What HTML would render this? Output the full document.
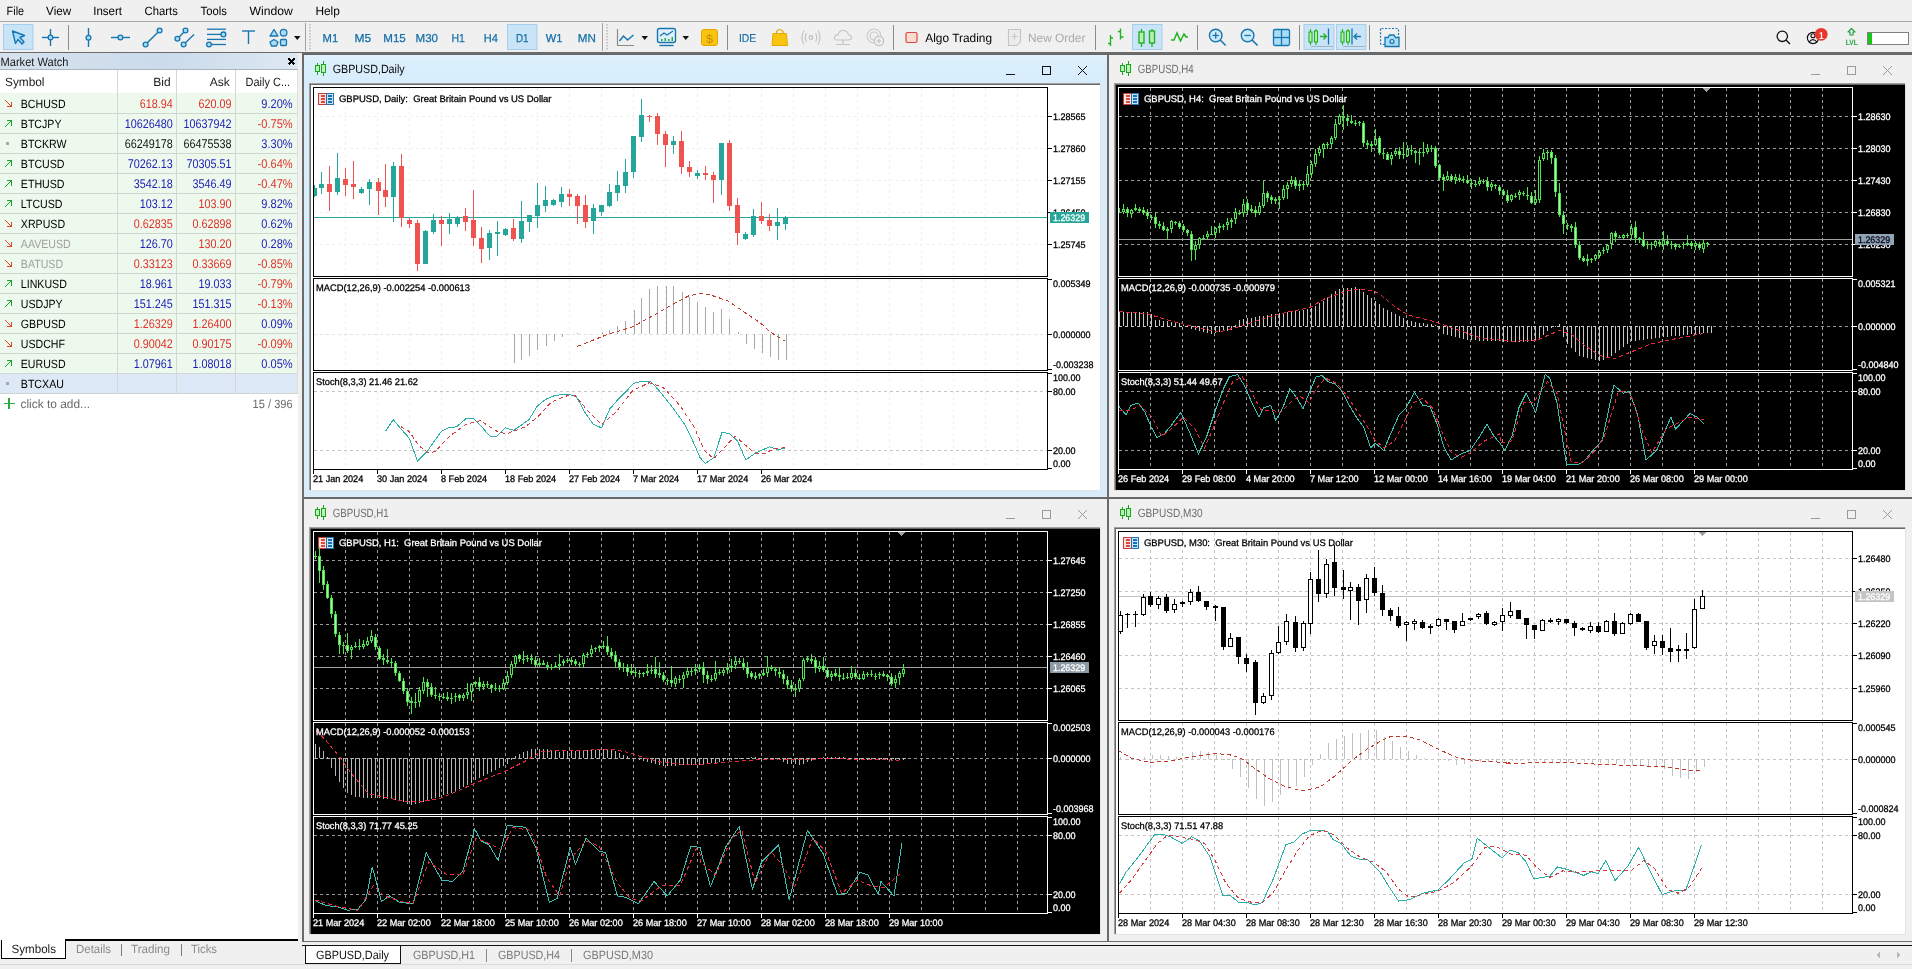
<!DOCTYPE html>
<html><head><meta charset="utf-8"><title>MetaTrader 5</title>
<style>html,body{margin:0;padding:0;background:#f0f0f0;overflow:hidden}svg{display:block;will-change:transform}text{font-family:"Liberation Sans",sans-serif}</style>
</head><body>
<svg width="1912" height="969" viewBox="0 0 1912 969" shape-rendering="crispEdges" text-rendering="geometricPrecision">
<defs><linearGradient id="acttitle" x1="0" x2="0" y1="0" y2="1"><stop offset="0" stop-color="#e4f3fd"/><stop offset="0.25" stop-color="#daeefc"/><stop offset="1" stop-color="#d8edfc"/></linearGradient></defs>
<rect x="0" y="0" width="1912" height="969" fill="#f0f0f0"/>
<rect x="0" y="0" width="1912" height="21" fill="#f0f0f0"/>
<rect x="0" y="21" width="1912" height="1" fill="#a8a8a8"/>
<text x="6.6" y="15.2" font-size="12" fill="#000" textLength="17.5" lengthAdjust="spacingAndGlyphs">File</text>
<text x="46.1" y="15.2" font-size="12" fill="#000" textLength="25.1" lengthAdjust="spacingAndGlyphs">View</text>
<text x="93.2" y="15.2" font-size="12" fill="#000" textLength="28.8" lengthAdjust="spacingAndGlyphs">Insert</text>
<text x="144.6" y="15.2" font-size="12" fill="#000" textLength="33.3" lengthAdjust="spacingAndGlyphs">Charts</text>
<text x="200.5" y="15.2" font-size="12" fill="#000" textLength="26.4" lengthAdjust="spacingAndGlyphs">Tools</text>
<text x="249.5" y="15.2" font-size="12" fill="#000" textLength="43.3" lengthAdjust="spacingAndGlyphs">Window</text>
<text x="315.4" y="15.2" font-size="12" fill="#000" textLength="24.5" lengthAdjust="spacingAndGlyphs">Help</text>
<g shape-rendering="geometricPrecision"><rect x="0" y="22" width="1912" height="30" fill="#f0f0f0"/>
<rect x="0" y="52" width="1912" height="2" fill="#6b6b6b"/>
<rect x="3.5" y="24.5" width="29.5" height="25" fill="#c9e3f7" stroke="#a4cdee" stroke-width="1"/>
<rect x="507.5" y="24.5" width="29.5" height="25" fill="#c9e3f7" stroke="#a4cdee" stroke-width="1"/>
<rect x="1132.5" y="24.5" width="29.5" height="25" fill="#c9e3f7" stroke="#a4cdee" stroke-width="1"/>
<rect x="1304" y="24.5" width="30" height="25" fill="#c9e3f7" stroke="#a4cdee" stroke-width="1"/>
<rect x="1336.5" y="24.5" width="29.5" height="25" fill="#c9e3f7" stroke="#a4cdee" stroke-width="1"/>
<line x1="68.5" y1="25" x2="68.5" y2="50" stroke="#8c8c8c" stroke-width="1"/>
<line x1="727.5" y1="25" x2="727.5" y2="50" stroke="#8c8c8c" stroke-width="1"/>
<line x1="893.5" y1="25" x2="893.5" y2="50" stroke="#8c8c8c" stroke-width="1"/>
<line x1="1095.5" y1="25" x2="1095.5" y2="50" stroke="#8c8c8c" stroke-width="1"/>
<line x1="1197.5" y1="25" x2="1197.5" y2="50" stroke="#8c8c8c" stroke-width="1"/>
<line x1="1299.5" y1="25" x2="1299.5" y2="50" stroke="#8c8c8c" stroke-width="1"/>
<line x1="1369.5" y1="25" x2="1369.5" y2="50" stroke="#8c8c8c" stroke-width="1"/>
<line x1="1405.5" y1="25" x2="1405.5" y2="50" stroke="#8c8c8c" stroke-width="1"/>
<line x1="305.5" y1="23" x2="305.5" y2="51" stroke="#a0a0a0" stroke-width="1"/>
<line x1="602.5" y1="23" x2="602.5" y2="51" stroke="#a0a0a0" stroke-width="1"/>
<line x1="310" y1="24" x2="310" y2="50" stroke="#b8b8b8" stroke-width="1.5" stroke-dasharray="1.5,1.5"/>
<line x1="607" y1="24" x2="607" y2="50" stroke="#b8b8b8" stroke-width="1.5" stroke-dasharray="1.5,1.5"/>
<path d="M12.5,31 L24.5,35.5 L20,37.5 L24,42 L22,44 L18,39.5 L15.5,43.5 Z" fill="#a9dcf6" stroke="#1776b0" stroke-width="1.4" stroke-linejoin="round"/>
<line x1="50.5" y1="29" x2="50.5" y2="46" stroke="#1776b0" stroke-width="1.4"/>
<line x1="42" y1="37.5" x2="59" y2="37.5" stroke="#1776b0" stroke-width="1.4"/>
<circle cx="50.5" cy="37.5" r="2.3" fill="#a9dcf6" stroke="#1776b0" stroke-width="1.3"/>
<line x1="88.5" y1="28" x2="88.5" y2="47" stroke="#1776b0" stroke-width="1.4"/>
<circle cx="88.5" cy="37.7" r="2.4" fill="#a9dcf6" stroke="#1776b0" stroke-width="1.3"/>
<line x1="111" y1="37.5" x2="130" y2="37.5" stroke="#1776b0" stroke-width="1.4"/>
<circle cx="120.4" cy="37.5" r="2.4" fill="#a9dcf6" stroke="#1776b0" stroke-width="1.3"/>
<line x1="145.6" y1="44.5" x2="159.6" y2="30.5" stroke="#1776b0" stroke-width="1.4"/>
<circle cx="145.6" cy="44.5" r="2.4" fill="#a9dcf6" stroke="#1776b0" stroke-width="1.3"/>
<circle cx="159.6" cy="30.5" r="2.4" fill="#a9dcf6" stroke="#1776b0" stroke-width="1.3"/>
<line x1="177.4" y1="38.7" x2="185.5" y2="30.5" stroke="#1776b0" stroke-width="1.4"/>
<line x1="183.6" y1="44.5" x2="194" y2="34.4" stroke="#1776b0" stroke-width="1.4"/>
<circle cx="185.5" cy="30.5" r="2.4" fill="#a9dcf6" stroke="#1776b0" stroke-width="1.3"/>
<circle cx="177.4" cy="38.7" r="2.4" fill="#a9dcf6" stroke="#1776b0" stroke-width="1.3"/>
<circle cx="183.6" cy="44.5" r="2.4" fill="#a9dcf6" stroke="#1776b0" stroke-width="1.3"/>
<line x1="207" y1="29.2" x2="226" y2="29.2" stroke="#1776b0" stroke-width="1.3"/>
<line x1="207" y1="34.4" x2="226" y2="34.4" stroke="#1776b0" stroke-width="1.3"/>
<line x1="207" y1="39.4" x2="226" y2="39.4" stroke="#1776b0" stroke-width="1.3"/>
<line x1="207" y1="44.5" x2="226" y2="44.5" stroke="#1776b0" stroke-width="1.3"/>
<circle cx="223.4" cy="34.4" r="2.4" fill="#a9dcf6" stroke="#1776b0" stroke-width="1.3"/>
<circle cx="209" cy="44.5" r="2.4" fill="#a9dcf6" stroke="#1776b0" stroke-width="1.3"/>
<line x1="242" y1="31" x2="255" y2="31" stroke="#1776b0" stroke-width="1.4"/>
<line x1="248.5" y1="31" x2="248.5" y2="44" stroke="#1776b0" stroke-width="1.4"/>
<path d="M274,29.5 L278,36 L270,36 Z" fill="#a9dcf6" stroke="#1776b0" stroke-width="1.3" stroke-linejoin="round"/>
<circle cx="283.6" cy="32.7" r="3.3" fill="#a9dcf6" stroke="#1776b0" stroke-width="1.3"/>
<path d="M274,39.5 L278,42 L276.5,46 L271.5,46 L270,42 Z" fill="#a9dcf6" stroke="#1776b0" stroke-width="1.3" stroke-linejoin="round"/>
<rect x="280.5" y="39.5" width="6" height="6" fill="#a9dcf6" stroke="#1776b0" stroke-width="1.3" rx="1"/>
<path d="M294,36 L300.5,36 L297.25,40 Z" fill="#111"/>
<text x="322.6" y="41.7" font-size="11.5" fill="#1670a8" textLength="15.6" lengthAdjust="spacingAndGlyphs" stroke="#1670a8" stroke-width="0.25">M1</text>
<text x="354.4" y="41.7" font-size="11.5" fill="#1670a8" textLength="16.7" lengthAdjust="spacingAndGlyphs" stroke="#1670a8" stroke-width="0.25">M5</text>
<text x="383.3" y="41.7" font-size="11.5" fill="#1670a8" textLength="22.5" lengthAdjust="spacingAndGlyphs" stroke="#1670a8" stroke-width="0.25">M15</text>
<text x="415.5" y="41.7" font-size="11.5" fill="#1670a8" textLength="22.5" lengthAdjust="spacingAndGlyphs" stroke="#1670a8" stroke-width="0.25">M30</text>
<text x="451.5" y="41.7" font-size="11.5" fill="#1670a8" textLength="13.4" lengthAdjust="spacingAndGlyphs" stroke="#1670a8" stroke-width="0.25">H1</text>
<text x="483.8" y="41.7" font-size="11.5" fill="#1670a8" textLength="14.2" lengthAdjust="spacingAndGlyphs" stroke="#1670a8" stroke-width="0.25">H4</text>
<text x="515.9" y="41.7" font-size="11.5" fill="#1670a8" textLength="12.6" lengthAdjust="spacingAndGlyphs" stroke="#1670a8" stroke-width="0.25">D1</text>
<text x="545.7" y="41.7" font-size="11.5" fill="#1670a8" textLength="16.7" lengthAdjust="spacingAndGlyphs" stroke="#1670a8" stroke-width="0.25">W1</text>
<text x="577.8" y="41.7" font-size="11.5" fill="#1670a8" textLength="18.1" lengthAdjust="spacingAndGlyphs" stroke="#1670a8" stroke-width="0.25">MN</text>
<path d="M617.5,29 L617.5,45.5 L634,45.5" fill="none" stroke="#8a8a8a" stroke-width="1.2"/>
<path d="M619.5,41 L623.5,36 L627.5,40 L633.5,35" fill="none" stroke="#1776b0" stroke-width="1.5"/>
<path d="M641.5,36 L648,36 L644.75,40 Z" fill="#111"/>
<rect x="657.5" y="28.5" width="18" height="14" rx="2" fill="#dff1fb" stroke="#1776b0" stroke-width="1.4"/>
<path d="M659.5,45.5 L673.5,45.5" stroke="#1776b0" stroke-width="1.4"/>
<path d="M660,36 L664,33 L667,35 L673,31" fill="none" stroke="#1776b0" stroke-width="1.2"/>
<rect x="661.0" y="39" width="1.5" height="2" fill="#27a844"/>
<rect x="664.5" y="38" width="1.5" height="3" fill="#27a844"/>
<rect x="668.0" y="39" width="1.5" height="2" fill="#27a844"/>
<rect x="671.5" y="37" width="1.5" height="4" fill="#27a844"/>
<path d="M682.5,36 L689,36 L685.75,40 Z" fill="#111"/>
<rect x="701.5" y="29.5" width="16" height="16" rx="2.5" fill="#f8c410" stroke="#e9a300" stroke-width="1"/>
<text x="706" y="42.5" font-size="12" fill="#c78a00" textLength="7" lengthAdjust="spacingAndGlyphs">$</text>
<text x="738.9" y="41.6" font-size="11.5" fill="#1670a8" textLength="17.2" lengthAdjust="spacingAndGlyphs" stroke="#1670a8" stroke-width="0.2">IDE</text>
<path d="M773,33.5 L786.5,33.5 L787.5,45.5 L772,45.5 Z" fill="#f8c410" stroke="#e5a800" stroke-width="1"/>
<path d="M776.5,34 L776.5,31.5 Q779.75,27.5 783,31.5 L783,34" fill="none" stroke="#e5a800" stroke-width="1.2"/>
<circle cx="811" cy="37.5" r="1.8" fill="none" stroke="#bdbdbd" stroke-width="1.2"/>
<path d="M806.5,33 Q804,37.5 806.5,42 M815.5,33 Q818,37.5 815.5,42 M804,30.5 Q800,37.5 804,44.5 M818,30.5 Q822,37.5 818,44.5" fill="none" stroke="#c4c4c4" stroke-width="1.1"/>
<path d="M837,40 Q834,40 834.5,37 Q835,34.5 838,35 Q839,30 843.5,30.5 Q848,31 848.5,35 Q852,35 851.5,38 Q851,40 848.5,40 Z" fill="none" stroke="#c4c4c4" stroke-width="1.1"/>
<path d="M843,40 L843,44 M836,44.5 L850,44.5" stroke="#c4c4c4" stroke-width="1.1"/>
<circle cx="874" cy="36" r="7" fill="none" stroke="#c8c8c8" stroke-width="1.1"/>
<circle cx="874" cy="36" r="4" fill="none" stroke="#c8c8c8" stroke-width="1.1"/>
<circle cx="879" cy="41" r="4.8" fill="#f0f0f0" stroke="#bdbdbd" stroke-width="1.1"/>
<path d="M879,38.5 L879,43.5 M876.5,41 L881.5,41" stroke="#bdbdbd" stroke-width="1.1"/>
<rect x="906" y="32.5" width="11" height="10" rx="1.5" fill="#fbdcd0" stroke="#e04545" stroke-width="1.2"/>
<text x="925.3" y="41.6" font-size="12" fill="#000" textLength="66.7" lengthAdjust="spacingAndGlyphs">Algo Trading</text>
<path d="M1008.5,29.5 L1020.5,29.5 L1020.5,41.5 L1017,45.5 L1008.5,45.5 Z" fill="#ececec" stroke="#c4c4c4" stroke-width="1.1"/>
<path d="M1014.5,33.5 L1014.5,39.5 M1011.5,36.5 L1017.5,36.5" stroke="#c4c4c4" stroke-width="1.1"/>
<text x="1028" y="41.6" font-size="12" fill="#a8a8a8" textLength="57.4" lengthAdjust="spacingAndGlyphs">New Order</text>
<path d="M1110.5,35 L1110.5,46 M1108,43.5 L1110.5,43.5 M1110.5,38 L1113,38 M1120.5,28.5 L1120.5,39.5 M1118,31.5 L1120.5,31.5 M1120.5,37 L1123.5,37" stroke="#22b322" stroke-width="1.4" fill="none"/>
<path d="M1141.5,29 L1141.5,47 M1152,29 L1152,47" stroke="#22b322" stroke-width="1.3"/>
<rect x="1139" y="32" width="5" height="11" fill="#b8f0b8" stroke="#22b322" stroke-width="1.4"/>
<rect x="1149.5" y="31" width="5" height="12" fill="#b8f0b8" stroke="#22b322" stroke-width="1.4"/>
<path d="M1171,40 L1174,40 L1177,33 L1180.5,41 L1184,34 L1186,37 L1188,37" fill="none" stroke="#22b322" stroke-width="1.5"/>
<circle cx="1215.7" cy="35.5" r="6.3" fill="#cde9f7" stroke="#1776b0" stroke-width="1.4"/>
<line x1="1220.2" y1="40" x2="1225.7" y2="45.5" stroke="#1776b0" stroke-width="1.6"/>
<line x1="1212.5" y1="35.5" x2="1218.9" y2="35.5" stroke="#1776b0" stroke-width="1.3"/>
<line x1="1215.7" y1="32.3" x2="1215.7" y2="38.7" stroke="#1776b0" stroke-width="1.3"/>
<circle cx="1247.6" cy="35.5" r="6.3" fill="#cde9f7" stroke="#1776b0" stroke-width="1.4"/>
<line x1="1252.1" y1="40" x2="1257.6" y2="45.5" stroke="#1776b0" stroke-width="1.6"/>
<line x1="1244.3999999999999" y1="35.5" x2="1250.8" y2="35.5" stroke="#1776b0" stroke-width="1.3"/>
<rect x="1273.5" y="29.5" width="16" height="16" rx="1.5" fill="#a9dcf6" stroke="#1776b0" stroke-width="1.3"/>
<line x1="1281.5" y1="29.5" x2="1281.5" y2="45.5" stroke="#1776b0" stroke-width="1.3"/>
<line x1="1273.5" y1="37.5" x2="1289.5" y2="37.5" stroke="#1776b0" stroke-width="1.3"/>
<path d="M1310.5,29 L1310.5,45 M1316,29 L1316,45" stroke="#22b322" stroke-width="1.1"/>
<rect x="1309" y="32" width="3" height="10" fill="#b8f0b8" stroke="#22b322" stroke-width="1.1"/>
<rect x="1314.5" y="31" width="3" height="11" fill="#b8f0b8" stroke="#22b322" stroke-width="1.1"/>
<line x1="1311" y1="46.5" x2="1333" y2="46.5" stroke="#9bb3c6" stroke-width="1"/>
<path d="M1342.5,29 L1342.5,45 M1348,29 L1348,45" stroke="#22b322" stroke-width="1.1"/>
<rect x="1341" y="32" width="3" height="10" fill="#b8f0b8" stroke="#22b322" stroke-width="1.1"/>
<rect x="1346.5" y="31" width="3" height="11" fill="#b8f0b8" stroke="#22b322" stroke-width="1.1"/>
<line x1="1343" y1="46.5" x2="1365" y2="46.5" stroke="#9bb3c6" stroke-width="1"/>
<path d="M1320,36.5 L1326.5,36.5 M1323.5,33.5 L1326.5,36.5 L1323.5,39.5" fill="none" stroke="#22b322" stroke-width="1.3"/>
<line x1="1328.5" y1="28.5" x2="1328.5" y2="44.5" stroke="#1776b0" stroke-width="1.3"/>
<line x1="1352" y1="28.5" x2="1352" y2="44.5" stroke="#1776b0" stroke-width="1.3"/>
<path d="M1354,36.5 L1361,36.5 M1357,33.5 L1354,36.5 L1357,39.5" fill="none" stroke="#1776b0" stroke-width="1.3"/>
<rect x="1380.5" y="28.5" width="18" height="16" rx="1" fill="none" stroke="#1776b0" stroke-width="1.2" stroke-dasharray="2,1.5"/>
<path d="M1385,37.5 L1388,37.5 L1389.5,35 L1394,35 L1395.5,37.5 L1399,37.5 L1399,46.5 L1385,46.5 Z" fill="#a9dcf6" stroke="#1776b0" stroke-width="1.3"/>
<circle cx="1392" cy="41.5" r="2" fill="none" stroke="#1776b0" stroke-width="1.2"/>
<circle cx="1782.3" cy="36.3" r="5.2" fill="none" stroke="#111" stroke-width="1.3"/>
<line x1="1786" y1="40" x2="1790" y2="44" stroke="#111" stroke-width="1.5"/>
<circle cx="1813" cy="38" r="5.6" fill="none" stroke="#111" stroke-width="1.2"/>
<circle cx="1813" cy="35.8" r="2" fill="none" stroke="#111" stroke-width="1.1"/>
<path d="M1809,42 Q1813,37.2 1817,42" fill="none" stroke="#111" stroke-width="1.1"/>
<circle cx="1821.2" cy="34.3" r="6.4" fill="#e8362a"/>
<text x="1819" y="38.6" font-size="10" fill="#fff" textLength="4.6" lengthAdjust="spacingAndGlyphs" font-weight="bold">1</text>
<path d="M1851.5,28.5 L1855,32 L1853,32 L1853,35 L1850,35 L1850,32 L1848,32 Z" fill="none" stroke="#22a040" stroke-width="1.2" stroke-linejoin="round"/>
<text x="1845.8" y="45" font-size="7.5" fill="#22a040" textLength="12" lengthAdjust="spacingAndGlyphs" font-weight="bold">LVL</text>
<rect x="1867.5" y="32.5" width="41" height="12" fill="#fff" stroke="#808080" stroke-width="1"/>
<rect x="1868" y="33" width="4" height="11" fill="#18c818"/></g>
<rect x="302" y="54" width="1610" height="888" fill="#6b6b6b"/>
<rect x="0" y="54" width="302" height="886" fill="#ffffff"/>
<defs><linearGradient id="mwh" x1="0" x2="1" y1="0" y2="0"><stop offset="0" stop-color="#d7e2ee"/><stop offset="0.55" stop-color="#cbdbeb"/><stop offset="1" stop-color="#dde8f2"/></linearGradient></defs>
<rect x="0" y="53" width="298" height="16" fill="url(#mwh)"/>
<rect x="298" y="53" width="4" height="887" fill="#f0f0f0"/>
<rect x="0" y="69" width="298" height="1" fill="#a9b4bf"/>
<text x="0.5" y="66" font-size="12" fill="#1a1a1a" textLength="68" lengthAdjust="spacingAndGlyphs">Market Watch</text>
<path d="M288.5,58.5 L294.5,64.5 M294.5,58.5 L288.5,64.5" stroke="#000" stroke-width="1.8"/>
<rect x="0" y="70" width="298" height="23" fill="#ffffff"/>
<text x="5" y="85.6" font-size="12" fill="#1a1a1a" textLength="39.5" lengthAdjust="spacingAndGlyphs">Symbol</text>
<text x="170.7" y="85.6" font-size="12" fill="#1a1a1a" text-anchor="end">Bid</text>
<text x="229.8" y="85.6" font-size="12" fill="#1a1a1a" text-anchor="end">Ask</text>
<text x="245.6" y="85.6" font-size="12" fill="#1a1a1a" textLength="44.5" lengthAdjust="spacingAndGlyphs">Daily C...</text>
<rect x="0" y="373" width="298" height="20" fill="#dde9f6"/>
<rect x="0" y="353" width="298" height="20" fill="#ecf9ec"/>
<rect x="0" y="333" width="298" height="20" fill="#ecf9ec"/>
<rect x="0" y="313" width="298" height="20" fill="#ecf9ec"/>
<rect x="0" y="293" width="298" height="20" fill="#ecf9ec"/>
<rect x="0" y="273" width="298" height="20" fill="#ecf9ec"/>
<rect x="0" y="253" width="298" height="20" fill="#ecf9ec"/>
<rect x="0" y="233" width="298" height="20" fill="#ecf9ec"/>
<rect x="0" y="213" width="298" height="20" fill="#ecf9ec"/>
<rect x="0" y="193" width="298" height="20" fill="#ecf9ec"/>
<rect x="0" y="173" width="298" height="20" fill="#ecf9ec"/>
<rect x="0" y="153" width="298" height="20" fill="#ecf9ec"/>
<rect x="0" y="133" width="298" height="20" fill="#ecf9ec"/>
<rect x="0" y="113" width="298" height="20" fill="#ecf9ec"/>
<rect x="0" y="93" width="298" height="20" fill="#ecf9ec"/>
<rect x="0" y="113" width="298" height="1" fill="#cfd6cf"/>
<path d="M5,100 L11.5,106.5 M11.5,101.5 L11.5,106.5 L6.5,106.5" fill="none" stroke="#e5452f" stroke-width="1.25"/>
<text x="20.8" y="107.6" font-size="12" fill="#000" textLength="44.8" lengthAdjust="spacingAndGlyphs">BCHUSD</text>
<text x="172.7" y="107.6" font-size="12.6" fill="#e2302a" textLength="33.0" lengthAdjust="spacingAndGlyphs" text-anchor="end">618.94</text>
<text x="231.6" y="107.6" font-size="12.6" fill="#e2302a" textLength="33.0" lengthAdjust="spacingAndGlyphs" text-anchor="end">620.09</text>
<text x="292.6" y="107.6" font-size="12.6" fill="#2222b8" textLength="31.3" lengthAdjust="spacingAndGlyphs" text-anchor="end">9.20%</text>
<rect x="0" y="133" width="298" height="1" fill="#cfd6cf"/>
<path d="M5,127 L11.5,120.5 M6.5,120.5 L11.5,120.5 L11.5,125.5" fill="none" stroke="#1fa12f" stroke-width="1.25"/>
<text x="20.8" y="127.6" font-size="12" fill="#000" textLength="40.7" lengthAdjust="spacingAndGlyphs">BTCJPY</text>
<text x="172.7" y="127.6" font-size="12.6" fill="#2222b8" textLength="48.0" lengthAdjust="spacingAndGlyphs" text-anchor="end">10626480</text>
<text x="231.6" y="127.6" font-size="12.6" fill="#2222b8" textLength="48.0" lengthAdjust="spacingAndGlyphs" text-anchor="end">10637942</text>
<text x="292.6" y="127.6" font-size="12.6" fill="#e2302a" textLength="35.0" lengthAdjust="spacingAndGlyphs" text-anchor="end">-0.75%</text>
<rect x="0" y="153" width="298" height="1" fill="#cfd6cf"/>
<circle cx="7.5" cy="143.5" r="1.6" fill="#a8a8a8"/>
<text x="20.8" y="147.6" font-size="12" fill="#000" textLength="45.8" lengthAdjust="spacingAndGlyphs">BTCKRW</text>
<text x="172.7" y="147.6" font-size="12.6" fill="#141414" textLength="48.0" lengthAdjust="spacingAndGlyphs" text-anchor="end">66249178</text>
<text x="231.6" y="147.6" font-size="12.6" fill="#141414" textLength="48.0" lengthAdjust="spacingAndGlyphs" text-anchor="end">66475538</text>
<text x="292.6" y="147.6" font-size="12.6" fill="#2222b8" textLength="31.3" lengthAdjust="spacingAndGlyphs" text-anchor="end">3.30%</text>
<rect x="0" y="173" width="298" height="1" fill="#cfd6cf"/>
<path d="M5,167 L11.5,160.5 M6.5,160.5 L11.5,160.5 L11.5,165.5" fill="none" stroke="#1fa12f" stroke-width="1.25"/>
<text x="20.8" y="167.6" font-size="12" fill="#000" textLength="43.7" lengthAdjust="spacingAndGlyphs">BTCUSD</text>
<text x="172.7" y="167.6" font-size="12.6" fill="#2222b8" textLength="45.0" lengthAdjust="spacingAndGlyphs" text-anchor="end">70262.13</text>
<text x="231.6" y="167.6" font-size="12.6" fill="#2222b8" textLength="45.0" lengthAdjust="spacingAndGlyphs" text-anchor="end">70305.51</text>
<text x="292.6" y="167.6" font-size="12.6" fill="#e2302a" textLength="35.0" lengthAdjust="spacingAndGlyphs" text-anchor="end">-0.64%</text>
<rect x="0" y="193" width="298" height="1" fill="#cfd6cf"/>
<path d="M5,187 L11.5,180.5 M6.5,180.5 L11.5,180.5 L11.5,185.5" fill="none" stroke="#1fa12f" stroke-width="1.25"/>
<text x="20.8" y="187.6" font-size="12" fill="#000" textLength="43.7" lengthAdjust="spacingAndGlyphs">ETHUSD</text>
<text x="172.7" y="187.6" font-size="12.6" fill="#2222b8" textLength="39.0" lengthAdjust="spacingAndGlyphs" text-anchor="end">3542.18</text>
<text x="231.6" y="187.6" font-size="12.6" fill="#2222b8" textLength="39.0" lengthAdjust="spacingAndGlyphs" text-anchor="end">3546.49</text>
<text x="292.6" y="187.6" font-size="12.6" fill="#e2302a" textLength="35.0" lengthAdjust="spacingAndGlyphs" text-anchor="end">-0.47%</text>
<rect x="0" y="213" width="298" height="1" fill="#cfd6cf"/>
<path d="M5,207 L11.5,200.5 M6.5,200.5 L11.5,200.5 L11.5,205.5" fill="none" stroke="#1fa12f" stroke-width="1.25"/>
<text x="20.8" y="207.6" font-size="12" fill="#000" textLength="41.7" lengthAdjust="spacingAndGlyphs">LTCUSD</text>
<text x="172.7" y="207.6" font-size="12.6" fill="#2222b8" textLength="33.0" lengthAdjust="spacingAndGlyphs" text-anchor="end">103.12</text>
<text x="231.6" y="207.6" font-size="12.6" fill="#e2302a" textLength="33.0" lengthAdjust="spacingAndGlyphs" text-anchor="end">103.90</text>
<text x="292.6" y="207.6" font-size="12.6" fill="#2222b8" textLength="31.3" lengthAdjust="spacingAndGlyphs" text-anchor="end">9.82%</text>
<rect x="0" y="233" width="298" height="1" fill="#cfd6cf"/>
<path d="M5,220 L11.5,226.5 M11.5,221.5 L11.5,226.5 L6.5,226.5" fill="none" stroke="#e5452f" stroke-width="1.25"/>
<text x="20.8" y="227.6" font-size="12" fill="#000" textLength="44.3" lengthAdjust="spacingAndGlyphs">XRPUSD</text>
<text x="172.7" y="227.6" font-size="12.6" fill="#e2302a" textLength="39.0" lengthAdjust="spacingAndGlyphs" text-anchor="end">0.62835</text>
<text x="231.6" y="227.6" font-size="12.6" fill="#e2302a" textLength="39.0" lengthAdjust="spacingAndGlyphs" text-anchor="end">0.62898</text>
<text x="292.6" y="227.6" font-size="12.6" fill="#2222b8" textLength="31.3" lengthAdjust="spacingAndGlyphs" text-anchor="end">0.62%</text>
<rect x="0" y="253" width="298" height="1" fill="#cfd6cf"/>
<path d="M5,240 L11.5,246.5 M11.5,241.5 L11.5,246.5 L6.5,246.5" fill="none" stroke="#e5452f" stroke-width="1.25"/>
<text x="20.8" y="247.6" font-size="12" fill="#a0a0a0" textLength="50.0" lengthAdjust="spacingAndGlyphs">AAVEUSD</text>
<text x="172.7" y="247.6" font-size="12.6" fill="#2222b8" textLength="33.0" lengthAdjust="spacingAndGlyphs" text-anchor="end">126.70</text>
<text x="231.6" y="247.6" font-size="12.6" fill="#e2302a" textLength="33.0" lengthAdjust="spacingAndGlyphs" text-anchor="end">130.20</text>
<text x="292.6" y="247.6" font-size="12.6" fill="#2222b8" textLength="31.3" lengthAdjust="spacingAndGlyphs" text-anchor="end">0.28%</text>
<rect x="0" y="273" width="298" height="1" fill="#cfd6cf"/>
<path d="M5,260 L11.5,266.5 M11.5,261.5 L11.5,266.5 L6.5,266.5" fill="none" stroke="#e5452f" stroke-width="1.25"/>
<text x="20.8" y="267.6" font-size="12" fill="#a0a0a0" textLength="42.3" lengthAdjust="spacingAndGlyphs">BATUSD</text>
<text x="172.7" y="267.6" font-size="12.6" fill="#e2302a" textLength="39.0" lengthAdjust="spacingAndGlyphs" text-anchor="end">0.33123</text>
<text x="231.6" y="267.6" font-size="12.6" fill="#e2302a" textLength="39.0" lengthAdjust="spacingAndGlyphs" text-anchor="end">0.33669</text>
<text x="292.6" y="267.6" font-size="12.6" fill="#e2302a" textLength="35.0" lengthAdjust="spacingAndGlyphs" text-anchor="end">-0.85%</text>
<rect x="0" y="293" width="298" height="1" fill="#cfd6cf"/>
<path d="M5,287 L11.5,280.5 M6.5,280.5 L11.5,280.5 L11.5,285.5" fill="none" stroke="#1fa12f" stroke-width="1.25"/>
<text x="20.8" y="287.6" font-size="12" fill="#000" textLength="46.0" lengthAdjust="spacingAndGlyphs">LINKUSD</text>
<text x="172.7" y="287.6" font-size="12.6" fill="#2222b8" textLength="33.0" lengthAdjust="spacingAndGlyphs" text-anchor="end">18.961</text>
<text x="231.6" y="287.6" font-size="12.6" fill="#2222b8" textLength="33.0" lengthAdjust="spacingAndGlyphs" text-anchor="end">19.033</text>
<text x="292.6" y="287.6" font-size="12.6" fill="#e2302a" textLength="35.0" lengthAdjust="spacingAndGlyphs" text-anchor="end">-0.79%</text>
<rect x="0" y="313" width="298" height="1" fill="#cfd6cf"/>
<path d="M5,307 L11.5,300.5 M6.5,300.5 L11.5,300.5 L11.5,305.5" fill="none" stroke="#1fa12f" stroke-width="1.25"/>
<text x="20.8" y="307.6" font-size="12" fill="#000" textLength="41.9" lengthAdjust="spacingAndGlyphs">USDJPY</text>
<text x="172.7" y="307.6" font-size="12.6" fill="#2222b8" textLength="39.0" lengthAdjust="spacingAndGlyphs" text-anchor="end">151.245</text>
<text x="231.6" y="307.6" font-size="12.6" fill="#2222b8" textLength="39.0" lengthAdjust="spacingAndGlyphs" text-anchor="end">151.315</text>
<text x="292.6" y="307.6" font-size="12.6" fill="#e2302a" textLength="35.0" lengthAdjust="spacingAndGlyphs" text-anchor="end">-0.13%</text>
<rect x="0" y="333" width="298" height="1" fill="#cfd6cf"/>
<path d="M5,320 L11.5,326.5 M11.5,321.5 L11.5,326.5 L6.5,326.5" fill="none" stroke="#e5452f" stroke-width="1.25"/>
<text x="20.8" y="327.6" font-size="12" fill="#000" textLength="44.9" lengthAdjust="spacingAndGlyphs">GBPUSD</text>
<text x="172.7" y="327.6" font-size="12.6" fill="#e2302a" textLength="39.0" lengthAdjust="spacingAndGlyphs" text-anchor="end">1.26329</text>
<text x="231.6" y="327.6" font-size="12.6" fill="#e2302a" textLength="39.0" lengthAdjust="spacingAndGlyphs" text-anchor="end">1.26400</text>
<text x="292.6" y="327.6" font-size="12.6" fill="#2222b8" textLength="31.3" lengthAdjust="spacingAndGlyphs" text-anchor="end">0.09%</text>
<rect x="0" y="353" width="298" height="1" fill="#cfd6cf"/>
<path d="M5,340 L11.5,346.5 M11.5,341.5 L11.5,346.5 L6.5,346.5" fill="none" stroke="#e5452f" stroke-width="1.25"/>
<text x="20.8" y="347.6" font-size="12" fill="#000" textLength="44.2" lengthAdjust="spacingAndGlyphs">USDCHF</text>
<text x="172.7" y="347.6" font-size="12.6" fill="#e2302a" textLength="39.0" lengthAdjust="spacingAndGlyphs" text-anchor="end">0.90042</text>
<text x="231.6" y="347.6" font-size="12.6" fill="#e2302a" textLength="39.0" lengthAdjust="spacingAndGlyphs" text-anchor="end">0.90175</text>
<text x="292.6" y="347.6" font-size="12.6" fill="#e2302a" textLength="35.0" lengthAdjust="spacingAndGlyphs" text-anchor="end">-0.09%</text>
<rect x="0" y="373" width="298" height="1" fill="#cfd6cf"/>
<path d="M5,367 L11.5,360.5 M6.5,360.5 L11.5,360.5 L11.5,365.5" fill="none" stroke="#1fa12f" stroke-width="1.25"/>
<text x="20.8" y="367.6" font-size="12" fill="#000" textLength="44.8" lengthAdjust="spacingAndGlyphs">EURUSD</text>
<text x="172.7" y="367.6" font-size="12.6" fill="#2222b8" textLength="39.0" lengthAdjust="spacingAndGlyphs" text-anchor="end">1.07961</text>
<text x="231.6" y="367.6" font-size="12.6" fill="#2222b8" textLength="39.0" lengthAdjust="spacingAndGlyphs" text-anchor="end">1.08018</text>
<text x="292.6" y="367.6" font-size="12.6" fill="#2222b8" textLength="31.3" lengthAdjust="spacingAndGlyphs" text-anchor="end">0.05%</text>
<rect x="0" y="393" width="298" height="1" fill="#cfd6cf"/>
<circle cx="7.5" cy="383.5" r="1.6" fill="#a8a8a8"/>
<text x="20.8" y="387.6" font-size="12" fill="#000" textLength="43.1" lengthAdjust="spacingAndGlyphs">BTCXAU</text>
<line x1="117.5" y1="70" x2="117.5" y2="393" stroke="#d4d8d4" stroke-width="1"/>
<line x1="176.5" y1="70" x2="176.5" y2="393" stroke="#d4d8d4" stroke-width="1"/>
<line x1="235.5" y1="70" x2="235.5" y2="393" stroke="#d4d8d4" stroke-width="1"/>
<line x1="297.5" y1="70" x2="297.5" y2="393" stroke="#e0e0e0" stroke-width="1"/>
<path d="M9,398 L9,409 M3.5,403.5 L14.5,403.5" stroke="#28a745" stroke-width="1.2"/>
<text x="20.5" y="407.6" font-size="12" fill="#6a6a6a" textLength="69.5" lengthAdjust="spacingAndGlyphs">click to add...</text>
<text x="292.6" y="407.6" font-size="12" fill="#6a6a6a" textLength="40" lengthAdjust="spacingAndGlyphs" text-anchor="end">15 / 396</text>
<rect x="0" y="939.5" width="302" height="24" fill="#f0f0f0"/>
<line x1="65" y1="940" x2="298" y2="940" stroke="#000" stroke-width="1.2"/>
<path d="M1.5,940 L1.5,958.5 L65.5,958.5 L65.5,940" fill="#ffffff" stroke="#000" stroke-width="1.2"/>
<rect x="2" y="940" width="63" height="18" fill="#fff"/>
<text x="11.5" y="952.6" font-size="12" fill="#1a1a1a" textLength="44.5" lengthAdjust="spacingAndGlyphs">Symbols</text>
<text x="76" y="952.6" font-size="12" fill="#8a8a8a" textLength="35" lengthAdjust="spacingAndGlyphs">Details</text>
<line x1="121.5" y1="944" x2="121.5" y2="956" stroke="#7a7a7a" stroke-width="1"/>
<text x="131" y="952.6" font-size="12" fill="#8a8a8a" textLength="39" lengthAdjust="spacingAndGlyphs">Trading</text>
<line x1="181.5" y1="944" x2="181.5" y2="956" stroke="#7a7a7a" stroke-width="1"/>
<text x="191" y="952.6" font-size="12" fill="#8a8a8a" textLength="26" lengthAdjust="spacingAndGlyphs">Ticks</text>
<rect x="0" y="963.5" width="302" height="1" fill="#d8d8d8"/>
<rect x="304" y="54" width="803" height="443" fill="#d9ecfa"/>
<rect x="304" y="54" width="803" height="29" fill="url(#acttitle)"/>
<path d="M317.5,63 L317.5,74.5 M323.5,61 L323.5,75.5" stroke="#1ca31c" stroke-width="1.3"/>
<rect x="315.7" y="65.5" width="3.6" height="6" fill="#b5f5b5" stroke="#1ca31c" stroke-width="1.4"/>
<rect x="321.7" y="64.5" width="3.6" height="8" fill="#b5f5b5" stroke="#1ca31c" stroke-width="1.4"/>
<text x="332.7" y="72.7" font-size="12" fill="#0a0a0a" textLength="72" lengthAdjust="spacingAndGlyphs">GBPUSD,Daily</text>
<line x1="1006" y1="74.5" x2="1015" y2="74.5" stroke="#111" stroke-width="1.3"/>
<rect x="1042.5" y="66.5" width="8" height="8" fill="none" stroke="#111" stroke-width="1.2"/>
<path d="M1078,66 L1087,75 M1087,66 L1078,75" stroke="#111" stroke-width="1.1"/>
<rect x="309" y="83" width="791" height="1" fill="#a0a0a0"/>
<rect x="309" y="83" width="1" height="407" fill="#a0a0a0"/>
<rect x="310" y="84" width="790" height="1" fill="#696969"/>
<rect x="310" y="84" width="1" height="406" fill="#696969"/>
<rect x="309" y="490" width="792" height="1" fill="#e3e3e3"/>
<rect x="1100" y="83" width="1" height="408" fill="#e3e3e3"/>
<rect x="311" y="85" width="789" height="405" fill="#ffffff"/>
<defs><clipPath id="cmd"><rect x="313.5" y="87.5" width="733" height="188"/></clipPath><clipPath id="cad"><rect x="313.5" y="278.5" width="733" height="91"/></clipPath><clipPath id="csd"><rect x="313.5" y="372.5" width="733" height="96"/></clipPath></defs>
<line x1="345.5" y1="88" x2="345.5" y2="276" stroke="#f0f0f0" stroke-width="1" stroke-dasharray="3,3"/>
<line x1="377.5" y1="88" x2="377.5" y2="276" stroke="#f0f0f0" stroke-width="1" stroke-dasharray="3,3"/>
<line x1="409.5" y1="88" x2="409.5" y2="276" stroke="#f0f0f0" stroke-width="1" stroke-dasharray="3,3"/>
<line x1="441.5" y1="88" x2="441.5" y2="276" stroke="#f0f0f0" stroke-width="1" stroke-dasharray="3,3"/>
<line x1="473.5" y1="88" x2="473.5" y2="276" stroke="#f0f0f0" stroke-width="1" stroke-dasharray="3,3"/>
<line x1="505.5" y1="88" x2="505.5" y2="276" stroke="#f0f0f0" stroke-width="1" stroke-dasharray="3,3"/>
<line x1="537.5" y1="88" x2="537.5" y2="276" stroke="#f0f0f0" stroke-width="1" stroke-dasharray="3,3"/>
<line x1="569.5" y1="88" x2="569.5" y2="276" stroke="#f0f0f0" stroke-width="1" stroke-dasharray="3,3"/>
<line x1="601.5" y1="88" x2="601.5" y2="276" stroke="#f0f0f0" stroke-width="1" stroke-dasharray="3,3"/>
<line x1="633.5" y1="88" x2="633.5" y2="276" stroke="#f0f0f0" stroke-width="1" stroke-dasharray="3,3"/>
<line x1="665.5" y1="88" x2="665.5" y2="276" stroke="#f0f0f0" stroke-width="1" stroke-dasharray="3,3"/>
<line x1="697.5" y1="88" x2="697.5" y2="276" stroke="#f0f0f0" stroke-width="1" stroke-dasharray="3,3"/>
<line x1="729.5" y1="88" x2="729.5" y2="276" stroke="#f0f0f0" stroke-width="1" stroke-dasharray="3,3"/>
<line x1="761.5" y1="88" x2="761.5" y2="276" stroke="#f0f0f0" stroke-width="1" stroke-dasharray="3,3"/>
<line x1="793.5" y1="88" x2="793.5" y2="276" stroke="#f0f0f0" stroke-width="1" stroke-dasharray="3,3"/>
<line x1="825.5" y1="88" x2="825.5" y2="276" stroke="#f0f0f0" stroke-width="1" stroke-dasharray="3,3"/>
<line x1="857.5" y1="88" x2="857.5" y2="276" stroke="#f0f0f0" stroke-width="1" stroke-dasharray="3,3"/>
<line x1="889.5" y1="88" x2="889.5" y2="276" stroke="#f0f0f0" stroke-width="1" stroke-dasharray="3,3"/>
<line x1="921.5" y1="88" x2="921.5" y2="276" stroke="#f0f0f0" stroke-width="1" stroke-dasharray="3,3"/>
<line x1="953.5" y1="88" x2="953.5" y2="276" stroke="#f0f0f0" stroke-width="1" stroke-dasharray="3,3"/>
<line x1="985.5" y1="88" x2="985.5" y2="276" stroke="#f0f0f0" stroke-width="1" stroke-dasharray="3,3"/>
<line x1="1017.5" y1="88" x2="1017.5" y2="276" stroke="#f0f0f0" stroke-width="1" stroke-dasharray="3,3"/>
<line x1="345.5" y1="279" x2="345.5" y2="370" stroke="#f0f0f0" stroke-width="1" stroke-dasharray="3,3"/>
<line x1="377.5" y1="279" x2="377.5" y2="370" stroke="#f0f0f0" stroke-width="1" stroke-dasharray="3,3"/>
<line x1="409.5" y1="279" x2="409.5" y2="370" stroke="#f0f0f0" stroke-width="1" stroke-dasharray="3,3"/>
<line x1="441.5" y1="279" x2="441.5" y2="370" stroke="#f0f0f0" stroke-width="1" stroke-dasharray="3,3"/>
<line x1="473.5" y1="279" x2="473.5" y2="370" stroke="#f0f0f0" stroke-width="1" stroke-dasharray="3,3"/>
<line x1="505.5" y1="279" x2="505.5" y2="370" stroke="#f0f0f0" stroke-width="1" stroke-dasharray="3,3"/>
<line x1="537.5" y1="279" x2="537.5" y2="370" stroke="#f0f0f0" stroke-width="1" stroke-dasharray="3,3"/>
<line x1="569.5" y1="279" x2="569.5" y2="370" stroke="#f0f0f0" stroke-width="1" stroke-dasharray="3,3"/>
<line x1="601.5" y1="279" x2="601.5" y2="370" stroke="#f0f0f0" stroke-width="1" stroke-dasharray="3,3"/>
<line x1="633.5" y1="279" x2="633.5" y2="370" stroke="#f0f0f0" stroke-width="1" stroke-dasharray="3,3"/>
<line x1="665.5" y1="279" x2="665.5" y2="370" stroke="#f0f0f0" stroke-width="1" stroke-dasharray="3,3"/>
<line x1="697.5" y1="279" x2="697.5" y2="370" stroke="#f0f0f0" stroke-width="1" stroke-dasharray="3,3"/>
<line x1="729.5" y1="279" x2="729.5" y2="370" stroke="#f0f0f0" stroke-width="1" stroke-dasharray="3,3"/>
<line x1="761.5" y1="279" x2="761.5" y2="370" stroke="#f0f0f0" stroke-width="1" stroke-dasharray="3,3"/>
<line x1="793.5" y1="279" x2="793.5" y2="370" stroke="#f0f0f0" stroke-width="1" stroke-dasharray="3,3"/>
<line x1="825.5" y1="279" x2="825.5" y2="370" stroke="#f0f0f0" stroke-width="1" stroke-dasharray="3,3"/>
<line x1="857.5" y1="279" x2="857.5" y2="370" stroke="#f0f0f0" stroke-width="1" stroke-dasharray="3,3"/>
<line x1="889.5" y1="279" x2="889.5" y2="370" stroke="#f0f0f0" stroke-width="1" stroke-dasharray="3,3"/>
<line x1="921.5" y1="279" x2="921.5" y2="370" stroke="#f0f0f0" stroke-width="1" stroke-dasharray="3,3"/>
<line x1="953.5" y1="279" x2="953.5" y2="370" stroke="#f0f0f0" stroke-width="1" stroke-dasharray="3,3"/>
<line x1="985.5" y1="279" x2="985.5" y2="370" stroke="#f0f0f0" stroke-width="1" stroke-dasharray="3,3"/>
<line x1="1017.5" y1="279" x2="1017.5" y2="370" stroke="#f0f0f0" stroke-width="1" stroke-dasharray="3,3"/>
<line x1="345.5" y1="373" x2="345.5" y2="469" stroke="#f0f0f0" stroke-width="1" stroke-dasharray="3,3"/>
<line x1="377.5" y1="373" x2="377.5" y2="469" stroke="#f0f0f0" stroke-width="1" stroke-dasharray="3,3"/>
<line x1="409.5" y1="373" x2="409.5" y2="469" stroke="#f0f0f0" stroke-width="1" stroke-dasharray="3,3"/>
<line x1="441.5" y1="373" x2="441.5" y2="469" stroke="#f0f0f0" stroke-width="1" stroke-dasharray="3,3"/>
<line x1="473.5" y1="373" x2="473.5" y2="469" stroke="#f0f0f0" stroke-width="1" stroke-dasharray="3,3"/>
<line x1="505.5" y1="373" x2="505.5" y2="469" stroke="#f0f0f0" stroke-width="1" stroke-dasharray="3,3"/>
<line x1="537.5" y1="373" x2="537.5" y2="469" stroke="#f0f0f0" stroke-width="1" stroke-dasharray="3,3"/>
<line x1="569.5" y1="373" x2="569.5" y2="469" stroke="#f0f0f0" stroke-width="1" stroke-dasharray="3,3"/>
<line x1="601.5" y1="373" x2="601.5" y2="469" stroke="#f0f0f0" stroke-width="1" stroke-dasharray="3,3"/>
<line x1="633.5" y1="373" x2="633.5" y2="469" stroke="#f0f0f0" stroke-width="1" stroke-dasharray="3,3"/>
<line x1="665.5" y1="373" x2="665.5" y2="469" stroke="#f0f0f0" stroke-width="1" stroke-dasharray="3,3"/>
<line x1="697.5" y1="373" x2="697.5" y2="469" stroke="#f0f0f0" stroke-width="1" stroke-dasharray="3,3"/>
<line x1="729.5" y1="373" x2="729.5" y2="469" stroke="#f0f0f0" stroke-width="1" stroke-dasharray="3,3"/>
<line x1="761.5" y1="373" x2="761.5" y2="469" stroke="#f0f0f0" stroke-width="1" stroke-dasharray="3,3"/>
<line x1="793.5" y1="373" x2="793.5" y2="469" stroke="#f0f0f0" stroke-width="1" stroke-dasharray="3,3"/>
<line x1="825.5" y1="373" x2="825.5" y2="469" stroke="#f0f0f0" stroke-width="1" stroke-dasharray="3,3"/>
<line x1="857.5" y1="373" x2="857.5" y2="469" stroke="#f0f0f0" stroke-width="1" stroke-dasharray="3,3"/>
<line x1="889.5" y1="373" x2="889.5" y2="469" stroke="#f0f0f0" stroke-width="1" stroke-dasharray="3,3"/>
<line x1="921.5" y1="373" x2="921.5" y2="469" stroke="#f0f0f0" stroke-width="1" stroke-dasharray="3,3"/>
<line x1="953.5" y1="373" x2="953.5" y2="469" stroke="#f0f0f0" stroke-width="1" stroke-dasharray="3,3"/>
<line x1="985.5" y1="373" x2="985.5" y2="469" stroke="#f0f0f0" stroke-width="1" stroke-dasharray="3,3"/>
<line x1="1017.5" y1="373" x2="1017.5" y2="469" stroke="#f0f0f0" stroke-width="1" stroke-dasharray="3,3"/>
<line x1="314" y1="116.5" x2="1047" y2="116.5" stroke="#f0f0f0" stroke-width="1" stroke-dasharray="3,3"/>
<line x1="314" y1="148.5" x2="1047" y2="148.5" stroke="#f0f0f0" stroke-width="1" stroke-dasharray="3,3"/>
<line x1="314" y1="180.5" x2="1047" y2="180.5" stroke="#f0f0f0" stroke-width="1" stroke-dasharray="3,3"/>
<line x1="314" y1="212.5" x2="1047" y2="212.5" stroke="#f0f0f0" stroke-width="1" stroke-dasharray="3,3"/>
<line x1="314" y1="244.5" x2="1047" y2="244.5" stroke="#f0f0f0" stroke-width="1" stroke-dasharray="3,3"/>
<line x1="314" y1="334.5" x2="1047" y2="334.5" stroke="#e0e0e0" stroke-width="1" stroke-dasharray="3,3"/>
<line x1="314" y1="391.5" x2="1047" y2="391.5" stroke="#c4c4c4" stroke-width="1" stroke-dasharray="3,3"/>
<line x1="314" y1="450.5" x2="1047" y2="450.5" stroke="#c4c4c4" stroke-width="1" stroke-dasharray="3,3"/>
<rect x="318.5" y="93.5" width="15" height="11" fill="#fde2dc" stroke="#c83c3c" stroke-width="1"/>
<rect x="326" y="93.5" width="7.5" height="11" fill="#bfe6fb" stroke="#2c6fa6" stroke-width="1"/>
<line x1="320.5" y1="96" x2="325" y2="96" stroke="#d84a3a" stroke-width="1.2"/>
<line x1="327.5" y1="96" x2="332" y2="96" stroke="#1f6fb0" stroke-width="1.2"/>
<line x1="320.5" y1="99" x2="325" y2="99" stroke="#d84a3a" stroke-width="1.2"/>
<line x1="327.5" y1="99" x2="332" y2="99" stroke="#1f6fb0" stroke-width="1.2"/>
<line x1="320.5" y1="102" x2="325" y2="102" stroke="#d84a3a" stroke-width="1.2"/>
<line x1="327.5" y1="102" x2="332" y2="102" stroke="#1f6fb0" stroke-width="1.2"/>
<text x="339" y="101.6" font-size="9.5" fill="#000000" textLength="212.5" lengthAdjust="spacingAndGlyphs" stroke="#000000" stroke-width="0.28">GBPUSD, Daily:  Great Britain Pound vs US Dollar</text>
<line x1="314" y1="217.5" x2="1047" y2="217.5" stroke="#26a69a" stroke-width="1"/>
<g clip-path="url(#cmd)"><rect x="314" y="185.0" width="1" height="12.0" fill="#26a69a"/><rect x="312" y="188.0" width="5" height="7.6" fill="#26a69a"/><rect x="321" y="172.0" width="1" height="21.7" fill="#26a69a"/><rect x="319" y="184.0" width="5" height="4.0" fill="#26a69a"/><rect x="329" y="166.0" width="1" height="45.0" fill="#ef5350"/><rect x="327" y="184.0" width="5" height="7.8" fill="#ef5350"/><rect x="337" y="153.4" width="1" height="41.2" fill="#26a69a"/><rect x="335" y="178.3" width="5" height="13.5" fill="#26a69a"/><rect x="345" y="167.8" width="1" height="27.8" fill="#ef5350"/><rect x="343" y="178.9" width="5" height="5.8" fill="#ef5350"/><rect x="353" y="161.0" width="1" height="37.5" fill="#ef5350"/><rect x="351" y="184.0" width="5" height="2.6" fill="#ef5350"/><rect x="361" y="187.0" width="1" height="6.7" fill="#26a69a"/><rect x="359" y="188.9" width="5" height="3.8" fill="#26a69a"/><rect x="369" y="179.3" width="1" height="25.5" fill="#26a69a"/><rect x="367" y="182.2" width="5" height="6.3" fill="#26a69a"/><rect x="378" y="178.3" width="1" height="36.5" fill="#ef5350"/><rect x="376" y="182.2" width="5" height="8.6" fill="#ef5350"/><rect x="385" y="163.9" width="1" height="42.8" fill="#ef5350"/><rect x="383" y="189.8" width="5" height="6.8" fill="#ef5350"/><rect x="393" y="162.0" width="1" height="59.5" fill="#26a69a"/><rect x="391" y="166.2" width="5" height="30.4" fill="#26a69a"/><rect x="401" y="154.3" width="1" height="72.4" fill="#ef5350"/><rect x="399" y="166.2" width="5" height="51.5" fill="#ef5350"/><rect x="409" y="217.7" width="1" height="10.2" fill="#ef5350"/><rect x="407" y="220.2" width="5" height="3.6" fill="#ef5350"/><rect x="417" y="219.6" width="1" height="50.9" fill="#ef5350"/><rect x="415" y="223.0" width="5" height="40.8" fill="#ef5350"/><rect x="425" y="230.0" width="1" height="33.8" fill="#26a69a"/><rect x="423" y="231.1" width="5" height="32.7" fill="#26a69a"/><rect x="433" y="214.4" width="1" height="20.0" fill="#26a69a"/><rect x="431" y="220.2" width="5" height="11.8" fill="#26a69a"/><rect x="441" y="215.8" width="1" height="29.7" fill="#ef5350"/><rect x="439" y="220.2" width="5" height="4.2" fill="#ef5350"/><rect x="449" y="212.9" width="1" height="20.7" fill="#26a69a"/><rect x="447" y="219.0" width="5" height="4.8" fill="#26a69a"/><rect x="457" y="216.3" width="1" height="10.4" fill="#26a69a"/><rect x="455" y="217.1" width="5" height="6.7" fill="#26a69a"/><rect x="465" y="208.0" width="1" height="22.7" fill="#ef5350"/><rect x="463" y="216.3" width="5" height="5.6" fill="#ef5350"/><rect x="473" y="189.8" width="1" height="55.7" fill="#ef5350"/><rect x="471" y="220.2" width="5" height="17.3" fill="#ef5350"/><rect x="481" y="227.3" width="1" height="35.5" fill="#ef5350"/><rect x="479" y="237.5" width="5" height="11.3" fill="#ef5350"/><rect x="489" y="230.2" width="1" height="29.8" fill="#26a69a"/><rect x="487" y="233.0" width="5" height="14.8" fill="#26a69a"/><rect x="497" y="221.1" width="1" height="34.4" fill="#26a69a"/><rect x="495" y="232.0" width="5" height="1.6" fill="#26a69a"/><rect x="505" y="227.9" width="1" height="8.4" fill="#26a69a"/><rect x="503" y="228.6" width="5" height="6.4" fill="#26a69a"/><rect x="513" y="219.2" width="1" height="21.5" fill="#ef5350"/><rect x="511" y="227.9" width="5" height="10.9" fill="#ef5350"/><rect x="521" y="201.0" width="1" height="42.0" fill="#26a69a"/><rect x="519" y="221.1" width="5" height="17.7" fill="#26a69a"/><rect x="529" y="214.8" width="1" height="16.9" fill="#26a69a"/><rect x="527" y="214.8" width="5" height="7.1" fill="#26a69a"/><rect x="537" y="183.1" width="1" height="44.8" fill="#26a69a"/><rect x="535" y="204.8" width="5" height="11.3" fill="#26a69a"/><rect x="545" y="186.0" width="1" height="25.8" fill="#26a69a"/><rect x="543" y="200.3" width="5" height="5.7" fill="#26a69a"/><rect x="553" y="199.0" width="1" height="7.0" fill="#26a69a"/><rect x="551" y="200.0" width="5" height="5.0" fill="#26a69a"/><rect x="561" y="186.9" width="1" height="20.5" fill="#26a69a"/><rect x="559" y="193.6" width="5" height="8.3" fill="#26a69a"/><rect x="569" y="188.8" width="1" height="17.3" fill="#ef5350"/><rect x="567" y="193.6" width="5" height="2.9" fill="#ef5350"/><rect x="577" y="194.2" width="1" height="29.7" fill="#ef5350"/><rect x="575" y="195.5" width="5" height="10.2" fill="#ef5350"/><rect x="585" y="194.6" width="1" height="33.2" fill="#ef5350"/><rect x="583" y="204.7" width="5" height="17.3" fill="#ef5350"/><rect x="593" y="204.2" width="1" height="29.3" fill="#26a69a"/><rect x="591" y="208.0" width="5" height="13.0" fill="#26a69a"/><rect x="601" y="204.7" width="1" height="11.3" fill="#26a69a"/><rect x="599" y="205.1" width="5" height="6.7" fill="#26a69a"/><rect x="609" y="184.0" width="1" height="23.4" fill="#26a69a"/><rect x="607" y="191.7" width="5" height="14.4" fill="#26a69a"/><rect x="617" y="171.0" width="1" height="29.9" fill="#26a69a"/><rect x="615" y="184.6" width="5" height="8.4" fill="#26a69a"/><rect x="625" y="158.7" width="1" height="33.9" fill="#26a69a"/><rect x="623" y="171.9" width="5" height="14.0" fill="#26a69a"/><rect x="633" y="136.0" width="1" height="41.9" fill="#26a69a"/><rect x="631" y="136.0" width="5" height="35.5" fill="#26a69a"/><rect x="641" y="99.0" width="1" height="42.8" fill="#26a69a"/><rect x="639" y="115.0" width="5" height="21.6" fill="#26a69a"/><rect x="649" y="115.0" width="1" height="6.7" fill="#ef5350"/><rect x="647" y="115.9" width="5" height="1.3" fill="#ef5350"/><rect x="657" y="113.0" width="1" height="31.7" fill="#ef5350"/><rect x="655" y="115.9" width="5" height="17.8" fill="#ef5350"/><rect x="665" y="130.9" width="1" height="35.8" fill="#ef5350"/><rect x="663" y="133.7" width="5" height="11.0" fill="#ef5350"/><rect x="673" y="136.0" width="1" height="17.7" fill="#26a69a"/><rect x="671" y="140.8" width="5" height="3.9" fill="#26a69a"/><rect x="681" y="130.9" width="1" height="42.6" fill="#ef5350"/><rect x="679" y="140.8" width="5" height="25.9" fill="#ef5350"/><rect x="689" y="161.0" width="1" height="15.7" fill="#ef5350"/><rect x="687" y="166.7" width="5" height="4.8" fill="#ef5350"/><rect x="697" y="170.2" width="1" height="8.6" fill="#26a69a"/><rect x="695" y="172.9" width="5" height="3.4" fill="#26a69a"/><rect x="705" y="165.8" width="1" height="14.0" fill="#ef5350"/><rect x="703" y="172.9" width="5" height="2.5" fill="#ef5350"/><rect x="713" y="172.1" width="1" height="30.7" fill="#ef5350"/><rect x="711" y="174.8" width="5" height="5.0" fill="#ef5350"/><rect x="721" y="142.8" width="1" height="51.8" fill="#26a69a"/><rect x="719" y="142.8" width="5" height="37.0" fill="#26a69a"/><rect x="729" y="139.9" width="1" height="71.0" fill="#ef5350"/><rect x="727" y="142.8" width="5" height="62.9" fill="#ef5350"/><rect x="737" y="198.0" width="1" height="46.5" fill="#ef5350"/><rect x="735" y="204.7" width="5" height="28.3" fill="#ef5350"/><rect x="745" y="232.0" width="1" height="7.7" fill="#26a69a"/><rect x="743" y="233.5" width="5" height="5.2" fill="#26a69a"/><rect x="753" y="208.6" width="1" height="28.2" fill="#26a69a"/><rect x="751" y="215.7" width="5" height="19.2" fill="#26a69a"/><rect x="761" y="201.9" width="1" height="22.0" fill="#ef5350"/><rect x="759" y="215.7" width="5" height="5.3" fill="#ef5350"/><rect x="769" y="213.8" width="1" height="17.2" fill="#ef5350"/><rect x="767" y="220.0" width="5" height="5.7" fill="#ef5350"/><rect x="777" y="208.0" width="1" height="31.7" fill="#26a69a"/><rect x="775" y="222.0" width="5" height="3.7" fill="#26a69a"/><rect x="785" y="215.7" width="1" height="14.0" fill="#26a69a"/><rect x="783" y="216.6" width="5" height="7.1" fill="#26a69a"/></g>
<g clip-path="url(#cad)"><rect x="514" y="334.0" width="1" height="28.6" fill="#a8a8a8"/><rect x="521" y="334.0" width="1" height="26.0" fill="#a8a8a8"/><rect x="529" y="334.0" width="1" height="22.0" fill="#a8a8a8"/><rect x="537" y="334.0" width="1" height="16.0" fill="#a8a8a8"/><rect x="546" y="334.0" width="1" height="11.5" fill="#a8a8a8"/><rect x="554" y="334.0" width="1" height="7.0" fill="#a8a8a8"/><rect x="562" y="334.0" width="1" height="3.0" fill="#a8a8a8"/><rect x="569" y="333.5" width="1" height="0.5" fill="#a8a8a8"/><rect x="577" y="333.0" width="1" height="1.0" fill="#a8a8a8"/><rect x="585" y="333.5" width="1" height="0.5" fill="#a8a8a8"/><rect x="594" y="333.5" width="1" height="0.5" fill="#a8a8a8"/><rect x="602" y="331.7" width="1" height="2.3" fill="#a8a8a8"/><rect x="609" y="329.8" width="1" height="4.2" fill="#a8a8a8"/><rect x="617" y="325.8" width="1" height="8.2" fill="#a8a8a8"/><rect x="625" y="321.0" width="1" height="13.0" fill="#a8a8a8"/><rect x="634" y="309.9" width="1" height="24.1" fill="#a8a8a8"/><rect x="641" y="298.0" width="1" height="36.0" fill="#a8a8a8"/><rect x="649" y="289.0" width="1" height="45.0" fill="#a8a8a8"/><rect x="657" y="286.0" width="1" height="48.0" fill="#a8a8a8"/><rect x="666" y="286.0" width="1" height="48.0" fill="#a8a8a8"/><rect x="673" y="286.0" width="1" height="48.0" fill="#a8a8a8"/><rect x="682" y="291.8" width="1" height="42.2" fill="#a8a8a8"/><rect x="689" y="297.3" width="1" height="36.7" fill="#a8a8a8"/><rect x="697" y="302.0" width="1" height="32.0" fill="#a8a8a8"/><rect x="705" y="306.8" width="1" height="27.2" fill="#a8a8a8"/><rect x="713" y="312.3" width="1" height="21.7" fill="#a8a8a8"/><rect x="721" y="309.2" width="1" height="24.8" fill="#a8a8a8"/><rect x="729" y="318.7" width="1" height="15.3" fill="#a8a8a8"/><rect x="738" y="332.2" width="1" height="1.8" fill="#a8a8a8"/><rect x="746" y="334.0" width="1" height="10.0" fill="#a8a8a8"/><rect x="754" y="334.0" width="1" height="14.8" fill="#a8a8a8"/><rect x="762" y="334.0" width="1" height="19.1" fill="#a8a8a8"/><rect x="770" y="334.0" width="1" height="22.7" fill="#a8a8a8"/><rect x="778" y="334.0" width="1" height="25.7" fill="#a8a8a8"/><rect x="786" y="334.0" width="1" height="25.7" fill="#a8a8a8"/><polyline points="577.3,346.4 608.6,334.0 632.3,327.0 656.0,314.0 672.7,304.4 689.3,295.6 700.0,293.7 709.0,294.5 728.0,300.9 747.0,314.0 761.0,323.4 770.7,332.2 785.0,341.2" fill="none" stroke="#c0392b" stroke-width="1" stroke-dasharray="4,3" stroke-linejoin="round"/></g>
<g clip-path="url(#csd)"><polyline points="385.5,431.4 393.3,419.6 400.9,429.0 409.2,438.0 417.5,461.1 427.0,451.6 441.2,431.4 448.4,427.9 456.7,426.7 466.2,418.4 473.3,418.4 481.6,426.7 489.9,436.2 497.0,436.2 505.3,427.9 513.6,430.2 520.8,425.5 529.0,419.6 537.4,405.8 545.7,399.4 554.0,395.8 561.1,394.6 569.4,394.6 576.6,397.0 584.9,412.4 593.2,424.3 601.5,427.9 609.8,408.9 618.1,399.4 625.2,392.3 633.5,383.5 641.8,381.1 650.2,381.1 658.5,389.9 672.7,407.7 684.6,424.3 691.7,438.5 700.0,457.5 705.4,463.5 713.7,457.6 722.0,432.6 729.2,433.3 737.5,441.0 745.8,460.0 754.1,454.0 761.2,450.4 769.5,446.9 777.8,449.7 785.0,448.0" fill="none" stroke="#2bb0a8" stroke-width="1" stroke-linejoin="round"/><polyline points="400.9,426.7 409.2,431.4 418.7,445.7 428.2,452.8 435.3,451.6 449.6,436.2 466.2,424.3 480.4,420.7 497.0,431.4 506.5,433.8 525.5,426.7 537.4,417.2 551.6,401.8 568.3,395.3 575.4,395.8 587.2,410.0 601.5,424.3 615.7,412.4 632.3,391.0 649.0,382.8 663.2,387.5 679.8,405.3 694.0,426.7 704.2,450.4 713.7,458.7 735.1,436.2 754.1,452.8 763.6,454.0 773.0,449.2 785.0,447.6" fill="none" stroke="#d63a3a" stroke-width="1" stroke-dasharray="4,3" stroke-linejoin="round"/></g>
<text x="316" y="290.5" font-size="9.5" fill="#000000" textLength="154" lengthAdjust="spacingAndGlyphs" stroke="#000000" stroke-width="0.28">MACD(12,26,9) -0.002254 -0.000613</text>
<text x="316" y="384.5" font-size="9.5" fill="#000000" textLength="102" lengthAdjust="spacingAndGlyphs" stroke="#000000" stroke-width="0.28">Stoch(8,3,3) 21.46 21.62</text>
<rect x="313.5" y="87.5" width="734" height="189" fill="none" stroke="#000000" stroke-width="1"/>
<rect x="313.5" y="278.5" width="734" height="92" fill="none" stroke="#000000" stroke-width="1"/>
<rect x="313.5" y="372.5" width="734" height="97" fill="none" stroke="#000000" stroke-width="1"/>
<line x1="1048" y1="116.5" x2="1052" y2="116.5" stroke="#000000" stroke-width="1"/>
<text x="1053" y="120" font-size="9.5" fill="#000000" textLength="32.6" lengthAdjust="spacingAndGlyphs" stroke="#000000" stroke-width="0.28">1.28565</text>
<line x1="1048" y1="148.5" x2="1052" y2="148.5" stroke="#000000" stroke-width="1"/>
<text x="1053" y="152" font-size="9.5" fill="#000000" textLength="32.6" lengthAdjust="spacingAndGlyphs" stroke="#000000" stroke-width="0.28">1.27860</text>
<line x1="1048" y1="180.5" x2="1052" y2="180.5" stroke="#000000" stroke-width="1"/>
<text x="1053" y="184" font-size="9.5" fill="#000000" textLength="32.6" lengthAdjust="spacingAndGlyphs" stroke="#000000" stroke-width="0.28">1.27155</text>
<line x1="1048" y1="212.5" x2="1052" y2="212.5" stroke="#000000" stroke-width="1"/>
<text x="1053" y="216" font-size="9.5" fill="#000000" textLength="32.6" lengthAdjust="spacingAndGlyphs" stroke="#000000" stroke-width="0.28">1.26450</text>
<line x1="1048" y1="244.5" x2="1052" y2="244.5" stroke="#000000" stroke-width="1"/>
<text x="1053" y="248" font-size="9.5" fill="#000000" textLength="32.6" lengthAdjust="spacingAndGlyphs" stroke="#000000" stroke-width="0.28">1.25745</text>
<rect x="1050" y="211.5" width="39" height="11" fill="#26a69a"/>
<text x="1053" y="221" font-size="9.5" fill="#ffffff" textLength="32.1" lengthAdjust="spacingAndGlyphs" stroke="#ffffff" stroke-width="0.28">1.26329</text>
<line x1="1048" y1="279.5" x2="1052" y2="279.5" stroke="#000000" stroke-width="1"/>
<text x="1053" y="287" font-size="9.5" fill="#000000" textLength="37.6" lengthAdjust="spacingAndGlyphs" stroke="#000000" stroke-width="0.28">0.005349</text>
<line x1="1048" y1="334.5" x2="1052" y2="334.5" stroke="#000000" stroke-width="1"/>
<text x="1053" y="338" font-size="9.5" fill="#000000" textLength="37.6" lengthAdjust="spacingAndGlyphs" stroke="#000000" stroke-width="0.28">0.000000</text>
<line x1="1048" y1="369.5" x2="1052" y2="369.5" stroke="#000000" stroke-width="1"/>
<text x="1053" y="368" font-size="9.5" fill="#000000" textLength="40.6" lengthAdjust="spacingAndGlyphs" stroke="#000000" stroke-width="0.28">-0.003238</text>
<line x1="1048" y1="373.5" x2="1052" y2="373.5" stroke="#000000" stroke-width="1"/>
<text x="1053" y="381" font-size="9.5" fill="#000000" textLength="27.6" lengthAdjust="spacingAndGlyphs" stroke="#000000" stroke-width="0.28">100.00</text>
<line x1="1048" y1="391.5" x2="1052" y2="391.5" stroke="#000000" stroke-width="1"/>
<text x="1053" y="395" font-size="9.5" fill="#000000" textLength="22.6" lengthAdjust="spacingAndGlyphs" stroke="#000000" stroke-width="0.28">80.00</text>
<line x1="1048" y1="450.5" x2="1052" y2="450.5" stroke="#000000" stroke-width="1"/>
<text x="1053" y="454" font-size="9.5" fill="#000000" textLength="22.6" lengthAdjust="spacingAndGlyphs" stroke="#000000" stroke-width="0.28">20.00</text>
<line x1="1048" y1="468.5" x2="1052" y2="468.5" stroke="#000000" stroke-width="1"/>
<text x="1053" y="467" font-size="9.5" fill="#000000" textLength="17.6" lengthAdjust="spacingAndGlyphs" stroke="#000000" stroke-width="0.28">0.00</text>
<line x1="313.5" y1="469" x2="313.5" y2="474" stroke="#000000" stroke-width="1"/>
<text x="313" y="482" font-size="9.5" fill="#000000" textLength="50.2" lengthAdjust="spacingAndGlyphs" stroke="#000000" stroke-width="0.28">21 Jan 2024</text>
<line x1="377.5" y1="469" x2="377.5" y2="474" stroke="#000000" stroke-width="1"/>
<text x="377" y="482" font-size="9.5" fill="#000000" textLength="50.2" lengthAdjust="spacingAndGlyphs" stroke="#000000" stroke-width="0.28">30 Jan 2024</text>
<line x1="441.5" y1="469" x2="441.5" y2="474" stroke="#000000" stroke-width="1"/>
<text x="441" y="482" font-size="9.5" fill="#000000" textLength="46.1" lengthAdjust="spacingAndGlyphs" stroke="#000000" stroke-width="0.28">8 Feb 2024</text>
<line x1="505.5" y1="469" x2="505.5" y2="474" stroke="#000000" stroke-width="1"/>
<text x="505" y="482" font-size="9.5" fill="#000000" textLength="51.2" lengthAdjust="spacingAndGlyphs" stroke="#000000" stroke-width="0.28">18 Feb 2024</text>
<line x1="569.5" y1="469" x2="569.5" y2="474" stroke="#000000" stroke-width="1"/>
<text x="569" y="482" font-size="9.5" fill="#000000" textLength="51.2" lengthAdjust="spacingAndGlyphs" stroke="#000000" stroke-width="0.28">27 Feb 2024</text>
<line x1="633.5" y1="469" x2="633.5" y2="474" stroke="#000000" stroke-width="1"/>
<text x="633" y="482" font-size="9.5" fill="#000000" textLength="46.1" lengthAdjust="spacingAndGlyphs" stroke="#000000" stroke-width="0.28">7 Mar 2024</text>
<line x1="697.5" y1="469" x2="697.5" y2="474" stroke="#000000" stroke-width="1"/>
<text x="697" y="482" font-size="9.5" fill="#000000" textLength="51.2" lengthAdjust="spacingAndGlyphs" stroke="#000000" stroke-width="0.28">17 Mar 2024</text>
<line x1="761.5" y1="469" x2="761.5" y2="474" stroke="#000000" stroke-width="1"/>
<text x="761" y="482" font-size="9.5" fill="#000000" textLength="51.2" lengthAdjust="spacingAndGlyphs" stroke="#000000" stroke-width="0.28">26 Mar 2024</text>
<rect x="1109" y="54" width="803" height="443" fill="#f0f0f0"/>
<path d="M1122.5,63 L1122.5,74.5 M1128.5,61 L1128.5,75.5" stroke="#1ca31c" stroke-width="1.3"/>
<rect x="1120.7" y="65.5" width="3.6" height="6" fill="#b5f5b5" stroke="#1ca31c" stroke-width="1.4"/>
<rect x="1126.7" y="64.5" width="3.6" height="8" fill="#b5f5b5" stroke="#1ca31c" stroke-width="1.4"/>
<text x="1137.7" y="72.7" font-size="12" fill="#6e6e6e" textLength="56" lengthAdjust="spacingAndGlyphs">GBPUSD,H4</text>
<line x1="1811" y1="74.5" x2="1820" y2="74.5" stroke="#9a9a9a" stroke-width="1.3"/>
<rect x="1847.5" y="66.5" width="8" height="8" fill="none" stroke="#9a9a9a" stroke-width="1.2"/>
<path d="M1883,66 L1892,75 M1892,66 L1883,75" stroke="#9a9a9a" stroke-width="1.1"/>
<rect x="1114" y="83" width="791" height="1" fill="#a0a0a0"/>
<rect x="1114" y="83" width="1" height="407" fill="#a0a0a0"/>
<rect x="1115" y="84" width="790" height="1" fill="#696969"/>
<rect x="1115" y="84" width="1" height="406" fill="#696969"/>
<rect x="1114" y="490" width="792" height="1" fill="#e3e3e3"/>
<rect x="1905" y="83" width="1" height="408" fill="#e3e3e3"/>
<rect x="1116" y="85" width="789" height="405" fill="#000000"/>
<defs><clipPath id="cmh4"><rect x="1118.5" y="87.5" width="733" height="188"/></clipPath><clipPath id="cah4"><rect x="1118.5" y="278.5" width="733" height="91"/></clipPath><clipPath id="csh4"><rect x="1118.5" y="372.5" width="733" height="96"/></clipPath></defs>
<line x1="1150.5" y1="88" x2="1150.5" y2="276" stroke="#9a9a9a" stroke-width="1" stroke-dasharray="3,3"/>
<line x1="1182.5" y1="88" x2="1182.5" y2="276" stroke="#9a9a9a" stroke-width="1" stroke-dasharray="3,3"/>
<line x1="1214.5" y1="88" x2="1214.5" y2="276" stroke="#9a9a9a" stroke-width="1" stroke-dasharray="3,3"/>
<line x1="1246.5" y1="88" x2="1246.5" y2="276" stroke="#9a9a9a" stroke-width="1" stroke-dasharray="3,3"/>
<line x1="1278.5" y1="88" x2="1278.5" y2="276" stroke="#9a9a9a" stroke-width="1" stroke-dasharray="3,3"/>
<line x1="1310.5" y1="88" x2="1310.5" y2="276" stroke="#9a9a9a" stroke-width="1" stroke-dasharray="3,3"/>
<line x1="1342.5" y1="88" x2="1342.5" y2="276" stroke="#9a9a9a" stroke-width="1" stroke-dasharray="3,3"/>
<line x1="1374.5" y1="88" x2="1374.5" y2="276" stroke="#9a9a9a" stroke-width="1" stroke-dasharray="3,3"/>
<line x1="1406.5" y1="88" x2="1406.5" y2="276" stroke="#9a9a9a" stroke-width="1" stroke-dasharray="3,3"/>
<line x1="1438.5" y1="88" x2="1438.5" y2="276" stroke="#9a9a9a" stroke-width="1" stroke-dasharray="3,3"/>
<line x1="1470.5" y1="88" x2="1470.5" y2="276" stroke="#9a9a9a" stroke-width="1" stroke-dasharray="3,3"/>
<line x1="1502.5" y1="88" x2="1502.5" y2="276" stroke="#9a9a9a" stroke-width="1" stroke-dasharray="3,3"/>
<line x1="1534.5" y1="88" x2="1534.5" y2="276" stroke="#9a9a9a" stroke-width="1" stroke-dasharray="3,3"/>
<line x1="1566.5" y1="88" x2="1566.5" y2="276" stroke="#9a9a9a" stroke-width="1" stroke-dasharray="3,3"/>
<line x1="1598.5" y1="88" x2="1598.5" y2="276" stroke="#9a9a9a" stroke-width="1" stroke-dasharray="3,3"/>
<line x1="1630.5" y1="88" x2="1630.5" y2="276" stroke="#9a9a9a" stroke-width="1" stroke-dasharray="3,3"/>
<line x1="1662.5" y1="88" x2="1662.5" y2="276" stroke="#9a9a9a" stroke-width="1" stroke-dasharray="3,3"/>
<line x1="1694.5" y1="88" x2="1694.5" y2="276" stroke="#9a9a9a" stroke-width="1" stroke-dasharray="3,3"/>
<line x1="1726.5" y1="88" x2="1726.5" y2="276" stroke="#9a9a9a" stroke-width="1" stroke-dasharray="3,3"/>
<line x1="1758.5" y1="88" x2="1758.5" y2="276" stroke="#9a9a9a" stroke-width="1" stroke-dasharray="3,3"/>
<line x1="1790.5" y1="88" x2="1790.5" y2="276" stroke="#9a9a9a" stroke-width="1" stroke-dasharray="3,3"/>
<line x1="1822.5" y1="88" x2="1822.5" y2="276" stroke="#9a9a9a" stroke-width="1" stroke-dasharray="3,3"/>
<line x1="1150.5" y1="279" x2="1150.5" y2="370" stroke="#9a9a9a" stroke-width="1" stroke-dasharray="3,3"/>
<line x1="1182.5" y1="279" x2="1182.5" y2="370" stroke="#9a9a9a" stroke-width="1" stroke-dasharray="3,3"/>
<line x1="1214.5" y1="279" x2="1214.5" y2="370" stroke="#9a9a9a" stroke-width="1" stroke-dasharray="3,3"/>
<line x1="1246.5" y1="279" x2="1246.5" y2="370" stroke="#9a9a9a" stroke-width="1" stroke-dasharray="3,3"/>
<line x1="1278.5" y1="279" x2="1278.5" y2="370" stroke="#9a9a9a" stroke-width="1" stroke-dasharray="3,3"/>
<line x1="1310.5" y1="279" x2="1310.5" y2="370" stroke="#9a9a9a" stroke-width="1" stroke-dasharray="3,3"/>
<line x1="1342.5" y1="279" x2="1342.5" y2="370" stroke="#9a9a9a" stroke-width="1" stroke-dasharray="3,3"/>
<line x1="1374.5" y1="279" x2="1374.5" y2="370" stroke="#9a9a9a" stroke-width="1" stroke-dasharray="3,3"/>
<line x1="1406.5" y1="279" x2="1406.5" y2="370" stroke="#9a9a9a" stroke-width="1" stroke-dasharray="3,3"/>
<line x1="1438.5" y1="279" x2="1438.5" y2="370" stroke="#9a9a9a" stroke-width="1" stroke-dasharray="3,3"/>
<line x1="1470.5" y1="279" x2="1470.5" y2="370" stroke="#9a9a9a" stroke-width="1" stroke-dasharray="3,3"/>
<line x1="1502.5" y1="279" x2="1502.5" y2="370" stroke="#9a9a9a" stroke-width="1" stroke-dasharray="3,3"/>
<line x1="1534.5" y1="279" x2="1534.5" y2="370" stroke="#9a9a9a" stroke-width="1" stroke-dasharray="3,3"/>
<line x1="1566.5" y1="279" x2="1566.5" y2="370" stroke="#9a9a9a" stroke-width="1" stroke-dasharray="3,3"/>
<line x1="1598.5" y1="279" x2="1598.5" y2="370" stroke="#9a9a9a" stroke-width="1" stroke-dasharray="3,3"/>
<line x1="1630.5" y1="279" x2="1630.5" y2="370" stroke="#9a9a9a" stroke-width="1" stroke-dasharray="3,3"/>
<line x1="1662.5" y1="279" x2="1662.5" y2="370" stroke="#9a9a9a" stroke-width="1" stroke-dasharray="3,3"/>
<line x1="1694.5" y1="279" x2="1694.5" y2="370" stroke="#9a9a9a" stroke-width="1" stroke-dasharray="3,3"/>
<line x1="1726.5" y1="279" x2="1726.5" y2="370" stroke="#9a9a9a" stroke-width="1" stroke-dasharray="3,3"/>
<line x1="1758.5" y1="279" x2="1758.5" y2="370" stroke="#9a9a9a" stroke-width="1" stroke-dasharray="3,3"/>
<line x1="1790.5" y1="279" x2="1790.5" y2="370" stroke="#9a9a9a" stroke-width="1" stroke-dasharray="3,3"/>
<line x1="1822.5" y1="279" x2="1822.5" y2="370" stroke="#9a9a9a" stroke-width="1" stroke-dasharray="3,3"/>
<line x1="1150.5" y1="373" x2="1150.5" y2="469" stroke="#9a9a9a" stroke-width="1" stroke-dasharray="3,3"/>
<line x1="1182.5" y1="373" x2="1182.5" y2="469" stroke="#9a9a9a" stroke-width="1" stroke-dasharray="3,3"/>
<line x1="1214.5" y1="373" x2="1214.5" y2="469" stroke="#9a9a9a" stroke-width="1" stroke-dasharray="3,3"/>
<line x1="1246.5" y1="373" x2="1246.5" y2="469" stroke="#9a9a9a" stroke-width="1" stroke-dasharray="3,3"/>
<line x1="1278.5" y1="373" x2="1278.5" y2="469" stroke="#9a9a9a" stroke-width="1" stroke-dasharray="3,3"/>
<line x1="1310.5" y1="373" x2="1310.5" y2="469" stroke="#9a9a9a" stroke-width="1" stroke-dasharray="3,3"/>
<line x1="1342.5" y1="373" x2="1342.5" y2="469" stroke="#9a9a9a" stroke-width="1" stroke-dasharray="3,3"/>
<line x1="1374.5" y1="373" x2="1374.5" y2="469" stroke="#9a9a9a" stroke-width="1" stroke-dasharray="3,3"/>
<line x1="1406.5" y1="373" x2="1406.5" y2="469" stroke="#9a9a9a" stroke-width="1" stroke-dasharray="3,3"/>
<line x1="1438.5" y1="373" x2="1438.5" y2="469" stroke="#9a9a9a" stroke-width="1" stroke-dasharray="3,3"/>
<line x1="1470.5" y1="373" x2="1470.5" y2="469" stroke="#9a9a9a" stroke-width="1" stroke-dasharray="3,3"/>
<line x1="1502.5" y1="373" x2="1502.5" y2="469" stroke="#9a9a9a" stroke-width="1" stroke-dasharray="3,3"/>
<line x1="1534.5" y1="373" x2="1534.5" y2="469" stroke="#9a9a9a" stroke-width="1" stroke-dasharray="3,3"/>
<line x1="1566.5" y1="373" x2="1566.5" y2="469" stroke="#9a9a9a" stroke-width="1" stroke-dasharray="3,3"/>
<line x1="1598.5" y1="373" x2="1598.5" y2="469" stroke="#9a9a9a" stroke-width="1" stroke-dasharray="3,3"/>
<line x1="1630.5" y1="373" x2="1630.5" y2="469" stroke="#9a9a9a" stroke-width="1" stroke-dasharray="3,3"/>
<line x1="1662.5" y1="373" x2="1662.5" y2="469" stroke="#9a9a9a" stroke-width="1" stroke-dasharray="3,3"/>
<line x1="1694.5" y1="373" x2="1694.5" y2="469" stroke="#9a9a9a" stroke-width="1" stroke-dasharray="3,3"/>
<line x1="1726.5" y1="373" x2="1726.5" y2="469" stroke="#9a9a9a" stroke-width="1" stroke-dasharray="3,3"/>
<line x1="1758.5" y1="373" x2="1758.5" y2="469" stroke="#9a9a9a" stroke-width="1" stroke-dasharray="3,3"/>
<line x1="1790.5" y1="373" x2="1790.5" y2="469" stroke="#9a9a9a" stroke-width="1" stroke-dasharray="3,3"/>
<line x1="1822.5" y1="373" x2="1822.5" y2="469" stroke="#9a9a9a" stroke-width="1" stroke-dasharray="3,3"/>
<line x1="1119" y1="116.5" x2="1852" y2="116.5" stroke="#9a9a9a" stroke-width="1" stroke-dasharray="3,3"/>
<line x1="1119" y1="148.5" x2="1852" y2="148.5" stroke="#9a9a9a" stroke-width="1" stroke-dasharray="3,3"/>
<line x1="1119" y1="180.5" x2="1852" y2="180.5" stroke="#9a9a9a" stroke-width="1" stroke-dasharray="3,3"/>
<line x1="1119" y1="212.5" x2="1852" y2="212.5" stroke="#9a9a9a" stroke-width="1" stroke-dasharray="3,3"/>
<line x1="1119" y1="244.5" x2="1852" y2="244.5" stroke="#9a9a9a" stroke-width="1" stroke-dasharray="3,3"/>
<line x1="1119" y1="326.5" x2="1852" y2="326.5" stroke="#9a9a9a" stroke-width="1" stroke-dasharray="3,3"/>
<line x1="1119" y1="391.5" x2="1852" y2="391.5" stroke="#9a9a9a" stroke-width="1" stroke-dasharray="3,3"/>
<line x1="1119" y1="450.5" x2="1852" y2="450.5" stroke="#9a9a9a" stroke-width="1" stroke-dasharray="3,3"/>
<rect x="1123.5" y="93.5" width="15" height="11" fill="#fde2dc" stroke="#c83c3c" stroke-width="1"/>
<rect x="1131" y="93.5" width="7.5" height="11" fill="#bfe6fb" stroke="#2c6fa6" stroke-width="1"/>
<line x1="1125.5" y1="96" x2="1130" y2="96" stroke="#d84a3a" stroke-width="1.2"/>
<line x1="1132.5" y1="96" x2="1137" y2="96" stroke="#1f6fb0" stroke-width="1.2"/>
<line x1="1125.5" y1="99" x2="1130" y2="99" stroke="#d84a3a" stroke-width="1.2"/>
<line x1="1132.5" y1="99" x2="1137" y2="99" stroke="#1f6fb0" stroke-width="1.2"/>
<line x1="1125.5" y1="102" x2="1130" y2="102" stroke="#d84a3a" stroke-width="1.2"/>
<line x1="1132.5" y1="102" x2="1137" y2="102" stroke="#1f6fb0" stroke-width="1.2"/>
<text x="1144" y="101.6" font-size="9.5" fill="#ffffff" textLength="203" lengthAdjust="spacingAndGlyphs" stroke="#ffffff" stroke-width="0.28">GBPUSD, H4:  Great Britain Pound vs US Dollar</text>
<line x1="1119" y1="239.5" x2="1852" y2="239.5" stroke="#a0a0a0" stroke-width="1"/>
<g clip-path="url(#cmh4)"><rect x="1119" y="207.9" width="1" height="5.5" fill="#4ee44e"/><rect x="1118" y="211.5" width="3" height="1.2" fill="#4ee44e"/><rect x="1123" y="204.4" width="1" height="9.9" fill="#4ee44e"/><rect x="1122.5" y="209.6" width="2" height="1.4" fill="#000" stroke="#4ee44e" stroke-width="1"/><rect x="1127" y="206.6" width="1" height="10.1" fill="#4ee44e"/><rect x="1126.5" y="209.0" width="2" height="3.7" fill="#a8f5a8" stroke="#4ee44e" stroke-width="1"/><rect x="1131" y="208.5" width="1" height="9.9" fill="#4ee44e"/><rect x="1130.5" y="210.2" width="2" height="3.3" fill="#000" stroke="#4ee44e" stroke-width="1"/><rect x="1135" y="204.1" width="1" height="7.0" fill="#4ee44e"/><rect x="1134" y="208.4" width="3" height="1.2" fill="#4ee44e"/><rect x="1139" y="207.2" width="1" height="4.7" fill="#4ee44e"/><rect x="1138.5" y="209.0" width="2" height="1.3" fill="#a8f5a8" stroke="#4ee44e" stroke-width="1"/><rect x="1143" y="207.1" width="1" height="8.3" fill="#4ee44e"/><rect x="1142.5" y="210.9" width="2" height="1.2" fill="#a8f5a8" stroke="#4ee44e" stroke-width="1"/><rect x="1147" y="208.9" width="1" height="10.0" fill="#4ee44e"/><rect x="1146.5" y="212.7" width="2" height="2.6" fill="#a8f5a8" stroke="#4ee44e" stroke-width="1"/><rect x="1151" y="215.1" width="1" height="5.0" fill="#4ee44e"/><rect x="1150" y="216.6" width="3" height="1.2" fill="#4ee44e"/><rect x="1155" y="213.1" width="1" height="14.9" fill="#4ee44e"/><rect x="1154.5" y="217.2" width="2" height="6.2" fill="#a8f5a8" stroke="#4ee44e" stroke-width="1"/><rect x="1159" y="220.9" width="1" height="8.5" fill="#4ee44e"/><rect x="1158.5" y="224.8" width="2" height="0.8" fill="#a8f5a8" stroke="#4ee44e" stroke-width="1"/><rect x="1163" y="222.3" width="1" height="9.0" fill="#4ee44e"/><rect x="1162.5" y="226.5" width="2" height="3.1" fill="#a8f5a8" stroke="#4ee44e" stroke-width="1"/><rect x="1167" y="227.2" width="1" height="11.7" fill="#4ee44e"/><rect x="1166" y="229.4" width="3" height="1.2" fill="#4ee44e"/><rect x="1171" y="220.2" width="1" height="12.6" fill="#4ee44e"/><rect x="1170.5" y="221.9" width="2" height="6.3" fill="#000" stroke="#4ee44e" stroke-width="1"/><rect x="1175" y="220.7" width="1" height="4.5" fill="#4ee44e"/><rect x="1174" y="222.0" width="3" height="1.2" fill="#4ee44e"/><rect x="1179" y="220.9" width="1" height="8.3" fill="#4ee44e"/><rect x="1178.5" y="223.5" width="2" height="2.5" fill="#a8f5a8" stroke="#4ee44e" stroke-width="1"/><rect x="1183" y="224.2" width="1" height="7.8" fill="#4ee44e"/><rect x="1182.5" y="226.4" width="2" height="3.2" fill="#a8f5a8" stroke="#4ee44e" stroke-width="1"/><rect x="1187" y="228.7" width="1" height="7.3" fill="#4ee44e"/><rect x="1186.5" y="230.2" width="2" height="2.6" fill="#a8f5a8" stroke="#4ee44e" stroke-width="1"/><rect x="1191" y="230.6" width="1" height="30.8" fill="#4ee44e"/><rect x="1190.5" y="234.1" width="2" height="14.9" fill="#a8f5a8" stroke="#4ee44e" stroke-width="1"/><rect x="1195" y="241.0" width="1" height="18.5" fill="#4ee44e"/><rect x="1194.5" y="245.7" width="2" height="3.9" fill="#000" stroke="#4ee44e" stroke-width="1"/><rect x="1199" y="236.5" width="1" height="12.7" fill="#4ee44e"/><rect x="1198.5" y="238.8" width="2" height="5.2" fill="#000" stroke="#4ee44e" stroke-width="1"/><rect x="1203" y="235.1" width="1" height="3.7" fill="#4ee44e"/><rect x="1202" y="237.6" width="3" height="1.2" fill="#4ee44e"/><rect x="1207" y="231.1" width="1" height="8.5" fill="#4ee44e"/><rect x="1206.5" y="234.0" width="2" height="2.6" fill="#000" stroke="#4ee44e" stroke-width="1"/><rect x="1211" y="225.5" width="1" height="9.5" fill="#4ee44e"/><rect x="1210" y="233.5" width="3" height="1.2" fill="#4ee44e"/><rect x="1215" y="227.2" width="1" height="10.6" fill="#4ee44e"/><rect x="1214.5" y="228.8" width="2" height="3.7" fill="#000" stroke="#4ee44e" stroke-width="1"/><rect x="1219" y="222.8" width="1" height="9.7" fill="#4ee44e"/><rect x="1218.5" y="226.4" width="2" height="0.7" fill="#000" stroke="#4ee44e" stroke-width="1"/><rect x="1223" y="223.8" width="1" height="6.0" fill="#4ee44e"/><rect x="1222" y="225.5" width="3" height="1.2" fill="#4ee44e"/><rect x="1227" y="217.5" width="1" height="12.5" fill="#4ee44e"/><rect x="1226.5" y="222.3" width="2" height="2.3" fill="#000" stroke="#4ee44e" stroke-width="1"/><rect x="1231" y="217.6" width="1" height="10.7" fill="#4ee44e"/><rect x="1230.5" y="220.0" width="2" height="1.6" fill="#000" stroke="#4ee44e" stroke-width="1"/><rect x="1235" y="208.3" width="1" height="15.7" fill="#4ee44e"/><rect x="1234.5" y="212.6" width="2" height="6.1" fill="#000" stroke="#4ee44e" stroke-width="1"/><rect x="1239" y="210.2" width="1" height="4.5" fill="#4ee44e"/><rect x="1238" y="212.6" width="3" height="1.2" fill="#4ee44e"/><rect x="1243" y="199.0" width="1" height="18.2" fill="#4ee44e"/><rect x="1242.5" y="204.1" width="2" height="8.2" fill="#000" stroke="#4ee44e" stroke-width="1"/><rect x="1247" y="199.3" width="1" height="15.2" fill="#4ee44e"/><rect x="1246.5" y="203.5" width="2" height="5.9" fill="#a8f5a8" stroke="#4ee44e" stroke-width="1"/><rect x="1251" y="205.2" width="1" height="7.6" fill="#4ee44e"/><rect x="1250" y="209.4" width="3" height="1.2" fill="#4ee44e"/><rect x="1255" y="205.6" width="1" height="11.0" fill="#4ee44e"/><rect x="1254.5" y="210.9" width="2" height="1.3" fill="#a8f5a8" stroke="#4ee44e" stroke-width="1"/><rect x="1259" y="202.0" width="1" height="12.9" fill="#4ee44e"/><rect x="1258.5" y="206.7" width="2" height="6.1" fill="#000" stroke="#4ee44e" stroke-width="1"/><rect x="1263" y="180.5" width="1" height="27.0" fill="#4ee44e"/><rect x="1262.5" y="193.1" width="2" height="12.4" fill="#000" stroke="#4ee44e" stroke-width="1"/><rect x="1267" y="190.5" width="1" height="11.7" fill="#4ee44e"/><rect x="1266.5" y="193.8" width="2" height="3.5" fill="#a8f5a8" stroke="#4ee44e" stroke-width="1"/><rect x="1271" y="195.4" width="1" height="8.1" fill="#4ee44e"/><rect x="1270.5" y="197.9" width="2" height="1.8" fill="#a8f5a8" stroke="#4ee44e" stroke-width="1"/><rect x="1275" y="196.8" width="1" height="6.8" fill="#4ee44e"/><rect x="1274.5" y="199.7" width="2" height="0.6" fill="#000" stroke="#4ee44e" stroke-width="1"/><rect x="1279" y="196.1" width="1" height="12.6" fill="#4ee44e"/><rect x="1278" y="199.1" width="3" height="1.2" fill="#4ee44e"/><rect x="1283" y="185.2" width="1" height="14.7" fill="#4ee44e"/><rect x="1282.5" y="189.9" width="2" height="7.8" fill="#000" stroke="#4ee44e" stroke-width="1"/><rect x="1287" y="181.7" width="1" height="17.0" fill="#4ee44e"/><rect x="1286.5" y="185.3" width="2" height="3.3" fill="#000" stroke="#4ee44e" stroke-width="1"/><rect x="1291" y="176.3" width="1" height="11.1" fill="#4ee44e"/><rect x="1290.5" y="180.9" width="2" height="3.0" fill="#000" stroke="#4ee44e" stroke-width="1"/><rect x="1295" y="176.9" width="1" height="12.5" fill="#4ee44e"/><rect x="1294.5" y="180.8" width="2" height="5.0" fill="#a8f5a8" stroke="#4ee44e" stroke-width="1"/><rect x="1299" y="181.2" width="1" height="10.0" fill="#4ee44e"/><rect x="1298.5" y="184.6" width="2" height="1.3" fill="#000" stroke="#4ee44e" stroke-width="1"/><rect x="1303" y="180.5" width="1" height="9.6" fill="#4ee44e"/><rect x="1302.5" y="184.2" width="2" height="0.6" fill="#a8f5a8" stroke="#4ee44e" stroke-width="1"/><rect x="1307" y="166.1" width="1" height="21.0" fill="#4ee44e"/><rect x="1306.5" y="174.9" width="2" height="9.8" fill="#000" stroke="#4ee44e" stroke-width="1"/><rect x="1311" y="160.6" width="1" height="17.0" fill="#4ee44e"/><rect x="1310.5" y="164.9" width="2" height="8.4" fill="#000" stroke="#4ee44e" stroke-width="1"/><rect x="1315" y="149.0" width="1" height="17.5" fill="#4ee44e"/><rect x="1314.5" y="154.3" width="2" height="9.1" fill="#000" stroke="#4ee44e" stroke-width="1"/><rect x="1319" y="146.2" width="1" height="10.1" fill="#4ee44e"/><rect x="1318.5" y="149.5" width="2" height="3.3" fill="#000" stroke="#4ee44e" stroke-width="1"/><rect x="1323" y="142.6" width="1" height="14.9" fill="#4ee44e"/><rect x="1322.5" y="144.2" width="2" height="4.6" fill="#000" stroke="#4ee44e" stroke-width="1"/><rect x="1327" y="142.4" width="1" height="6.8" fill="#4ee44e"/><rect x="1326" y="143.7" width="3" height="1.2" fill="#4ee44e"/><rect x="1331" y="136.4" width="1" height="11.6" fill="#4ee44e"/><rect x="1330.5" y="138.1" width="2" height="5.3" fill="#000" stroke="#4ee44e" stroke-width="1"/><rect x="1335" y="119.3" width="1" height="20.9" fill="#4ee44e"/><rect x="1334.5" y="124.1" width="2" height="13.6" fill="#000" stroke="#4ee44e" stroke-width="1"/><rect x="1339" y="114.2" width="1" height="10.9" fill="#4ee44e"/><rect x="1338.5" y="116.1" width="2" height="7.3" fill="#000" stroke="#4ee44e" stroke-width="1"/><rect x="1343" y="104.6" width="1" height="25.6" fill="#4ee44e"/><rect x="1342.5" y="116.8" width="2" height="0.6" fill="#a8f5a8" stroke="#4ee44e" stroke-width="1"/><rect x="1347" y="114.4" width="1" height="11.6" fill="#4ee44e"/><rect x="1346.5" y="118.1" width="2" height="2.7" fill="#a8f5a8" stroke="#4ee44e" stroke-width="1"/><rect x="1351" y="115.2" width="1" height="9.2" fill="#4ee44e"/><rect x="1350.5" y="121.4" width="2" height="0.9" fill="#a8f5a8" stroke="#4ee44e" stroke-width="1"/><rect x="1355" y="120.3" width="1" height="5.9" fill="#4ee44e"/><rect x="1354" y="122.5" width="3" height="1.2" fill="#4ee44e"/><rect x="1359" y="120.7" width="1" height="5.3" fill="#4ee44e"/><rect x="1358" y="121.8" width="3" height="1.2" fill="#4ee44e"/><rect x="1363" y="121.0" width="1" height="26.3" fill="#4ee44e"/><rect x="1362.5" y="123.0" width="2" height="19.6" fill="#a8f5a8" stroke="#4ee44e" stroke-width="1"/><rect x="1367" y="139.9" width="1" height="9.2" fill="#4ee44e"/><rect x="1366.5" y="143.4" width="2" height="1.5" fill="#a8f5a8" stroke="#4ee44e" stroke-width="1"/><rect x="1371" y="140.6" width="1" height="11.5" fill="#4ee44e"/><rect x="1370.5" y="144.7" width="2" height="0.5" fill="#000" stroke="#4ee44e" stroke-width="1"/><rect x="1375" y="128.6" width="1" height="17.6" fill="#4ee44e"/><rect x="1374.5" y="139.1" width="2" height="4.9" fill="#000" stroke="#4ee44e" stroke-width="1"/><rect x="1379" y="136.3" width="1" height="19.0" fill="#4ee44e"/><rect x="1378.5" y="138.8" width="2" height="13.9" fill="#a8f5a8" stroke="#4ee44e" stroke-width="1"/><rect x="1383" y="147.9" width="1" height="11.3" fill="#4ee44e"/><rect x="1382.5" y="153.3" width="2" height="0.6" fill="#a8f5a8" stroke="#4ee44e" stroke-width="1"/><rect x="1387" y="151.6" width="1" height="8.8" fill="#4ee44e"/><rect x="1386.5" y="154.6" width="2" height="4.4" fill="#a8f5a8" stroke="#4ee44e" stroke-width="1"/><rect x="1391" y="151.5" width="1" height="13.9" fill="#4ee44e"/><rect x="1390.5" y="155.0" width="2" height="3.5" fill="#000" stroke="#4ee44e" stroke-width="1"/><rect x="1395" y="148.5" width="1" height="7.2" fill="#4ee44e"/><rect x="1394.5" y="151.2" width="2" height="2.0" fill="#000" stroke="#4ee44e" stroke-width="1"/><rect x="1399" y="147.1" width="1" height="11.9" fill="#4ee44e"/><rect x="1398.5" y="151.5" width="2" height="2.5" fill="#a8f5a8" stroke="#4ee44e" stroke-width="1"/><rect x="1403" y="142.0" width="1" height="16.7" fill="#4ee44e"/><rect x="1402" y="153.9" width="3" height="1.2" fill="#4ee44e"/><rect x="1407" y="144.8" width="1" height="12.3" fill="#4ee44e"/><rect x="1406.5" y="149.6" width="2" height="5.5" fill="#000" stroke="#4ee44e" stroke-width="1"/><rect x="1411" y="145.2" width="1" height="9.4" fill="#4ee44e"/><rect x="1410.5" y="150.0" width="2" height="0.7" fill="#a8f5a8" stroke="#4ee44e" stroke-width="1"/><rect x="1415" y="149.7" width="1" height="12.9" fill="#4ee44e"/><rect x="1414.5" y="151.3" width="2" height="1.2" fill="#a8f5a8" stroke="#4ee44e" stroke-width="1"/><rect x="1419" y="148.5" width="1" height="16.2" fill="#4ee44e"/><rect x="1418" y="152.0" width="3" height="1.2" fill="#4ee44e"/><rect x="1423" y="141.5" width="1" height="15.0" fill="#4ee44e"/><rect x="1422" y="152.0" width="3" height="1.2" fill="#4ee44e"/><rect x="1427" y="144.2" width="1" height="10.1" fill="#4ee44e"/><rect x="1426.5" y="148.6" width="2" height="3.3" fill="#000" stroke="#4ee44e" stroke-width="1"/><rect x="1431" y="145.0" width="1" height="7.4" fill="#4ee44e"/><rect x="1430" y="148.0" width="3" height="1.2" fill="#4ee44e"/><rect x="1435" y="146.4" width="1" height="21.3" fill="#4ee44e"/><rect x="1434.5" y="148.5" width="2" height="16.7" fill="#a8f5a8" stroke="#4ee44e" stroke-width="1"/><rect x="1439" y="163.6" width="1" height="16.0" fill="#4ee44e"/><rect x="1438.5" y="165.4" width="2" height="11.7" fill="#a8f5a8" stroke="#4ee44e" stroke-width="1"/><rect x="1443" y="174.2" width="1" height="16.5" fill="#4ee44e"/><rect x="1442.5" y="177.8" width="2" height="1.2" fill="#a8f5a8" stroke="#4ee44e" stroke-width="1"/><rect x="1447" y="171.4" width="1" height="9.9" fill="#4ee44e"/><rect x="1446.5" y="176.6" width="2" height="3.0" fill="#000" stroke="#4ee44e" stroke-width="1"/><rect x="1451" y="174.0" width="1" height="7.9" fill="#4ee44e"/><rect x="1450.5" y="176.6" width="2" height="3.0" fill="#a8f5a8" stroke="#4ee44e" stroke-width="1"/><rect x="1455" y="174.3" width="1" height="10.0" fill="#4ee44e"/><rect x="1454.5" y="177.9" width="2" height="1.1" fill="#000" stroke="#4ee44e" stroke-width="1"/><rect x="1459" y="174.2" width="1" height="7.7" fill="#4ee44e"/><rect x="1458.5" y="178.6" width="2" height="0.9" fill="#a8f5a8" stroke="#4ee44e" stroke-width="1"/><rect x="1463" y="176.2" width="1" height="6.5" fill="#4ee44e"/><rect x="1462" y="179.2" width="3" height="1.2" fill="#4ee44e"/><rect x="1467" y="175.2" width="1" height="9.1" fill="#4ee44e"/><rect x="1466.5" y="180.1" width="2" height="2.8" fill="#a8f5a8" stroke="#4ee44e" stroke-width="1"/><rect x="1471" y="179.1" width="1" height="9.6" fill="#4ee44e"/><rect x="1470" y="182.9" width="3" height="1.2" fill="#4ee44e"/><rect x="1475" y="180.4" width="1" height="6.8" fill="#4ee44e"/><rect x="1474" y="183.7" width="3" height="1.2" fill="#4ee44e"/><rect x="1479" y="176.7" width="1" height="9.5" fill="#4ee44e"/><rect x="1478.5" y="181.6" width="2" height="2.1" fill="#000" stroke="#4ee44e" stroke-width="1"/><rect x="1483" y="179.2" width="1" height="4.4" fill="#4ee44e"/><rect x="1482" y="180.9" width="3" height="1.2" fill="#4ee44e"/><rect x="1487" y="176.5" width="1" height="14.9" fill="#4ee44e"/><rect x="1486.5" y="181.7" width="2" height="4.5" fill="#a8f5a8" stroke="#4ee44e" stroke-width="1"/><rect x="1491" y="181.5" width="1" height="9.6" fill="#4ee44e"/><rect x="1490.5" y="184.8" width="2" height="1.8" fill="#000" stroke="#4ee44e" stroke-width="1"/><rect x="1495" y="183.5" width="1" height="5.3" fill="#4ee44e"/><rect x="1494" y="185.0" width="3" height="1.2" fill="#4ee44e"/><rect x="1499" y="184.6" width="1" height="10.0" fill="#4ee44e"/><rect x="1498.5" y="187.1" width="2" height="3.3" fill="#a8f5a8" stroke="#4ee44e" stroke-width="1"/><rect x="1503" y="188.8" width="1" height="7.5" fill="#4ee44e"/><rect x="1502.5" y="191.0" width="2" height="3.0" fill="#a8f5a8" stroke="#4ee44e" stroke-width="1"/><rect x="1507" y="190.1" width="1" height="13.3" fill="#4ee44e"/><rect x="1506.5" y="195.6" width="2" height="4.5" fill="#a8f5a8" stroke="#4ee44e" stroke-width="1"/><rect x="1511" y="194.0" width="1" height="8.4" fill="#4ee44e"/><rect x="1510.5" y="195.8" width="2" height="4.0" fill="#000" stroke="#4ee44e" stroke-width="1"/><rect x="1515" y="193.0" width="1" height="5.3" fill="#4ee44e"/><rect x="1514" y="195.7" width="3" height="1.2" fill="#4ee44e"/><rect x="1519" y="190.1" width="1" height="9.8" fill="#4ee44e"/><rect x="1518.5" y="192.7" width="2" height="1.8" fill="#000" stroke="#4ee44e" stroke-width="1"/><rect x="1523" y="190.9" width="1" height="5.2" fill="#4ee44e"/><rect x="1522" y="192.8" width="3" height="1.2" fill="#4ee44e"/><rect x="1527" y="187.2" width="1" height="12.9" fill="#4ee44e"/><rect x="1526" y="194.8" width="3" height="1.2" fill="#4ee44e"/><rect x="1531" y="192.2" width="1" height="11.3" fill="#4ee44e"/><rect x="1530.5" y="196.1" width="2" height="5.9" fill="#a8f5a8" stroke="#4ee44e" stroke-width="1"/><rect x="1535" y="190.3" width="1" height="14.8" fill="#4ee44e"/><rect x="1534.5" y="199.6" width="2" height="3.0" fill="#000" stroke="#4ee44e" stroke-width="1"/><rect x="1539" y="156.2" width="1" height="47.2" fill="#4ee44e"/><rect x="1538.5" y="160.6" width="2" height="38.7" fill="#000" stroke="#4ee44e" stroke-width="1"/><rect x="1543" y="149.2" width="1" height="12.2" fill="#4ee44e"/><rect x="1542.5" y="153.8" width="2" height="5.1" fill="#000" stroke="#4ee44e" stroke-width="1"/><rect x="1547" y="150.1" width="1" height="9.6" fill="#4ee44e"/><rect x="1546" y="152.1" width="3" height="1.2" fill="#4ee44e"/><rect x="1551" y="149.7" width="1" height="14.6" fill="#4ee44e"/><rect x="1550.5" y="152.7" width="2" height="4.3" fill="#a8f5a8" stroke="#4ee44e" stroke-width="1"/><rect x="1555" y="154.7" width="1" height="41.8" fill="#4ee44e"/><rect x="1554.5" y="158.8" width="2" height="32.7" fill="#a8f5a8" stroke="#4ee44e" stroke-width="1"/><rect x="1559" y="182.9" width="1" height="34.2" fill="#4ee44e"/><rect x="1558.5" y="193.2" width="2" height="21.2" fill="#a8f5a8" stroke="#4ee44e" stroke-width="1"/><rect x="1563" y="210.8" width="1" height="23.3" fill="#4ee44e"/><rect x="1562.5" y="215.0" width="2" height="8.9" fill="#a8f5a8" stroke="#4ee44e" stroke-width="1"/><rect x="1567" y="222.9" width="1" height="6.9" fill="#4ee44e"/><rect x="1566" y="224.7" width="3" height="1.2" fill="#4ee44e"/><rect x="1571" y="224.1" width="1" height="7.7" fill="#4ee44e"/><rect x="1570" y="226.4" width="3" height="1.2" fill="#4ee44e"/><rect x="1575" y="222.4" width="1" height="25.7" fill="#4ee44e"/><rect x="1574.5" y="227.7" width="2" height="16.9" fill="#a8f5a8" stroke="#4ee44e" stroke-width="1"/><rect x="1579" y="240.6" width="1" height="19.1" fill="#4ee44e"/><rect x="1578.5" y="245.9" width="2" height="11.7" fill="#a8f5a8" stroke="#4ee44e" stroke-width="1"/><rect x="1583" y="256.3" width="1" height="5.4" fill="#4ee44e"/><rect x="1582.5" y="258.0" width="2" height="2.0" fill="#a8f5a8" stroke="#4ee44e" stroke-width="1"/><rect x="1587" y="253.8" width="1" height="11.8" fill="#4ee44e"/><rect x="1586.5" y="259.3" width="2" height="1.1" fill="#000" stroke="#4ee44e" stroke-width="1"/><rect x="1591" y="257.9" width="1" height="4.9" fill="#4ee44e"/><rect x="1590" y="259.1" width="3" height="1.2" fill="#4ee44e"/><rect x="1595" y="254.2" width="1" height="6.5" fill="#4ee44e"/><rect x="1594.5" y="255.7" width="2" height="2.3" fill="#000" stroke="#4ee44e" stroke-width="1"/><rect x="1599" y="250.0" width="1" height="8.3" fill="#4ee44e"/><rect x="1598.5" y="252.4" width="2" height="3.1" fill="#000" stroke="#4ee44e" stroke-width="1"/><rect x="1603" y="246.9" width="1" height="6.7" fill="#4ee44e"/><rect x="1602" y="249.8" width="3" height="1.2" fill="#4ee44e"/><rect x="1607" y="243.8" width="1" height="9.3" fill="#4ee44e"/><rect x="1606.5" y="245.4" width="2" height="4.5" fill="#000" stroke="#4ee44e" stroke-width="1"/><rect x="1611" y="231.6" width="1" height="17.3" fill="#4ee44e"/><rect x="1610.5" y="233.4" width="2" height="10.3" fill="#000" stroke="#4ee44e" stroke-width="1"/><rect x="1615" y="230.5" width="1" height="11.7" fill="#4ee44e"/><rect x="1614.5" y="233.1" width="2" height="3.8" fill="#a8f5a8" stroke="#4ee44e" stroke-width="1"/><rect x="1619" y="234.7" width="1" height="3.5" fill="#4ee44e"/><rect x="1618" y="236.8" width="3" height="1.2" fill="#4ee44e"/><rect x="1623" y="234.3" width="1" height="5.1" fill="#4ee44e"/><rect x="1622.5" y="235.9" width="2" height="1.1" fill="#000" stroke="#4ee44e" stroke-width="1"/><rect x="1627" y="233.0" width="1" height="5.0" fill="#4ee44e"/><rect x="1626" y="235.0" width="3" height="1.2" fill="#4ee44e"/><rect x="1631" y="223.8" width="1" height="16.0" fill="#4ee44e"/><rect x="1630.5" y="228.2" width="2" height="6.7" fill="#000" stroke="#4ee44e" stroke-width="1"/><rect x="1635" y="220.8" width="1" height="21.7" fill="#4ee44e"/><rect x="1634.5" y="227.9" width="2" height="10.0" fill="#a8f5a8" stroke="#4ee44e" stroke-width="1"/><rect x="1639" y="236.5" width="1" height="6.3" fill="#4ee44e"/><rect x="1638.5" y="238.2" width="2" height="1.0" fill="#a8f5a8" stroke="#4ee44e" stroke-width="1"/><rect x="1643" y="232.4" width="1" height="14.5" fill="#4ee44e"/><rect x="1642.5" y="240.9" width="2" height="4.1" fill="#a8f5a8" stroke="#4ee44e" stroke-width="1"/><rect x="1647" y="240.8" width="1" height="7.7" fill="#4ee44e"/><rect x="1646.5" y="244.0" width="2" height="0.6" fill="#000" stroke="#4ee44e" stroke-width="1"/><rect x="1651" y="242.3" width="1" height="7.3" fill="#4ee44e"/><rect x="1650" y="243.8" width="3" height="1.2" fill="#4ee44e"/><rect x="1655" y="239.6" width="1" height="8.0" fill="#4ee44e"/><rect x="1654.5" y="241.9" width="2" height="3.2" fill="#000" stroke="#4ee44e" stroke-width="1"/><rect x="1659" y="239.3" width="1" height="7.5" fill="#4ee44e"/><rect x="1658.5" y="242.1" width="2" height="1.6" fill="#a8f5a8" stroke="#4ee44e" stroke-width="1"/><rect x="1663" y="230.5" width="1" height="19.1" fill="#4ee44e"/><rect x="1662.5" y="240.5" width="2" height="3.7" fill="#000" stroke="#4ee44e" stroke-width="1"/><rect x="1667" y="235.4" width="1" height="10.7" fill="#4ee44e"/><rect x="1666.5" y="241.2" width="2" height="2.2" fill="#a8f5a8" stroke="#4ee44e" stroke-width="1"/><rect x="1671" y="241.2" width="1" height="7.8" fill="#4ee44e"/><rect x="1670" y="243.7" width="3" height="1.2" fill="#4ee44e"/><rect x="1675" y="243.0" width="1" height="6.9" fill="#4ee44e"/><rect x="1674.5" y="244.9" width="2" height="1.1" fill="#a8f5a8" stroke="#4ee44e" stroke-width="1"/><rect x="1679" y="243.7" width="1" height="4.3" fill="#4ee44e"/><rect x="1678" y="245.6" width="3" height="1.2" fill="#4ee44e"/><rect x="1683" y="241.8" width="1" height="6.7" fill="#4ee44e"/><rect x="1682" y="244.1" width="3" height="1.2" fill="#4ee44e"/><rect x="1687" y="234.8" width="1" height="11.0" fill="#4ee44e"/><rect x="1686" y="243.4" width="3" height="1.2" fill="#4ee44e"/><rect x="1691" y="241.1" width="1" height="8.2" fill="#4ee44e"/><rect x="1690.5" y="243.3" width="2" height="1.8" fill="#a8f5a8" stroke="#4ee44e" stroke-width="1"/><rect x="1695" y="241.0" width="1" height="8.6" fill="#4ee44e"/><rect x="1694.5" y="243.7" width="2" height="2.1" fill="#000" stroke="#4ee44e" stroke-width="1"/><rect x="1699" y="241.5" width="1" height="8.2" fill="#4ee44e"/><rect x="1698.5" y="244.5" width="2" height="2.9" fill="#a8f5a8" stroke="#4ee44e" stroke-width="1"/><rect x="1703" y="240.4" width="1" height="12.5" fill="#4ee44e"/><rect x="1702.5" y="243.6" width="2" height="4.5" fill="#000" stroke="#4ee44e" stroke-width="1"/><rect x="1707" y="241.5" width="1" height="5.6" fill="#4ee44e"/><rect x="1706" y="242.5" width="3" height="1.2" fill="#4ee44e"/></g>
<g clip-path="url(#cah4)"><rect x="1119" y="312.3" width="1" height="13.7" fill="#c8c8c8"/><rect x="1119" y="325.5" width="3" height="1" fill="#c8c8c8"/><rect x="1123" y="312.3" width="1" height="13.7" fill="#c8c8c8"/><rect x="1127" y="312.3" width="1" height="13.7" fill="#c8c8c8"/><rect x="1125" y="325.5" width="3" height="1" fill="#c8c8c8"/><rect x="1131" y="312.3" width="1" height="13.7" fill="#c8c8c8"/><rect x="1131" y="325.5" width="3" height="1" fill="#c8c8c8"/><rect x="1135" y="312.3" width="1" height="13.7" fill="#c8c8c8"/><rect x="1139" y="312.3" width="1" height="13.7" fill="#c8c8c8"/><rect x="1137" y="325.5" width="3" height="1" fill="#c8c8c8"/><rect x="1143" y="312.3" width="1" height="13.7" fill="#c8c8c8"/><rect x="1143" y="325.5" width="3" height="1" fill="#c8c8c8"/><rect x="1147" y="312.3" width="1" height="13.7" fill="#c8c8c8"/><rect x="1151" y="314.1" width="1" height="11.9" fill="#c8c8c8"/><rect x="1149" y="325.5" width="3" height="1" fill="#c8c8c8"/><rect x="1155" y="319.9" width="1" height="6.1" fill="#c8c8c8"/><rect x="1155" y="325.5" width="3" height="1" fill="#c8c8c8"/><rect x="1159" y="320.4" width="1" height="5.6" fill="#c8c8c8"/><rect x="1163" y="320.9" width="1" height="5.1" fill="#c8c8c8"/><rect x="1161" y="325.5" width="3" height="1" fill="#c8c8c8"/><rect x="1167" y="321.3" width="1" height="4.7" fill="#c8c8c8"/><rect x="1167" y="325.5" width="3" height="1" fill="#c8c8c8"/><rect x="1171" y="321.8" width="1" height="4.2" fill="#c8c8c8"/><rect x="1175" y="322.3" width="1" height="3.7" fill="#c8c8c8"/><rect x="1173" y="325.5" width="3" height="1" fill="#c8c8c8"/><rect x="1179" y="323.0" width="1" height="3.0" fill="#c8c8c8"/><rect x="1179" y="325.5" width="3" height="1" fill="#c8c8c8"/><rect x="1183" y="325.1" width="1" height="0.9" fill="#c8c8c8"/><rect x="1187" y="326.0" width="1" height="1.2" fill="#c8c8c8"/><rect x="1185" y="325.5" width="3" height="1" fill="#c8c8c8"/><rect x="1191" y="326.0" width="1" height="3.0" fill="#c8c8c8"/><rect x="1191" y="325.5" width="3" height="1" fill="#c8c8c8"/><rect x="1195" y="326.0" width="1" height="3.9" fill="#c8c8c8"/><rect x="1199" y="326.0" width="1" height="4.8" fill="#c8c8c8"/><rect x="1197" y="325.5" width="3" height="1" fill="#c8c8c8"/><rect x="1203" y="326.0" width="1" height="5.7" fill="#c8c8c8"/><rect x="1203" y="325.5" width="3" height="1" fill="#c8c8c8"/><rect x="1207" y="326.0" width="1" height="6.6" fill="#c8c8c8"/><rect x="1211" y="326.0" width="1" height="7.5" fill="#c8c8c8"/><rect x="1209" y="325.5" width="3" height="1" fill="#c8c8c8"/><rect x="1215" y="326.0" width="1" height="6.9" fill="#c8c8c8"/><rect x="1215" y="325.5" width="3" height="1" fill="#c8c8c8"/><rect x="1219" y="326.0" width="1" height="6.1" fill="#c8c8c8"/><rect x="1223" y="326.0" width="1" height="5.3" fill="#c8c8c8"/><rect x="1221" y="325.5" width="3" height="1" fill="#c8c8c8"/><rect x="1227" y="326.0" width="1" height="4.5" fill="#c8c8c8"/><rect x="1227" y="325.5" width="3" height="1" fill="#c8c8c8"/><rect x="1231" y="326.0" width="1" height="3.7" fill="#c8c8c8"/><rect x="1235" y="325.2" width="1" height="0.8" fill="#c8c8c8"/><rect x="1233" y="325.5" width="3" height="1" fill="#c8c8c8"/><rect x="1239" y="319.6" width="1" height="6.4" fill="#c8c8c8"/><rect x="1239" y="325.5" width="3" height="1" fill="#c8c8c8"/><rect x="1243" y="319.0" width="1" height="7.0" fill="#c8c8c8"/><rect x="1247" y="318.3" width="1" height="7.7" fill="#c8c8c8"/><rect x="1245" y="325.5" width="3" height="1" fill="#c8c8c8"/><rect x="1251" y="317.6" width="1" height="8.4" fill="#c8c8c8"/><rect x="1251" y="325.5" width="3" height="1" fill="#c8c8c8"/><rect x="1255" y="317.0" width="1" height="9.0" fill="#c8c8c8"/><rect x="1259" y="316.3" width="1" height="9.7" fill="#c8c8c8"/><rect x="1257" y="325.5" width="3" height="1" fill="#c8c8c8"/><rect x="1263" y="315.6" width="1" height="10.4" fill="#c8c8c8"/><rect x="1263" y="325.5" width="3" height="1" fill="#c8c8c8"/><rect x="1267" y="315.0" width="1" height="11.0" fill="#c8c8c8"/><rect x="1271" y="314.4" width="1" height="11.6" fill="#c8c8c8"/><rect x="1269" y="325.5" width="3" height="1" fill="#c8c8c8"/><rect x="1275" y="313.9" width="1" height="12.1" fill="#c8c8c8"/><rect x="1275" y="325.5" width="3" height="1" fill="#c8c8c8"/><rect x="1279" y="313.3" width="1" height="12.7" fill="#c8c8c8"/><rect x="1283" y="312.8" width="1" height="13.2" fill="#c8c8c8"/><rect x="1281" y="325.5" width="3" height="1" fill="#c8c8c8"/><rect x="1287" y="312.2" width="1" height="13.8" fill="#c8c8c8"/><rect x="1287" y="325.5" width="3" height="1" fill="#c8c8c8"/><rect x="1291" y="311.7" width="1" height="14.3" fill="#c8c8c8"/><rect x="1295" y="311.1" width="1" height="14.9" fill="#c8c8c8"/><rect x="1293" y="325.5" width="3" height="1" fill="#c8c8c8"/><rect x="1299" y="310.5" width="1" height="15.5" fill="#c8c8c8"/><rect x="1299" y="325.5" width="3" height="1" fill="#c8c8c8"/><rect x="1303" y="310.0" width="1" height="16.0" fill="#c8c8c8"/><rect x="1307" y="309.4" width="1" height="16.6" fill="#c8c8c8"/><rect x="1305" y="325.5" width="3" height="1" fill="#c8c8c8"/><rect x="1311" y="307.9" width="1" height="18.1" fill="#c8c8c8"/><rect x="1311" y="325.5" width="3" height="1" fill="#c8c8c8"/><rect x="1315" y="305.6" width="1" height="20.4" fill="#c8c8c8"/><rect x="1319" y="303.3" width="1" height="22.7" fill="#c8c8c8"/><rect x="1317" y="325.5" width="3" height="1" fill="#c8c8c8"/><rect x="1323" y="300.9" width="1" height="25.1" fill="#c8c8c8"/><rect x="1323" y="325.5" width="3" height="1" fill="#c8c8c8"/><rect x="1327" y="297.6" width="1" height="28.4" fill="#c8c8c8"/><rect x="1331" y="294.3" width="1" height="31.7" fill="#c8c8c8"/><rect x="1329" y="325.5" width="3" height="1" fill="#c8c8c8"/><rect x="1335" y="291.0" width="1" height="35.0" fill="#c8c8c8"/><rect x="1335" y="325.5" width="3" height="1" fill="#c8c8c8"/><rect x="1339" y="288.8" width="1" height="37.2" fill="#c8c8c8"/><rect x="1343" y="288.4" width="1" height="37.6" fill="#c8c8c8"/><rect x="1341" y="325.5" width="3" height="1" fill="#c8c8c8"/><rect x="1347" y="288.0" width="1" height="38.0" fill="#c8c8c8"/><rect x="1347" y="325.5" width="3" height="1" fill="#c8c8c8"/><rect x="1351" y="287.6" width="1" height="38.4" fill="#c8c8c8"/><rect x="1355" y="287.2" width="1" height="38.8" fill="#c8c8c8"/><rect x="1353" y="325.5" width="3" height="1" fill="#c8c8c8"/><rect x="1359" y="288.9" width="1" height="37.1" fill="#c8c8c8"/><rect x="1359" y="325.5" width="3" height="1" fill="#c8c8c8"/><rect x="1363" y="291.7" width="1" height="34.3" fill="#c8c8c8"/><rect x="1367" y="294.7" width="1" height="31.3" fill="#c8c8c8"/><rect x="1365" y="325.5" width="3" height="1" fill="#c8c8c8"/><rect x="1371" y="297.9" width="1" height="28.1" fill="#c8c8c8"/><rect x="1371" y="325.5" width="3" height="1" fill="#c8c8c8"/><rect x="1375" y="301.2" width="1" height="24.8" fill="#c8c8c8"/><rect x="1379" y="304.4" width="1" height="21.6" fill="#c8c8c8"/><rect x="1377" y="325.5" width="3" height="1" fill="#c8c8c8"/><rect x="1383" y="307.7" width="1" height="18.3" fill="#c8c8c8"/><rect x="1383" y="325.5" width="3" height="1" fill="#c8c8c8"/><rect x="1387" y="310.2" width="1" height="15.8" fill="#c8c8c8"/><rect x="1391" y="312.2" width="1" height="13.8" fill="#c8c8c8"/><rect x="1389" y="325.5" width="3" height="1" fill="#c8c8c8"/><rect x="1395" y="314.2" width="1" height="11.8" fill="#c8c8c8"/><rect x="1395" y="325.5" width="3" height="1" fill="#c8c8c8"/><rect x="1399" y="316.2" width="1" height="9.8" fill="#c8c8c8"/><rect x="1403" y="318.2" width="1" height="7.8" fill="#c8c8c8"/><rect x="1401" y="325.5" width="3" height="1" fill="#c8c8c8"/><rect x="1407" y="320.2" width="1" height="5.8" fill="#c8c8c8"/><rect x="1407" y="325.5" width="3" height="1" fill="#c8c8c8"/><rect x="1411" y="321.4" width="1" height="4.6" fill="#c8c8c8"/><rect x="1415" y="321.9" width="1" height="4.1" fill="#c8c8c8"/><rect x="1413" y="325.5" width="3" height="1" fill="#c8c8c8"/><rect x="1419" y="322.5" width="1" height="3.5" fill="#c8c8c8"/><rect x="1419" y="325.5" width="3" height="1" fill="#c8c8c8"/><rect x="1423" y="323.1" width="1" height="2.9" fill="#c8c8c8"/><rect x="1427" y="323.6" width="1" height="2.4" fill="#c8c8c8"/><rect x="1425" y="325.5" width="3" height="1" fill="#c8c8c8"/><rect x="1431" y="324.2" width="1" height="1.8" fill="#c8c8c8"/><rect x="1431" y="325.5" width="3" height="1" fill="#c8c8c8"/><rect x="1435" y="324.8" width="1" height="1.2" fill="#c8c8c8"/><rect x="1439" y="326.0" width="1" height="2.7" fill="#c8c8c8"/><rect x="1437" y="325.5" width="3" height="1" fill="#c8c8c8"/><rect x="1443" y="326.0" width="1" height="8.4" fill="#c8c8c8"/><rect x="1443" y="325.5" width="3" height="1" fill="#c8c8c8"/><rect x="1447" y="326.0" width="1" height="9.4" fill="#c8c8c8"/><rect x="1451" y="326.0" width="1" height="10.4" fill="#c8c8c8"/><rect x="1449" y="325.5" width="3" height="1" fill="#c8c8c8"/><rect x="1455" y="326.0" width="1" height="11.4" fill="#c8c8c8"/><rect x="1455" y="325.5" width="3" height="1" fill="#c8c8c8"/><rect x="1459" y="326.0" width="1" height="12.4" fill="#c8c8c8"/><rect x="1463" y="326.0" width="1" height="13.4" fill="#c8c8c8"/><rect x="1461" y="325.5" width="3" height="1" fill="#c8c8c8"/><rect x="1467" y="326.0" width="1" height="14.1" fill="#c8c8c8"/><rect x="1467" y="325.5" width="3" height="1" fill="#c8c8c8"/><rect x="1471" y="326.0" width="1" height="14.2" fill="#c8c8c8"/><rect x="1475" y="326.0" width="1" height="14.4" fill="#c8c8c8"/><rect x="1473" y="325.5" width="3" height="1" fill="#c8c8c8"/><rect x="1479" y="326.0" width="1" height="14.5" fill="#c8c8c8"/><rect x="1479" y="325.5" width="3" height="1" fill="#c8c8c8"/><rect x="1483" y="326.0" width="1" height="14.6" fill="#c8c8c8"/><rect x="1487" y="326.0" width="1" height="14.8" fill="#c8c8c8"/><rect x="1485" y="325.5" width="3" height="1" fill="#c8c8c8"/><rect x="1491" y="326.0" width="1" height="14.9" fill="#c8c8c8"/><rect x="1491" y="325.5" width="3" height="1" fill="#c8c8c8"/><rect x="1495" y="326.0" width="1" height="15.0" fill="#c8c8c8"/><rect x="1499" y="326.0" width="1" height="15.2" fill="#c8c8c8"/><rect x="1497" y="325.5" width="3" height="1" fill="#c8c8c8"/><rect x="1503" y="326.0" width="1" height="15.6" fill="#c8c8c8"/><rect x="1503" y="325.5" width="3" height="1" fill="#c8c8c8"/><rect x="1507" y="326.0" width="1" height="16.1" fill="#c8c8c8"/><rect x="1511" y="326.0" width="1" height="16.3" fill="#c8c8c8"/><rect x="1509" y="325.5" width="3" height="1" fill="#c8c8c8"/><rect x="1515" y="326.0" width="1" height="16.1" fill="#c8c8c8"/><rect x="1515" y="325.5" width="3" height="1" fill="#c8c8c8"/><rect x="1519" y="326.0" width="1" height="16.0" fill="#c8c8c8"/><rect x="1523" y="326.0" width="1" height="15.8" fill="#c8c8c8"/><rect x="1521" y="325.5" width="3" height="1" fill="#c8c8c8"/><rect x="1527" y="326.0" width="1" height="15.6" fill="#c8c8c8"/><rect x="1527" y="325.5" width="3" height="1" fill="#c8c8c8"/><rect x="1531" y="326.0" width="1" height="15.4" fill="#c8c8c8"/><rect x="1535" y="326.0" width="1" height="15.2" fill="#c8c8c8"/><rect x="1533" y="325.5" width="3" height="1" fill="#c8c8c8"/><rect x="1539" y="326.0" width="1" height="12.1" fill="#c8c8c8"/><rect x="1539" y="325.5" width="3" height="1" fill="#c8c8c8"/><rect x="1543" y="326.0" width="1" height="8.5" fill="#c8c8c8"/><rect x="1547" y="326.0" width="1" height="4.9" fill="#c8c8c8"/><rect x="1545" y="325.5" width="3" height="1" fill="#c8c8c8"/><rect x="1551" y="326.0" width="1" height="2.4" fill="#c8c8c8"/><rect x="1551" y="325.5" width="3" height="1" fill="#c8c8c8"/><rect x="1555" y="326.0" width="1" height="0.5" fill="#c8c8c8"/><rect x="1559" y="323.6" width="1" height="2.4" fill="#c8c8c8"/><rect x="1557" y="325.5" width="3" height="1" fill="#c8c8c8"/><rect x="1563" y="326.0" width="1" height="11.2" fill="#c8c8c8"/><rect x="1563" y="325.5" width="3" height="1" fill="#c8c8c8"/><rect x="1567" y="326.0" width="1" height="18.1" fill="#c8c8c8"/><rect x="1571" y="326.0" width="1" height="22.1" fill="#c8c8c8"/><rect x="1569" y="325.5" width="3" height="1" fill="#c8c8c8"/><rect x="1575" y="326.0" width="1" height="26.1" fill="#c8c8c8"/><rect x="1575" y="325.5" width="3" height="1" fill="#c8c8c8"/><rect x="1579" y="326.0" width="1" height="29.6" fill="#c8c8c8"/><rect x="1583" y="326.0" width="1" height="30.7" fill="#c8c8c8"/><rect x="1581" y="325.5" width="3" height="1" fill="#c8c8c8"/><rect x="1587" y="326.0" width="1" height="31.8" fill="#c8c8c8"/><rect x="1587" y="325.5" width="3" height="1" fill="#c8c8c8"/><rect x="1591" y="326.0" width="1" height="33.0" fill="#c8c8c8"/><rect x="1595" y="326.0" width="1" height="34.1" fill="#c8c8c8"/><rect x="1593" y="325.5" width="3" height="1" fill="#c8c8c8"/><rect x="1599" y="326.0" width="1" height="35.2" fill="#c8c8c8"/><rect x="1599" y="325.5" width="3" height="1" fill="#c8c8c8"/><rect x="1603" y="326.0" width="1" height="33.7" fill="#c8c8c8"/><rect x="1607" y="326.0" width="1" height="31.7" fill="#c8c8c8"/><rect x="1605" y="325.5" width="3" height="1" fill="#c8c8c8"/><rect x="1611" y="326.0" width="1" height="29.7" fill="#c8c8c8"/><rect x="1611" y="325.5" width="3" height="1" fill="#c8c8c8"/><rect x="1615" y="326.0" width="1" height="26.8" fill="#c8c8c8"/><rect x="1619" y="326.0" width="1" height="23.8" fill="#c8c8c8"/><rect x="1617" y="325.5" width="3" height="1" fill="#c8c8c8"/><rect x="1623" y="326.0" width="1" height="20.8" fill="#c8c8c8"/><rect x="1623" y="325.5" width="3" height="1" fill="#c8c8c8"/><rect x="1627" y="326.0" width="1" height="17.8" fill="#c8c8c8"/><rect x="1631" y="326.0" width="1" height="15.1" fill="#c8c8c8"/><rect x="1629" y="325.5" width="3" height="1" fill="#c8c8c8"/><rect x="1635" y="326.0" width="1" height="14.7" fill="#c8c8c8"/><rect x="1635" y="325.5" width="3" height="1" fill="#c8c8c8"/><rect x="1639" y="326.0" width="1" height="14.2" fill="#c8c8c8"/><rect x="1643" y="326.0" width="1" height="13.7" fill="#c8c8c8"/><rect x="1641" y="325.5" width="3" height="1" fill="#c8c8c8"/><rect x="1647" y="326.0" width="1" height="13.2" fill="#c8c8c8"/><rect x="1647" y="325.5" width="3" height="1" fill="#c8c8c8"/><rect x="1651" y="326.0" width="1" height="12.7" fill="#c8c8c8"/><rect x="1655" y="326.0" width="1" height="12.3" fill="#c8c8c8"/><rect x="1653" y="325.5" width="3" height="1" fill="#c8c8c8"/><rect x="1659" y="326.0" width="1" height="11.8" fill="#c8c8c8"/><rect x="1659" y="325.5" width="3" height="1" fill="#c8c8c8"/><rect x="1663" y="326.0" width="1" height="11.3" fill="#c8c8c8"/><rect x="1667" y="326.0" width="1" height="10.8" fill="#c8c8c8"/><rect x="1665" y="325.5" width="3" height="1" fill="#c8c8c8"/><rect x="1671" y="326.0" width="1" height="10.4" fill="#c8c8c8"/><rect x="1671" y="325.5" width="3" height="1" fill="#c8c8c8"/><rect x="1675" y="326.0" width="1" height="10.0" fill="#c8c8c8"/><rect x="1679" y="326.0" width="1" height="9.6" fill="#c8c8c8"/><rect x="1677" y="325.5" width="3" height="1" fill="#c8c8c8"/><rect x="1683" y="326.0" width="1" height="9.2" fill="#c8c8c8"/><rect x="1683" y="325.5" width="3" height="1" fill="#c8c8c8"/><rect x="1687" y="326.0" width="1" height="8.8" fill="#c8c8c8"/><rect x="1691" y="326.0" width="1" height="8.4" fill="#c8c8c8"/><rect x="1689" y="325.5" width="3" height="1" fill="#c8c8c8"/><rect x="1695" y="326.0" width="1" height="8.0" fill="#c8c8c8"/><rect x="1695" y="325.5" width="3" height="1" fill="#c8c8c8"/><rect x="1699" y="326.0" width="1" height="7.6" fill="#c8c8c8"/><rect x="1703" y="326.0" width="1" height="7.2" fill="#c8c8c8"/><rect x="1701" y="325.5" width="3" height="1" fill="#c8c8c8"/><rect x="1707" y="326.0" width="1" height="6.9" fill="#c8c8c8"/><rect x="1707" y="325.5" width="3" height="1" fill="#c8c8c8"/><rect x="1711" y="326.0" width="1" height="6.9" fill="#c8c8c8"/><polyline points="1119.0,311.5 1147.5,313.9 1171.2,321.0 1195.0,327.0 1218.7,332.2 1242.4,325.8 1266.2,317.5 1289.9,311.5 1308.9,308.0 1325.5,298.5 1349.3,290.2 1365.9,289.5 1377.7,292.6 1396.7,308.0 1408.6,315.1 1432.3,321.0 1456.1,329.3 1479.8,337.7 1500.0,340.0 1509.5,341.2 1535.6,340.7 1559.3,330.5 1571.2,334.1 1585.4,345.9 1599.7,355.4 1613.9,359.0 1628.2,353.1 1651.9,343.6 1675.6,338.8 1706.5,332.9" fill="none" stroke="#e8283c" stroke-width="1" stroke-dasharray="4,3" stroke-linejoin="round"/></g>
<g clip-path="url(#csh4)"><polyline points="1119.0,406.5 1126.1,414.8 1130.9,405.3 1138.0,402.9 1145.1,412.4 1151.0,426.7 1157.0,437.4 1164.1,433.8 1171.2,425.5 1180.7,412.4 1190.2,433.8 1198.5,454.0 1206.8,436.2 1216.3,407.7 1223.4,388.7 1229.4,376.8 1237.7,374.5 1244.8,386.3 1251.9,402.9 1259.1,417.2 1263.8,407.7 1270.9,405.3 1275.7,420.7 1282.8,407.7 1289.9,388.7 1297.0,398.2 1303.0,408.9 1308.9,393.4 1316.0,376.8 1322.0,375.6 1327.9,381.6 1335.0,383.9 1342.1,391.1 1349.3,405.3 1356.4,417.2 1363.5,426.7 1370.6,448.0 1375.4,443.3 1383.7,450.4 1389.6,436.2 1399.1,414.8 1406.2,407.7 1414.5,392.3 1422.8,405.3 1430.0,406.5 1437.1,424.3 1444.2,448.0 1451.3,459.9 1460.8,454.0 1470.3,450.4 1479.8,436.2 1486.9,424.3 1494.1,436.2 1500.0,443.3 1504.7,450.4 1511.9,436.1 1519.0,407.6 1526.1,393.4 1535.6,412.4 1545.1,374.4 1549.8,378.0 1557.0,402.9 1566.5,464.6 1578.3,464.6 1585.4,459.9 1594.9,448.0 1602.1,440.9 1613.9,385.1 1623.4,393.4 1629.3,391.0 1637.6,414.8 1646.0,459.9 1656.6,450.4 1670.9,417.1 1675.6,429.0 1689.9,413.6 1697.0,417.1 1704.1,424.3" fill="none" stroke="#3cc0b4" stroke-width="1" stroke-linejoin="round"/><polyline points="1119.0,410.1 1130.9,410.1 1140.4,405.3 1152.2,417.2 1161.7,436.2 1171.2,429.1 1183.1,417.2 1195.0,429.1 1204.5,448.0 1213.9,426.7 1223.4,402.9 1232.9,381.6 1242.4,376.8 1251.9,393.4 1261.4,410.1 1270.9,410.1 1280.4,412.4 1289.9,402.9 1299.4,395.8 1308.9,402.9 1316.0,388.7 1325.5,378.0 1337.4,383.9 1346.9,395.8 1356.4,410.1 1365.9,424.3 1375.4,440.9 1384.9,448.0 1394.4,440.9 1403.9,421.9 1413.4,402.9 1422.8,398.2 1432.3,407.7 1441.8,431.4 1451.3,452.8 1460.8,457.5 1470.3,452.8 1484.6,440.9 1500.0,433.8 1500.0,443.2 1511.9,440.9 1523.7,402.9 1533.2,402.9 1547.5,381.5 1557.0,393.4 1571.2,462.2 1583.1,462.2 1594.9,450.4 1604.4,436.1 1618.7,391.0 1630.5,393.4 1642.4,431.4 1651.9,452.7 1666.1,429.0 1680.4,421.9 1689.9,417.1 1704.1,419.5" fill="none" stroke="#e8283c" stroke-width="1" stroke-dasharray="4,3" stroke-linejoin="round"/></g>
<text x="1121" y="290.5" font-size="9.5" fill="#ffffff" textLength="154" lengthAdjust="spacingAndGlyphs" stroke="#ffffff" stroke-width="0.28">MACD(12,26,9) -0.000735 -0.000979</text>
<text x="1121" y="384.5" font-size="9.5" fill="#ffffff" textLength="101.6" lengthAdjust="spacingAndGlyphs" stroke="#ffffff" stroke-width="0.28">Stoch(8,3,3) 51.44 49.67</text>
<rect x="1118.5" y="87.5" width="734" height="189" fill="none" stroke="#ffffff" stroke-width="1"/>
<rect x="1118.5" y="278.5" width="734" height="92" fill="none" stroke="#ffffff" stroke-width="1"/>
<rect x="1118.5" y="372.5" width="734" height="97" fill="none" stroke="#ffffff" stroke-width="1"/>
<line x1="1853" y1="116.5" x2="1857" y2="116.5" stroke="#ffffff" stroke-width="1"/>
<text x="1858" y="120" font-size="9.5" fill="#ffffff" textLength="32.6" lengthAdjust="spacingAndGlyphs" stroke="#ffffff" stroke-width="0.28">1.28630</text>
<line x1="1853" y1="148.5" x2="1857" y2="148.5" stroke="#ffffff" stroke-width="1"/>
<text x="1858" y="152" font-size="9.5" fill="#ffffff" textLength="32.6" lengthAdjust="spacingAndGlyphs" stroke="#ffffff" stroke-width="0.28">1.28030</text>
<line x1="1853" y1="180.5" x2="1857" y2="180.5" stroke="#ffffff" stroke-width="1"/>
<text x="1858" y="184" font-size="9.5" fill="#ffffff" textLength="32.6" lengthAdjust="spacingAndGlyphs" stroke="#ffffff" stroke-width="0.28">1.27430</text>
<line x1="1853" y1="212.5" x2="1857" y2="212.5" stroke="#ffffff" stroke-width="1"/>
<text x="1858" y="216" font-size="9.5" fill="#ffffff" textLength="32.6" lengthAdjust="spacingAndGlyphs" stroke="#ffffff" stroke-width="0.28">1.26830</text>
<line x1="1853" y1="244.5" x2="1857" y2="244.5" stroke="#ffffff" stroke-width="1"/>
<text x="1858" y="248" font-size="9.5" fill="#ffffff" textLength="32.6" lengthAdjust="spacingAndGlyphs" stroke="#ffffff" stroke-width="0.28">1.26230</text>
<rect x="1855" y="233.5" width="39" height="11" fill="#8fa3b5"/>
<text x="1858" y="243" font-size="9.5" fill="#0a0a1a" textLength="32.1" lengthAdjust="spacingAndGlyphs" stroke="#0a0a1a" stroke-width="0.28">1.26329</text>
<line x1="1853" y1="279.5" x2="1857" y2="279.5" stroke="#ffffff" stroke-width="1"/>
<text x="1858" y="287" font-size="9.5" fill="#ffffff" textLength="37.6" lengthAdjust="spacingAndGlyphs" stroke="#ffffff" stroke-width="0.28">0.005321</text>
<line x1="1853" y1="326.5" x2="1857" y2="326.5" stroke="#ffffff" stroke-width="1"/>
<text x="1858" y="330" font-size="9.5" fill="#ffffff" textLength="37.6" lengthAdjust="spacingAndGlyphs" stroke="#ffffff" stroke-width="0.28">0.000000</text>
<line x1="1853" y1="369.5" x2="1857" y2="369.5" stroke="#ffffff" stroke-width="1"/>
<text x="1858" y="368" font-size="9.5" fill="#ffffff" textLength="40.6" lengthAdjust="spacingAndGlyphs" stroke="#ffffff" stroke-width="0.28">-0.004840</text>
<line x1="1853" y1="373.5" x2="1857" y2="373.5" stroke="#ffffff" stroke-width="1"/>
<text x="1858" y="381" font-size="9.5" fill="#ffffff" textLength="27.6" lengthAdjust="spacingAndGlyphs" stroke="#ffffff" stroke-width="0.28">100.00</text>
<line x1="1853" y1="391.5" x2="1857" y2="391.5" stroke="#ffffff" stroke-width="1"/>
<text x="1858" y="395" font-size="9.5" fill="#ffffff" textLength="22.6" lengthAdjust="spacingAndGlyphs" stroke="#ffffff" stroke-width="0.28">80.00</text>
<line x1="1853" y1="450.5" x2="1857" y2="450.5" stroke="#ffffff" stroke-width="1"/>
<text x="1858" y="454" font-size="9.5" fill="#ffffff" textLength="22.6" lengthAdjust="spacingAndGlyphs" stroke="#ffffff" stroke-width="0.28">20.00</text>
<line x1="1853" y1="468.5" x2="1857" y2="468.5" stroke="#ffffff" stroke-width="1"/>
<text x="1858" y="467" font-size="9.5" fill="#ffffff" textLength="17.6" lengthAdjust="spacingAndGlyphs" stroke="#ffffff" stroke-width="0.28">0.00</text>
<line x1="1118.5" y1="469" x2="1118.5" y2="474" stroke="#ffffff" stroke-width="1"/>
<text x="1118" y="482" font-size="9.5" fill="#ffffff" textLength="51.2" lengthAdjust="spacingAndGlyphs" stroke="#ffffff" stroke-width="0.28">26 Feb 2024</text>
<line x1="1182.5" y1="469" x2="1182.5" y2="474" stroke="#ffffff" stroke-width="1"/>
<text x="1182" y="482" font-size="9.5" fill="#ffffff" textLength="53.7" lengthAdjust="spacingAndGlyphs" stroke="#ffffff" stroke-width="0.28">29 Feb 08:00</text>
<line x1="1246.5" y1="469" x2="1246.5" y2="474" stroke="#ffffff" stroke-width="1"/>
<text x="1246" y="482" font-size="9.5" fill="#ffffff" textLength="48.7" lengthAdjust="spacingAndGlyphs" stroke="#ffffff" stroke-width="0.28">4 Mar 20:00</text>
<line x1="1310.5" y1="469" x2="1310.5" y2="474" stroke="#ffffff" stroke-width="1"/>
<text x="1310" y="482" font-size="9.5" fill="#ffffff" textLength="48.7" lengthAdjust="spacingAndGlyphs" stroke="#ffffff" stroke-width="0.28">7 Mar 12:00</text>
<line x1="1374.5" y1="469" x2="1374.5" y2="474" stroke="#ffffff" stroke-width="1"/>
<text x="1374" y="482" font-size="9.5" fill="#ffffff" textLength="53.7" lengthAdjust="spacingAndGlyphs" stroke="#ffffff" stroke-width="0.28">12 Mar 00:00</text>
<line x1="1438.5" y1="469" x2="1438.5" y2="474" stroke="#ffffff" stroke-width="1"/>
<text x="1438" y="482" font-size="9.5" fill="#ffffff" textLength="53.7" lengthAdjust="spacingAndGlyphs" stroke="#ffffff" stroke-width="0.28">14 Mar 16:00</text>
<line x1="1502.5" y1="469" x2="1502.5" y2="474" stroke="#ffffff" stroke-width="1"/>
<text x="1502" y="482" font-size="9.5" fill="#ffffff" textLength="53.7" lengthAdjust="spacingAndGlyphs" stroke="#ffffff" stroke-width="0.28">19 Mar 04:00</text>
<line x1="1566.5" y1="469" x2="1566.5" y2="474" stroke="#ffffff" stroke-width="1"/>
<text x="1566" y="482" font-size="9.5" fill="#ffffff" textLength="53.7" lengthAdjust="spacingAndGlyphs" stroke="#ffffff" stroke-width="0.28">21 Mar 20:00</text>
<line x1="1630.5" y1="469" x2="1630.5" y2="474" stroke="#ffffff" stroke-width="1"/>
<text x="1630" y="482" font-size="9.5" fill="#ffffff" textLength="53.7" lengthAdjust="spacingAndGlyphs" stroke="#ffffff" stroke-width="0.28">26 Mar 08:00</text>
<line x1="1694.5" y1="469" x2="1694.5" y2="474" stroke="#ffffff" stroke-width="1"/>
<text x="1694" y="482" font-size="9.5" fill="#ffffff" textLength="53.7" lengthAdjust="spacingAndGlyphs" stroke="#ffffff" stroke-width="0.28">29 Mar 00:00</text>
<path d="M1702,88 L1710,88 L1706,92 Z" fill="#9aa0a6"/>
<rect x="304" y="498" width="803" height="443" fill="#f0f0f0"/>
<path d="M317.5,507 L317.5,518.5 M323.5,505 L323.5,519.5" stroke="#1ca31c" stroke-width="1.3"/>
<rect x="315.7" y="509.5" width="3.6" height="6" fill="#b5f5b5" stroke="#1ca31c" stroke-width="1.4"/>
<rect x="321.7" y="508.5" width="3.6" height="8" fill="#b5f5b5" stroke="#1ca31c" stroke-width="1.4"/>
<text x="332.7" y="516.7" font-size="12" fill="#6e6e6e" textLength="56" lengthAdjust="spacingAndGlyphs">GBPUSD,H1</text>
<line x1="1006" y1="518.5" x2="1015" y2="518.5" stroke="#9a9a9a" stroke-width="1.3"/>
<rect x="1042.5" y="510.5" width="8" height="8" fill="none" stroke="#9a9a9a" stroke-width="1.2"/>
<path d="M1078,510 L1087,519 M1087,510 L1078,519" stroke="#9a9a9a" stroke-width="1.1"/>
<rect x="309" y="527" width="791" height="1" fill="#a0a0a0"/>
<rect x="309" y="527" width="1" height="407" fill="#a0a0a0"/>
<rect x="310" y="528" width="790" height="1" fill="#696969"/>
<rect x="310" y="528" width="1" height="406" fill="#696969"/>
<rect x="309" y="934" width="792" height="1" fill="#e3e3e3"/>
<rect x="1100" y="527" width="1" height="408" fill="#e3e3e3"/>
<rect x="311" y="529" width="789" height="405" fill="#000000"/>
<defs><clipPath id="cmh1"><rect x="313.5" y="531.5" width="733" height="188"/></clipPath><clipPath id="cah1"><rect x="313.5" y="722.5" width="733" height="91"/></clipPath><clipPath id="csh1"><rect x="313.5" y="816.5" width="733" height="96"/></clipPath></defs>
<line x1="345.5" y1="532" x2="345.5" y2="720" stroke="#9a9a9a" stroke-width="1" stroke-dasharray="3,3"/>
<line x1="377.5" y1="532" x2="377.5" y2="720" stroke="#9a9a9a" stroke-width="1" stroke-dasharray="3,3"/>
<line x1="409.5" y1="532" x2="409.5" y2="720" stroke="#9a9a9a" stroke-width="1" stroke-dasharray="3,3"/>
<line x1="441.5" y1="532" x2="441.5" y2="720" stroke="#9a9a9a" stroke-width="1" stroke-dasharray="3,3"/>
<line x1="473.5" y1="532" x2="473.5" y2="720" stroke="#9a9a9a" stroke-width="1" stroke-dasharray="3,3"/>
<line x1="505.5" y1="532" x2="505.5" y2="720" stroke="#9a9a9a" stroke-width="1" stroke-dasharray="3,3"/>
<line x1="537.5" y1="532" x2="537.5" y2="720" stroke="#9a9a9a" stroke-width="1" stroke-dasharray="3,3"/>
<line x1="569.5" y1="532" x2="569.5" y2="720" stroke="#9a9a9a" stroke-width="1" stroke-dasharray="3,3"/>
<line x1="601.5" y1="532" x2="601.5" y2="720" stroke="#9a9a9a" stroke-width="1" stroke-dasharray="3,3"/>
<line x1="633.5" y1="532" x2="633.5" y2="720" stroke="#9a9a9a" stroke-width="1" stroke-dasharray="3,3"/>
<line x1="665.5" y1="532" x2="665.5" y2="720" stroke="#9a9a9a" stroke-width="1" stroke-dasharray="3,3"/>
<line x1="697.5" y1="532" x2="697.5" y2="720" stroke="#9a9a9a" stroke-width="1" stroke-dasharray="3,3"/>
<line x1="729.5" y1="532" x2="729.5" y2="720" stroke="#9a9a9a" stroke-width="1" stroke-dasharray="3,3"/>
<line x1="761.5" y1="532" x2="761.5" y2="720" stroke="#9a9a9a" stroke-width="1" stroke-dasharray="3,3"/>
<line x1="793.5" y1="532" x2="793.5" y2="720" stroke="#9a9a9a" stroke-width="1" stroke-dasharray="3,3"/>
<line x1="825.5" y1="532" x2="825.5" y2="720" stroke="#9a9a9a" stroke-width="1" stroke-dasharray="3,3"/>
<line x1="857.5" y1="532" x2="857.5" y2="720" stroke="#9a9a9a" stroke-width="1" stroke-dasharray="3,3"/>
<line x1="889.5" y1="532" x2="889.5" y2="720" stroke="#9a9a9a" stroke-width="1" stroke-dasharray="3,3"/>
<line x1="921.5" y1="532" x2="921.5" y2="720" stroke="#9a9a9a" stroke-width="1" stroke-dasharray="3,3"/>
<line x1="953.5" y1="532" x2="953.5" y2="720" stroke="#9a9a9a" stroke-width="1" stroke-dasharray="3,3"/>
<line x1="985.5" y1="532" x2="985.5" y2="720" stroke="#9a9a9a" stroke-width="1" stroke-dasharray="3,3"/>
<line x1="1017.5" y1="532" x2="1017.5" y2="720" stroke="#9a9a9a" stroke-width="1" stroke-dasharray="3,3"/>
<line x1="345.5" y1="723" x2="345.5" y2="814" stroke="#9a9a9a" stroke-width="1" stroke-dasharray="3,3"/>
<line x1="377.5" y1="723" x2="377.5" y2="814" stroke="#9a9a9a" stroke-width="1" stroke-dasharray="3,3"/>
<line x1="409.5" y1="723" x2="409.5" y2="814" stroke="#9a9a9a" stroke-width="1" stroke-dasharray="3,3"/>
<line x1="441.5" y1="723" x2="441.5" y2="814" stroke="#9a9a9a" stroke-width="1" stroke-dasharray="3,3"/>
<line x1="473.5" y1="723" x2="473.5" y2="814" stroke="#9a9a9a" stroke-width="1" stroke-dasharray="3,3"/>
<line x1="505.5" y1="723" x2="505.5" y2="814" stroke="#9a9a9a" stroke-width="1" stroke-dasharray="3,3"/>
<line x1="537.5" y1="723" x2="537.5" y2="814" stroke="#9a9a9a" stroke-width="1" stroke-dasharray="3,3"/>
<line x1="569.5" y1="723" x2="569.5" y2="814" stroke="#9a9a9a" stroke-width="1" stroke-dasharray="3,3"/>
<line x1="601.5" y1="723" x2="601.5" y2="814" stroke="#9a9a9a" stroke-width="1" stroke-dasharray="3,3"/>
<line x1="633.5" y1="723" x2="633.5" y2="814" stroke="#9a9a9a" stroke-width="1" stroke-dasharray="3,3"/>
<line x1="665.5" y1="723" x2="665.5" y2="814" stroke="#9a9a9a" stroke-width="1" stroke-dasharray="3,3"/>
<line x1="697.5" y1="723" x2="697.5" y2="814" stroke="#9a9a9a" stroke-width="1" stroke-dasharray="3,3"/>
<line x1="729.5" y1="723" x2="729.5" y2="814" stroke="#9a9a9a" stroke-width="1" stroke-dasharray="3,3"/>
<line x1="761.5" y1="723" x2="761.5" y2="814" stroke="#9a9a9a" stroke-width="1" stroke-dasharray="3,3"/>
<line x1="793.5" y1="723" x2="793.5" y2="814" stroke="#9a9a9a" stroke-width="1" stroke-dasharray="3,3"/>
<line x1="825.5" y1="723" x2="825.5" y2="814" stroke="#9a9a9a" stroke-width="1" stroke-dasharray="3,3"/>
<line x1="857.5" y1="723" x2="857.5" y2="814" stroke="#9a9a9a" stroke-width="1" stroke-dasharray="3,3"/>
<line x1="889.5" y1="723" x2="889.5" y2="814" stroke="#9a9a9a" stroke-width="1" stroke-dasharray="3,3"/>
<line x1="921.5" y1="723" x2="921.5" y2="814" stroke="#9a9a9a" stroke-width="1" stroke-dasharray="3,3"/>
<line x1="953.5" y1="723" x2="953.5" y2="814" stroke="#9a9a9a" stroke-width="1" stroke-dasharray="3,3"/>
<line x1="985.5" y1="723" x2="985.5" y2="814" stroke="#9a9a9a" stroke-width="1" stroke-dasharray="3,3"/>
<line x1="1017.5" y1="723" x2="1017.5" y2="814" stroke="#9a9a9a" stroke-width="1" stroke-dasharray="3,3"/>
<line x1="345.5" y1="817" x2="345.5" y2="913" stroke="#9a9a9a" stroke-width="1" stroke-dasharray="3,3"/>
<line x1="377.5" y1="817" x2="377.5" y2="913" stroke="#9a9a9a" stroke-width="1" stroke-dasharray="3,3"/>
<line x1="409.5" y1="817" x2="409.5" y2="913" stroke="#9a9a9a" stroke-width="1" stroke-dasharray="3,3"/>
<line x1="441.5" y1="817" x2="441.5" y2="913" stroke="#9a9a9a" stroke-width="1" stroke-dasharray="3,3"/>
<line x1="473.5" y1="817" x2="473.5" y2="913" stroke="#9a9a9a" stroke-width="1" stroke-dasharray="3,3"/>
<line x1="505.5" y1="817" x2="505.5" y2="913" stroke="#9a9a9a" stroke-width="1" stroke-dasharray="3,3"/>
<line x1="537.5" y1="817" x2="537.5" y2="913" stroke="#9a9a9a" stroke-width="1" stroke-dasharray="3,3"/>
<line x1="569.5" y1="817" x2="569.5" y2="913" stroke="#9a9a9a" stroke-width="1" stroke-dasharray="3,3"/>
<line x1="601.5" y1="817" x2="601.5" y2="913" stroke="#9a9a9a" stroke-width="1" stroke-dasharray="3,3"/>
<line x1="633.5" y1="817" x2="633.5" y2="913" stroke="#9a9a9a" stroke-width="1" stroke-dasharray="3,3"/>
<line x1="665.5" y1="817" x2="665.5" y2="913" stroke="#9a9a9a" stroke-width="1" stroke-dasharray="3,3"/>
<line x1="697.5" y1="817" x2="697.5" y2="913" stroke="#9a9a9a" stroke-width="1" stroke-dasharray="3,3"/>
<line x1="729.5" y1="817" x2="729.5" y2="913" stroke="#9a9a9a" stroke-width="1" stroke-dasharray="3,3"/>
<line x1="761.5" y1="817" x2="761.5" y2="913" stroke="#9a9a9a" stroke-width="1" stroke-dasharray="3,3"/>
<line x1="793.5" y1="817" x2="793.5" y2="913" stroke="#9a9a9a" stroke-width="1" stroke-dasharray="3,3"/>
<line x1="825.5" y1="817" x2="825.5" y2="913" stroke="#9a9a9a" stroke-width="1" stroke-dasharray="3,3"/>
<line x1="857.5" y1="817" x2="857.5" y2="913" stroke="#9a9a9a" stroke-width="1" stroke-dasharray="3,3"/>
<line x1="889.5" y1="817" x2="889.5" y2="913" stroke="#9a9a9a" stroke-width="1" stroke-dasharray="3,3"/>
<line x1="921.5" y1="817" x2="921.5" y2="913" stroke="#9a9a9a" stroke-width="1" stroke-dasharray="3,3"/>
<line x1="953.5" y1="817" x2="953.5" y2="913" stroke="#9a9a9a" stroke-width="1" stroke-dasharray="3,3"/>
<line x1="985.5" y1="817" x2="985.5" y2="913" stroke="#9a9a9a" stroke-width="1" stroke-dasharray="3,3"/>
<line x1="1017.5" y1="817" x2="1017.5" y2="913" stroke="#9a9a9a" stroke-width="1" stroke-dasharray="3,3"/>
<line x1="314" y1="560.5" x2="1047" y2="560.5" stroke="#9a9a9a" stroke-width="1" stroke-dasharray="3,3"/>
<line x1="314" y1="592.5" x2="1047" y2="592.5" stroke="#9a9a9a" stroke-width="1" stroke-dasharray="3,3"/>
<line x1="314" y1="624.5" x2="1047" y2="624.5" stroke="#9a9a9a" stroke-width="1" stroke-dasharray="3,3"/>
<line x1="314" y1="656.5" x2="1047" y2="656.5" stroke="#9a9a9a" stroke-width="1" stroke-dasharray="3,3"/>
<line x1="314" y1="688.5" x2="1047" y2="688.5" stroke="#9a9a9a" stroke-width="1" stroke-dasharray="3,3"/>
<line x1="314" y1="758.5" x2="1047" y2="758.5" stroke="#9a9a9a" stroke-width="1" stroke-dasharray="3,3"/>
<line x1="314" y1="835.5" x2="1047" y2="835.5" stroke="#9a9a9a" stroke-width="1" stroke-dasharray="3,3"/>
<line x1="314" y1="894.5" x2="1047" y2="894.5" stroke="#9a9a9a" stroke-width="1" stroke-dasharray="3,3"/>
<rect x="318.5" y="537.5" width="15" height="11" fill="#fde2dc" stroke="#c83c3c" stroke-width="1"/>
<rect x="326" y="537.5" width="7.5" height="11" fill="#bfe6fb" stroke="#2c6fa6" stroke-width="1"/>
<line x1="320.5" y1="540" x2="325" y2="540" stroke="#d84a3a" stroke-width="1.2"/>
<line x1="327.5" y1="540" x2="332" y2="540" stroke="#1f6fb0" stroke-width="1.2"/>
<line x1="320.5" y1="543" x2="325" y2="543" stroke="#d84a3a" stroke-width="1.2"/>
<line x1="327.5" y1="543" x2="332" y2="543" stroke="#1f6fb0" stroke-width="1.2"/>
<line x1="320.5" y1="546" x2="325" y2="546" stroke="#d84a3a" stroke-width="1.2"/>
<line x1="327.5" y1="546" x2="332" y2="546" stroke="#1f6fb0" stroke-width="1.2"/>
<text x="339" y="545.6" font-size="9.5" fill="#ffffff" textLength="203" lengthAdjust="spacingAndGlyphs" stroke="#ffffff" stroke-width="0.28">GBPUSD, H1:  Great Britain Pound vs US Dollar</text>
<line x1="314" y1="667.5" x2="1047" y2="667.5" stroke="#a0a0a0" stroke-width="1"/>
<g clip-path="url(#cmh1)"><rect x="315" y="550.9" width="1" height="7.7" fill="#4ee44e"/><rect x="314" y="555.6" width="3" height="1.2" fill="#4ee44e"/><rect x="319" y="547.2" width="1" height="35.9" fill="#4ee44e"/><rect x="318.5" y="556.1" width="2" height="14.6" fill="#a8f5a8" stroke="#4ee44e" stroke-width="1"/><rect x="323" y="565.5" width="1" height="24.2" fill="#4ee44e"/><rect x="322.5" y="570.9" width="2" height="13.4" fill="#a8f5a8" stroke="#4ee44e" stroke-width="1"/><rect x="327" y="580.9" width="1" height="18.1" fill="#4ee44e"/><rect x="326.5" y="584.5" width="2" height="12.7" fill="#a8f5a8" stroke="#4ee44e" stroke-width="1"/><rect x="331" y="594.9" width="1" height="23.4" fill="#4ee44e"/><rect x="330.5" y="598.1" width="2" height="15.3" fill="#a8f5a8" stroke="#4ee44e" stroke-width="1"/><rect x="335" y="611.4" width="1" height="25.1" fill="#4ee44e"/><rect x="334.5" y="614.7" width="2" height="19.2" fill="#a8f5a8" stroke="#4ee44e" stroke-width="1"/><rect x="339" y="632.4" width="1" height="21.8" fill="#4ee44e"/><rect x="338.5" y="635.2" width="2" height="9.1" fill="#a8f5a8" stroke="#4ee44e" stroke-width="1"/><rect x="343" y="642.4" width="1" height="12.0" fill="#4ee44e"/><rect x="342" y="644.9" width="3" height="1.2" fill="#4ee44e"/><rect x="347" y="633.2" width="1" height="20.0" fill="#4ee44e"/><rect x="346.5" y="645.4" width="2" height="4.7" fill="#a8f5a8" stroke="#4ee44e" stroke-width="1"/><rect x="351" y="644.8" width="1" height="14.4" fill="#4ee44e"/><rect x="350.5" y="647.7" width="2" height="1.8" fill="#000" stroke="#4ee44e" stroke-width="1"/><rect x="355" y="642.0" width="1" height="6.2" fill="#4ee44e"/><rect x="354" y="646.1" width="3" height="1.2" fill="#4ee44e"/><rect x="359" y="639.0" width="1" height="11.1" fill="#4ee44e"/><rect x="358" y="646.0" width="3" height="1.2" fill="#4ee44e"/><rect x="363" y="640.2" width="1" height="8.8" fill="#4ee44e"/><rect x="362.5" y="644.9" width="2" height="1.4" fill="#000" stroke="#4ee44e" stroke-width="1"/><rect x="367" y="637.0" width="1" height="9.4" fill="#4ee44e"/><rect x="366.5" y="641.0" width="2" height="3.4" fill="#000" stroke="#4ee44e" stroke-width="1"/><rect x="371" y="630.4" width="1" height="12.7" fill="#4ee44e"/><rect x="370.5" y="636.8" width="2" height="3.7" fill="#000" stroke="#4ee44e" stroke-width="1"/><rect x="375" y="634.0" width="1" height="15.7" fill="#4ee44e"/><rect x="374.5" y="637.0" width="2" height="9.4" fill="#a8f5a8" stroke="#4ee44e" stroke-width="1"/><rect x="379" y="645.7" width="1" height="14.5" fill="#4ee44e"/><rect x="378.5" y="648.0" width="2" height="10.2" fill="#a8f5a8" stroke="#4ee44e" stroke-width="1"/><rect x="383" y="654.2" width="1" height="10.6" fill="#4ee44e"/><rect x="382.5" y="658.6" width="2" height="0.8" fill="#a8f5a8" stroke="#4ee44e" stroke-width="1"/><rect x="387" y="648.7" width="1" height="15.2" fill="#4ee44e"/><rect x="386.5" y="660.6" width="2" height="1.3" fill="#a8f5a8" stroke="#4ee44e" stroke-width="1"/><rect x="391" y="657.7" width="1" height="8.8" fill="#4ee44e"/><rect x="390" y="662.0" width="3" height="1.2" fill="#4ee44e"/><rect x="395" y="660.5" width="1" height="15.2" fill="#4ee44e"/><rect x="394.5" y="663.0" width="2" height="9.1" fill="#a8f5a8" stroke="#4ee44e" stroke-width="1"/><rect x="399" y="671.4" width="1" height="10.7" fill="#4ee44e"/><rect x="398.5" y="673.7" width="2" height="6.8" fill="#a8f5a8" stroke="#4ee44e" stroke-width="1"/><rect x="403" y="678.0" width="1" height="15.8" fill="#4ee44e"/><rect x="402.5" y="681.0" width="2" height="9.1" fill="#a8f5a8" stroke="#4ee44e" stroke-width="1"/><rect x="407" y="687.7" width="1" height="18.2" fill="#4ee44e"/><rect x="406.5" y="691.8" width="2" height="9.8" fill="#a8f5a8" stroke="#4ee44e" stroke-width="1"/><rect x="411" y="696.7" width="1" height="16.9" fill="#4ee44e"/><rect x="410.5" y="701.8" width="2" height="0.7" fill="#a8f5a8" stroke="#4ee44e" stroke-width="1"/><rect x="415" y="693.4" width="1" height="15.0" fill="#4ee44e"/><rect x="414" y="702.0" width="3" height="1.2" fill="#4ee44e"/><rect x="419" y="686.5" width="1" height="20.0" fill="#4ee44e"/><rect x="418.5" y="690.8" width="2" height="11.1" fill="#000" stroke="#4ee44e" stroke-width="1"/><rect x="423" y="677.3" width="1" height="16.3" fill="#4ee44e"/><rect x="422.5" y="682.3" width="2" height="8.2" fill="#000" stroke="#4ee44e" stroke-width="1"/><rect x="427" y="679.4" width="1" height="17.5" fill="#4ee44e"/><rect x="426.5" y="682.5" width="2" height="3.8" fill="#a8f5a8" stroke="#4ee44e" stroke-width="1"/><rect x="431" y="683.4" width="1" height="13.9" fill="#4ee44e"/><rect x="430.5" y="687.8" width="2" height="6.5" fill="#a8f5a8" stroke="#4ee44e" stroke-width="1"/><rect x="435" y="687.3" width="1" height="12.0" fill="#4ee44e"/><rect x="434" y="695.2" width="3" height="1.2" fill="#4ee44e"/><rect x="439" y="692.6" width="1" height="8.1" fill="#4ee44e"/><rect x="438.5" y="696.1" width="2" height="0.6" fill="#a8f5a8" stroke="#4ee44e" stroke-width="1"/><rect x="443" y="693.0" width="1" height="5.7" fill="#4ee44e"/><rect x="442" y="696.8" width="3" height="1.2" fill="#4ee44e"/><rect x="447" y="692.1" width="1" height="9.1" fill="#4ee44e"/><rect x="446.5" y="697.2" width="2" height="1.2" fill="#a8f5a8" stroke="#4ee44e" stroke-width="1"/><rect x="451" y="693.2" width="1" height="10.7" fill="#4ee44e"/><rect x="450.5" y="698.4" width="2" height="0.5" fill="#000" stroke="#4ee44e" stroke-width="1"/><rect x="455" y="692.8" width="1" height="8.9" fill="#4ee44e"/><rect x="454.5" y="696.3" width="2" height="0.5" fill="#000" stroke="#4ee44e" stroke-width="1"/><rect x="459" y="693.7" width="1" height="7.3" fill="#4ee44e"/><rect x="458.5" y="695.9" width="2" height="1.8" fill="#a8f5a8" stroke="#4ee44e" stroke-width="1"/><rect x="463" y="692.5" width="1" height="8.2" fill="#4ee44e"/><rect x="462.5" y="695.9" width="2" height="2.0" fill="#000" stroke="#4ee44e" stroke-width="1"/><rect x="467" y="683.1" width="1" height="16.1" fill="#4ee44e"/><rect x="466.5" y="692.0" width="2" height="2.3" fill="#000" stroke="#4ee44e" stroke-width="1"/><rect x="471" y="683.2" width="1" height="18.2" fill="#4ee44e"/><rect x="470.5" y="684.8" width="2" height="6.6" fill="#000" stroke="#4ee44e" stroke-width="1"/><rect x="475" y="680.5" width="1" height="6.8" fill="#4ee44e"/><rect x="474.5" y="682.2" width="2" height="1.1" fill="#000" stroke="#4ee44e" stroke-width="1"/><rect x="479" y="677.3" width="1" height="13.8" fill="#4ee44e"/><rect x="478.5" y="682.7" width="2" height="4.2" fill="#a8f5a8" stroke="#4ee44e" stroke-width="1"/><rect x="483" y="681.0" width="1" height="9.4" fill="#4ee44e"/><rect x="482.5" y="684.4" width="2" height="1.6" fill="#000" stroke="#4ee44e" stroke-width="1"/><rect x="487" y="681.1" width="1" height="6.8" fill="#4ee44e"/><rect x="486" y="684.2" width="3" height="1.2" fill="#4ee44e"/><rect x="491" y="683.8" width="1" height="9.3" fill="#4ee44e"/><rect x="490.5" y="685.6" width="2" height="2.2" fill="#a8f5a8" stroke="#4ee44e" stroke-width="1"/><rect x="495" y="683.4" width="1" height="7.6" fill="#4ee44e"/><rect x="494" y="688.1" width="3" height="1.2" fill="#4ee44e"/><rect x="499" y="685.3" width="1" height="7.0" fill="#4ee44e"/><rect x="498" y="688.2" width="3" height="1.2" fill="#4ee44e"/><rect x="503" y="678.6" width="1" height="11.7" fill="#4ee44e"/><rect x="502.5" y="683.0" width="2" height="5.0" fill="#000" stroke="#4ee44e" stroke-width="1"/><rect x="507" y="671.3" width="1" height="13.5" fill="#4ee44e"/><rect x="506.5" y="676.0" width="2" height="6.0" fill="#000" stroke="#4ee44e" stroke-width="1"/><rect x="511" y="660.7" width="1" height="17.3" fill="#4ee44e"/><rect x="510.5" y="664.0" width="2" height="10.4" fill="#000" stroke="#4ee44e" stroke-width="1"/><rect x="515" y="654.8" width="1" height="13.4" fill="#4ee44e"/><rect x="514.5" y="656.5" width="2" height="6.9" fill="#000" stroke="#4ee44e" stroke-width="1"/><rect x="519" y="653.9" width="1" height="8.1" fill="#4ee44e"/><rect x="518.5" y="655.9" width="2" height="2.4" fill="#a8f5a8" stroke="#4ee44e" stroke-width="1"/><rect x="523" y="651.4" width="1" height="13.0" fill="#4ee44e"/><rect x="522" y="658.7" width="3" height="1.2" fill="#4ee44e"/><rect x="527" y="654.6" width="1" height="7.6" fill="#4ee44e"/><rect x="526" y="658.2" width="3" height="1.2" fill="#4ee44e"/><rect x="531" y="653.6" width="1" height="10.5" fill="#4ee44e"/><rect x="530.5" y="658.5" width="2" height="0.5" fill="#a8f5a8" stroke="#4ee44e" stroke-width="1"/><rect x="535" y="656.2" width="1" height="10.3" fill="#4ee44e"/><rect x="534.5" y="660.0" width="2" height="4.2" fill="#a8f5a8" stroke="#4ee44e" stroke-width="1"/><rect x="539" y="658.4" width="1" height="8.6" fill="#4ee44e"/><rect x="538" y="663.3" width="3" height="1.2" fill="#4ee44e"/><rect x="543" y="659.5" width="1" height="5.6" fill="#4ee44e"/><rect x="542" y="663.3" width="3" height="1.2" fill="#4ee44e"/><rect x="547" y="662.4" width="1" height="7.6" fill="#4ee44e"/><rect x="546.5" y="665.0" width="2" height="1.6" fill="#a8f5a8" stroke="#4ee44e" stroke-width="1"/><rect x="551" y="663.6" width="1" height="6.4" fill="#4ee44e"/><rect x="550" y="666.6" width="3" height="1.2" fill="#4ee44e"/><rect x="555" y="661.8" width="1" height="5.8" fill="#4ee44e"/><rect x="554" y="666.0" width="3" height="1.2" fill="#4ee44e"/><rect x="559" y="653.9" width="1" height="15.9" fill="#4ee44e"/><rect x="558.5" y="664.2" width="2" height="1.6" fill="#000" stroke="#4ee44e" stroke-width="1"/><rect x="563" y="659.2" width="1" height="7.2" fill="#4ee44e"/><rect x="562.5" y="661.5" width="2" height="1.3" fill="#000" stroke="#4ee44e" stroke-width="1"/><rect x="567" y="658.1" width="1" height="4.8" fill="#4ee44e"/><rect x="566" y="659.7" width="3" height="1.2" fill="#4ee44e"/><rect x="571" y="656.8" width="1" height="8.4" fill="#4ee44e"/><rect x="570" y="660.3" width="3" height="1.2" fill="#4ee44e"/><rect x="575" y="659.1" width="1" height="7.0" fill="#4ee44e"/><rect x="574.5" y="661.9" width="2" height="1.5" fill="#a8f5a8" stroke="#4ee44e" stroke-width="1"/><rect x="579" y="662.2" width="1" height="4.3" fill="#4ee44e"/><rect x="578" y="663.7" width="3" height="1.2" fill="#4ee44e"/><rect x="583" y="652.6" width="1" height="15.8" fill="#4ee44e"/><rect x="582.5" y="655.8" width="2" height="8.0" fill="#000" stroke="#4ee44e" stroke-width="1"/><rect x="587" y="651.9" width="1" height="6.4" fill="#4ee44e"/><rect x="586" y="653.7" width="3" height="1.2" fill="#4ee44e"/><rect x="591" y="645.3" width="1" height="11.4" fill="#4ee44e"/><rect x="590.5" y="649.8" width="2" height="3.3" fill="#000" stroke="#4ee44e" stroke-width="1"/><rect x="595" y="646.7" width="1" height="5.2" fill="#4ee44e"/><rect x="594" y="647.8" width="3" height="1.2" fill="#4ee44e"/><rect x="599" y="644.5" width="1" height="7.2" fill="#4ee44e"/><rect x="598" y="646.3" width="3" height="1.2" fill="#4ee44e"/><rect x="603" y="640.8" width="1" height="7.9" fill="#4ee44e"/><rect x="602" y="645.6" width="3" height="1.2" fill="#4ee44e"/><rect x="607" y="635.9" width="1" height="19.1" fill="#4ee44e"/><rect x="606.5" y="646.3" width="2" height="4.7" fill="#a8f5a8" stroke="#4ee44e" stroke-width="1"/><rect x="611" y="647.5" width="1" height="11.3" fill="#4ee44e"/><rect x="610.5" y="652.0" width="2" height="3.7" fill="#a8f5a8" stroke="#4ee44e" stroke-width="1"/><rect x="615" y="650.8" width="1" height="15.7" fill="#4ee44e"/><rect x="614.5" y="655.9" width="2" height="5.9" fill="#a8f5a8" stroke="#4ee44e" stroke-width="1"/><rect x="619" y="658.7" width="1" height="11.3" fill="#4ee44e"/><rect x="618.5" y="662.6" width="2" height="3.9" fill="#a8f5a8" stroke="#4ee44e" stroke-width="1"/><rect x="623" y="662.7" width="1" height="9.1" fill="#4ee44e"/><rect x="622" y="666.6" width="3" height="1.2" fill="#4ee44e"/><rect x="627" y="663.5" width="1" height="12.7" fill="#4ee44e"/><rect x="626.5" y="667.8" width="2" height="3.8" fill="#a8f5a8" stroke="#4ee44e" stroke-width="1"/><rect x="631" y="663.9" width="1" height="11.3" fill="#4ee44e"/><rect x="630" y="671.4" width="3" height="1.2" fill="#4ee44e"/><rect x="635" y="667.1" width="1" height="9.4" fill="#4ee44e"/><rect x="634" y="671.9" width="3" height="1.2" fill="#4ee44e"/><rect x="639" y="669.9" width="1" height="8.0" fill="#4ee44e"/><rect x="638" y="672.5" width="3" height="1.2" fill="#4ee44e"/><rect x="643" y="672.2" width="1" height="5.0" fill="#4ee44e"/><rect x="642" y="673.2" width="3" height="1.2" fill="#4ee44e"/><rect x="647" y="664.2" width="1" height="11.3" fill="#4ee44e"/><rect x="646.5" y="671.0" width="2" height="1.5" fill="#000" stroke="#4ee44e" stroke-width="1"/><rect x="651" y="665.2" width="1" height="8.5" fill="#4ee44e"/><rect x="650" y="670.1" width="3" height="1.2" fill="#4ee44e"/><rect x="655" y="657.4" width="1" height="20.5" fill="#4ee44e"/><rect x="654.5" y="669.9" width="2" height="3.5" fill="#a8f5a8" stroke="#4ee44e" stroke-width="1"/><rect x="659" y="661.7" width="1" height="16.3" fill="#4ee44e"/><rect x="658" y="673.4" width="3" height="1.2" fill="#4ee44e"/><rect x="663" y="672.3" width="1" height="9.8" fill="#4ee44e"/><rect x="662.5" y="675.2" width="2" height="4.2" fill="#a8f5a8" stroke="#4ee44e" stroke-width="1"/><rect x="667" y="677.5" width="1" height="7.7" fill="#4ee44e"/><rect x="666" y="679.7" width="3" height="1.2" fill="#4ee44e"/><rect x="671" y="666.0" width="1" height="21.3" fill="#4ee44e"/><rect x="670.5" y="680.0" width="2" height="2.8" fill="#a8f5a8" stroke="#4ee44e" stroke-width="1"/><rect x="675" y="675.6" width="1" height="11.3" fill="#4ee44e"/><rect x="674.5" y="678.8" width="2" height="4.7" fill="#000" stroke="#4ee44e" stroke-width="1"/><rect x="679" y="675.1" width="1" height="7.4" fill="#4ee44e"/><rect x="678" y="679.0" width="3" height="1.2" fill="#4ee44e"/><rect x="683" y="671.7" width="1" height="16.4" fill="#4ee44e"/><rect x="682.5" y="675.6" width="2" height="2.9" fill="#000" stroke="#4ee44e" stroke-width="1"/><rect x="687" y="667.1" width="1" height="10.8" fill="#4ee44e"/><rect x="686.5" y="671.2" width="2" height="3.3" fill="#000" stroke="#4ee44e" stroke-width="1"/><rect x="691" y="668.0" width="1" height="8.2" fill="#4ee44e"/><rect x="690" y="671.2" width="3" height="1.2" fill="#4ee44e"/><rect x="695" y="664.0" width="1" height="10.7" fill="#4ee44e"/><rect x="694.5" y="669.1" width="2" height="1.0" fill="#000" stroke="#4ee44e" stroke-width="1"/><rect x="699" y="664.0" width="1" height="8.2" fill="#4ee44e"/><rect x="698.5" y="667.8" width="2" height="0.6" fill="#000" stroke="#4ee44e" stroke-width="1"/><rect x="703" y="662.0" width="1" height="20.7" fill="#4ee44e"/><rect x="702.5" y="667.4" width="2" height="6.8" fill="#a8f5a8" stroke="#4ee44e" stroke-width="1"/><rect x="707" y="671.1" width="1" height="12.7" fill="#4ee44e"/><rect x="706.5" y="675.1" width="2" height="3.3" fill="#a8f5a8" stroke="#4ee44e" stroke-width="1"/><rect x="711" y="675.3" width="1" height="6.2" fill="#4ee44e"/><rect x="710" y="678.8" width="3" height="1.2" fill="#4ee44e"/><rect x="715" y="660.8" width="1" height="19.7" fill="#4ee44e"/><rect x="714.5" y="673.5" width="2" height="5.1" fill="#000" stroke="#4ee44e" stroke-width="1"/><rect x="719" y="669.1" width="1" height="5.6" fill="#4ee44e"/><rect x="718" y="671.8" width="3" height="1.2" fill="#4ee44e"/><rect x="723" y="667.7" width="1" height="8.0" fill="#4ee44e"/><rect x="722.5" y="670.5" width="2" height="1.5" fill="#000" stroke="#4ee44e" stroke-width="1"/><rect x="727" y="662.9" width="1" height="11.4" fill="#4ee44e"/><rect x="726.5" y="668.3" width="2" height="1.1" fill="#000" stroke="#4ee44e" stroke-width="1"/><rect x="731" y="659.1" width="1" height="13.0" fill="#4ee44e"/><rect x="730.5" y="666.1" width="2" height="1.4" fill="#000" stroke="#4ee44e" stroke-width="1"/><rect x="735" y="656.6" width="1" height="12.4" fill="#4ee44e"/><rect x="734.5" y="661.0" width="2" height="3.8" fill="#000" stroke="#4ee44e" stroke-width="1"/><rect x="739" y="658.4" width="1" height="5.3" fill="#4ee44e"/><rect x="738" y="660.9" width="3" height="1.2" fill="#4ee44e"/><rect x="743" y="658.4" width="1" height="11.6" fill="#4ee44e"/><rect x="742.5" y="663.5" width="2" height="3.2" fill="#a8f5a8" stroke="#4ee44e" stroke-width="1"/><rect x="747" y="662.3" width="1" height="15.9" fill="#4ee44e"/><rect x="746.5" y="667.6" width="2" height="5.6" fill="#a8f5a8" stroke="#4ee44e" stroke-width="1"/><rect x="751" y="670.8" width="1" height="8.3" fill="#4ee44e"/><rect x="750.5" y="673.9" width="2" height="2.2" fill="#a8f5a8" stroke="#4ee44e" stroke-width="1"/><rect x="755" y="672.0" width="1" height="7.9" fill="#4ee44e"/><rect x="754" y="676.4" width="3" height="1.2" fill="#4ee44e"/><rect x="759" y="673.1" width="1" height="5.9" fill="#4ee44e"/><rect x="758.5" y="674.7" width="2" height="0.8" fill="#000" stroke="#4ee44e" stroke-width="1"/><rect x="763" y="669.2" width="1" height="6.5" fill="#4ee44e"/><rect x="762" y="673.4" width="3" height="1.2" fill="#4ee44e"/><rect x="767" y="655.7" width="1" height="21.7" fill="#4ee44e"/><rect x="766.5" y="667.0" width="2" height="5.3" fill="#000" stroke="#4ee44e" stroke-width="1"/><rect x="771" y="664.7" width="1" height="6.5" fill="#4ee44e"/><rect x="770.5" y="667.2" width="2" height="1.7" fill="#a8f5a8" stroke="#4ee44e" stroke-width="1"/><rect x="775" y="666.8" width="1" height="9.2" fill="#4ee44e"/><rect x="774.5" y="669.7" width="2" height="0.9" fill="#a8f5a8" stroke="#4ee44e" stroke-width="1"/><rect x="779" y="667.7" width="1" height="10.7" fill="#4ee44e"/><rect x="778.5" y="672.0" width="2" height="1.2" fill="#a8f5a8" stroke="#4ee44e" stroke-width="1"/><rect x="783" y="670.0" width="1" height="13.8" fill="#4ee44e"/><rect x="782.5" y="674.7" width="2" height="4.2" fill="#a8f5a8" stroke="#4ee44e" stroke-width="1"/><rect x="787" y="675.7" width="1" height="13.2" fill="#4ee44e"/><rect x="786.5" y="680.0" width="2" height="4.1" fill="#a8f5a8" stroke="#4ee44e" stroke-width="1"/><rect x="791" y="680.1" width="1" height="11.7" fill="#4ee44e"/><rect x="790.5" y="685.5" width="2" height="3.2" fill="#a8f5a8" stroke="#4ee44e" stroke-width="1"/><rect x="795" y="684.1" width="1" height="13.2" fill="#4ee44e"/><rect x="794" y="689.0" width="3" height="1.2" fill="#4ee44e"/><rect x="799" y="678.2" width="1" height="13.3" fill="#4ee44e"/><rect x="798.5" y="680.0" width="2" height="8.2" fill="#000" stroke="#4ee44e" stroke-width="1"/><rect x="803" y="658.4" width="1" height="22.3" fill="#4ee44e"/><rect x="802.5" y="660.6" width="2" height="17.7" fill="#000" stroke="#4ee44e" stroke-width="1"/><rect x="807" y="656.7" width="1" height="5.2" fill="#4ee44e"/><rect x="806" y="658.4" width="3" height="1.2" fill="#4ee44e"/><rect x="811" y="654.2" width="1" height="9.3" fill="#4ee44e"/><rect x="810.5" y="659.0" width="2" height="1.1" fill="#a8f5a8" stroke="#4ee44e" stroke-width="1"/><rect x="815" y="657.1" width="1" height="16.1" fill="#4ee44e"/><rect x="814.5" y="660.8" width="2" height="7.1" fill="#a8f5a8" stroke="#4ee44e" stroke-width="1"/><rect x="819" y="661.4" width="1" height="10.3" fill="#4ee44e"/><rect x="818.5" y="666.1" width="2" height="2.5" fill="#000" stroke="#4ee44e" stroke-width="1"/><rect x="823" y="656.9" width="1" height="14.9" fill="#4ee44e"/><rect x="822.5" y="666.9" width="2" height="2.5" fill="#a8f5a8" stroke="#4ee44e" stroke-width="1"/><rect x="827" y="666.8" width="1" height="11.3" fill="#4ee44e"/><rect x="826.5" y="670.8" width="2" height="5.2" fill="#a8f5a8" stroke="#4ee44e" stroke-width="1"/><rect x="831" y="670.5" width="1" height="10.1" fill="#4ee44e"/><rect x="830.5" y="674.1" width="2" height="2.5" fill="#000" stroke="#4ee44e" stroke-width="1"/><rect x="835" y="668.9" width="1" height="7.9" fill="#4ee44e"/><rect x="834.5" y="673.5" width="2" height="1.8" fill="#a8f5a8" stroke="#4ee44e" stroke-width="1"/><rect x="839" y="667.2" width="1" height="14.0" fill="#4ee44e"/><rect x="838.5" y="675.6" width="2" height="1.2" fill="#a8f5a8" stroke="#4ee44e" stroke-width="1"/><rect x="843" y="673.1" width="1" height="6.9" fill="#4ee44e"/><rect x="842" y="677.5" width="3" height="1.2" fill="#4ee44e"/><rect x="847" y="672.8" width="1" height="6.4" fill="#4ee44e"/><rect x="846" y="677.1" width="3" height="1.2" fill="#4ee44e"/><rect x="851" y="665.9" width="1" height="14.2" fill="#4ee44e"/><rect x="850.5" y="673.5" width="2" height="3.9" fill="#000" stroke="#4ee44e" stroke-width="1"/><rect x="855" y="669.0" width="1" height="9.5" fill="#4ee44e"/><rect x="854.5" y="673.3" width="2" height="3.3" fill="#a8f5a8" stroke="#4ee44e" stroke-width="1"/><rect x="859" y="674.0" width="1" height="5.8" fill="#4ee44e"/><rect x="858" y="677.6" width="3" height="1.2" fill="#4ee44e"/><rect x="863" y="671.2" width="1" height="8.6" fill="#4ee44e"/><rect x="862.5" y="674.5" width="2" height="3.8" fill="#000" stroke="#4ee44e" stroke-width="1"/><rect x="867" y="671.9" width="1" height="4.8" fill="#4ee44e"/><rect x="866" y="674.1" width="3" height="1.2" fill="#4ee44e"/><rect x="871" y="670.2" width="1" height="7.2" fill="#4ee44e"/><rect x="870.5" y="674.4" width="2" height="0.5" fill="#a8f5a8" stroke="#4ee44e" stroke-width="1"/><rect x="875" y="672.5" width="1" height="7.5" fill="#4ee44e"/><rect x="874" y="675.8" width="3" height="1.2" fill="#4ee44e"/><rect x="879" y="672.4" width="1" height="6.5" fill="#4ee44e"/><rect x="878" y="673.8" width="3" height="1.2" fill="#4ee44e"/><rect x="883" y="670.9" width="1" height="5.7" fill="#4ee44e"/><rect x="882" y="674.3" width="3" height="1.2" fill="#4ee44e"/><rect x="887" y="673.8" width="1" height="7.5" fill="#4ee44e"/><rect x="886.5" y="675.6" width="2" height="0.5" fill="#a8f5a8" stroke="#4ee44e" stroke-width="1"/><rect x="891" y="672.8" width="1" height="13.4" fill="#4ee44e"/><rect x="890.5" y="677.5" width="2" height="5.6" fill="#a8f5a8" stroke="#4ee44e" stroke-width="1"/><rect x="895" y="674.7" width="1" height="13.7" fill="#4ee44e"/><rect x="894.5" y="679.0" width="2" height="3.9" fill="#000" stroke="#4ee44e" stroke-width="1"/><rect x="899" y="670.7" width="1" height="14.7" fill="#4ee44e"/><rect x="898.5" y="673.5" width="2" height="3.8" fill="#000" stroke="#4ee44e" stroke-width="1"/><rect x="903" y="664.2" width="1" height="12.7" fill="#4ee44e"/><rect x="902.5" y="669.0" width="2" height="4.0" fill="#000" stroke="#4ee44e" stroke-width="1"/></g>
<g clip-path="url(#cah1)"><rect x="315" y="743.8" width="1" height="14.2" fill="#b8b8b8"/><rect x="315" y="757.5" width="3" height="1" fill="#b8b8b8"/><rect x="319" y="746.9" width="1" height="11.1" fill="#b8b8b8"/><rect x="323" y="750.9" width="1" height="7.1" fill="#b8b8b8"/><rect x="321" y="757.5" width="3" height="1" fill="#b8b8b8"/><rect x="327" y="756.5" width="1" height="1.5" fill="#b8b8b8"/><rect x="327" y="757.5" width="3" height="1" fill="#b8b8b8"/><rect x="331" y="758.0" width="1" height="10.3" fill="#b8b8b8"/><rect x="335" y="758.0" width="1" height="17.7" fill="#b8b8b8"/><rect x="333" y="757.5" width="3" height="1" fill="#b8b8b8"/><rect x="339" y="758.0" width="1" height="24.3" fill="#b8b8b8"/><rect x="339" y="757.5" width="3" height="1" fill="#b8b8b8"/><rect x="343" y="758.0" width="1" height="30.3" fill="#b8b8b8"/><rect x="347" y="758.0" width="1" height="34.5" fill="#b8b8b8"/><rect x="345" y="757.5" width="3" height="1" fill="#b8b8b8"/><rect x="351" y="758.0" width="1" height="37.1" fill="#b8b8b8"/><rect x="351" y="757.5" width="3" height="1" fill="#b8b8b8"/><rect x="355" y="758.0" width="1" height="38.6" fill="#b8b8b8"/><rect x="359" y="758.0" width="1" height="39.1" fill="#b8b8b8"/><rect x="357" y="757.5" width="3" height="1" fill="#b8b8b8"/><rect x="363" y="758.0" width="1" height="39.6" fill="#b8b8b8"/><rect x="363" y="757.5" width="3" height="1" fill="#b8b8b8"/><rect x="367" y="758.0" width="1" height="39.6" fill="#b8b8b8"/><rect x="371" y="758.0" width="1" height="39.6" fill="#b8b8b8"/><rect x="369" y="757.5" width="3" height="1" fill="#b8b8b8"/><rect x="375" y="758.0" width="1" height="39.7" fill="#b8b8b8"/><rect x="375" y="757.5" width="3" height="1" fill="#b8b8b8"/><rect x="379" y="758.0" width="1" height="40.1" fill="#b8b8b8"/><rect x="383" y="758.0" width="1" height="40.5" fill="#b8b8b8"/><rect x="381" y="757.5" width="3" height="1" fill="#b8b8b8"/><rect x="387" y="758.0" width="1" height="40.9" fill="#b8b8b8"/><rect x="387" y="757.5" width="3" height="1" fill="#b8b8b8"/><rect x="391" y="758.0" width="1" height="41.3" fill="#b8b8b8"/><rect x="395" y="758.0" width="1" height="41.7" fill="#b8b8b8"/><rect x="393" y="757.5" width="3" height="1" fill="#b8b8b8"/><rect x="399" y="758.0" width="1" height="42.1" fill="#b8b8b8"/><rect x="399" y="757.5" width="3" height="1" fill="#b8b8b8"/><rect x="403" y="758.0" width="1" height="43.8" fill="#b8b8b8"/><rect x="407" y="758.0" width="1" height="45.8" fill="#b8b8b8"/><rect x="405" y="757.5" width="3" height="1" fill="#b8b8b8"/><rect x="411" y="758.0" width="1" height="47.3" fill="#b8b8b8"/><rect x="411" y="757.5" width="3" height="1" fill="#b8b8b8"/><rect x="415" y="758.0" width="1" height="46.3" fill="#b8b8b8"/><rect x="419" y="758.0" width="1" height="45.3" fill="#b8b8b8"/><rect x="417" y="757.5" width="3" height="1" fill="#b8b8b8"/><rect x="423" y="758.0" width="1" height="44.1" fill="#b8b8b8"/><rect x="423" y="757.5" width="3" height="1" fill="#b8b8b8"/><rect x="427" y="758.0" width="1" height="42.8" fill="#b8b8b8"/><rect x="431" y="758.0" width="1" height="41.4" fill="#b8b8b8"/><rect x="429" y="757.5" width="3" height="1" fill="#b8b8b8"/><rect x="435" y="758.0" width="1" height="40.1" fill="#b8b8b8"/><rect x="435" y="757.5" width="3" height="1" fill="#b8b8b8"/><rect x="439" y="758.0" width="1" height="38.8" fill="#b8b8b8"/><rect x="443" y="758.0" width="1" height="37.4" fill="#b8b8b8"/><rect x="441" y="757.5" width="3" height="1" fill="#b8b8b8"/><rect x="447" y="758.0" width="1" height="36.1" fill="#b8b8b8"/><rect x="447" y="757.5" width="3" height="1" fill="#b8b8b8"/><rect x="451" y="758.0" width="1" height="34.8" fill="#b8b8b8"/><rect x="455" y="758.0" width="1" height="33.0" fill="#b8b8b8"/><rect x="453" y="757.5" width="3" height="1" fill="#b8b8b8"/><rect x="459" y="758.0" width="1" height="31.0" fill="#b8b8b8"/><rect x="459" y="757.5" width="3" height="1" fill="#b8b8b8"/><rect x="463" y="758.0" width="1" height="29.0" fill="#b8b8b8"/><rect x="467" y="758.0" width="1" height="27.0" fill="#b8b8b8"/><rect x="465" y="757.5" width="3" height="1" fill="#b8b8b8"/><rect x="471" y="758.0" width="1" height="24.7" fill="#b8b8b8"/><rect x="471" y="757.5" width="3" height="1" fill="#b8b8b8"/><rect x="475" y="758.0" width="1" height="22.4" fill="#b8b8b8"/><rect x="479" y="758.0" width="1" height="20.1" fill="#b8b8b8"/><rect x="477" y="757.5" width="3" height="1" fill="#b8b8b8"/><rect x="483" y="758.0" width="1" height="17.7" fill="#b8b8b8"/><rect x="483" y="757.5" width="3" height="1" fill="#b8b8b8"/><rect x="487" y="758.0" width="1" height="15.7" fill="#b8b8b8"/><rect x="491" y="758.0" width="1" height="13.7" fill="#b8b8b8"/><rect x="489" y="757.5" width="3" height="1" fill="#b8b8b8"/><rect x="495" y="758.0" width="1" height="11.7" fill="#b8b8b8"/><rect x="495" y="757.5" width="3" height="1" fill="#b8b8b8"/><rect x="499" y="758.0" width="1" height="9.7" fill="#b8b8b8"/><rect x="503" y="758.0" width="1" height="7.7" fill="#b8b8b8"/><rect x="501" y="757.5" width="3" height="1" fill="#b8b8b8"/><rect x="507" y="758.0" width="1" height="5.7" fill="#b8b8b8"/><rect x="507" y="757.5" width="3" height="1" fill="#b8b8b8"/><rect x="511" y="758.0" width="1" height="1.8" fill="#b8b8b8"/><rect x="515" y="756.4" width="1" height="1.6" fill="#b8b8b8"/><rect x="513" y="757.5" width="3" height="1" fill="#b8b8b8"/><rect x="519" y="753.8" width="1" height="4.2" fill="#b8b8b8"/><rect x="519" y="757.5" width="3" height="1" fill="#b8b8b8"/><rect x="523" y="752.2" width="1" height="5.8" fill="#b8b8b8"/><rect x="527" y="750.6" width="1" height="7.4" fill="#b8b8b8"/><rect x="525" y="757.5" width="3" height="1" fill="#b8b8b8"/><rect x="531" y="749.1" width="1" height="8.9" fill="#b8b8b8"/><rect x="531" y="757.5" width="3" height="1" fill="#b8b8b8"/><rect x="535" y="748.9" width="1" height="9.1" fill="#b8b8b8"/><rect x="539" y="748.8" width="1" height="9.2" fill="#b8b8b8"/><rect x="537" y="757.5" width="3" height="1" fill="#b8b8b8"/><rect x="543" y="748.6" width="1" height="9.4" fill="#b8b8b8"/><rect x="543" y="757.5" width="3" height="1" fill="#b8b8b8"/><rect x="547" y="749.3" width="1" height="8.7" fill="#b8b8b8"/><rect x="551" y="750.2" width="1" height="7.8" fill="#b8b8b8"/><rect x="549" y="757.5" width="3" height="1" fill="#b8b8b8"/><rect x="555" y="751.2" width="1" height="6.8" fill="#b8b8b8"/><rect x="555" y="757.5" width="3" height="1" fill="#b8b8b8"/><rect x="559" y="751.6" width="1" height="6.4" fill="#b8b8b8"/><rect x="563" y="751.4" width="1" height="6.6" fill="#b8b8b8"/><rect x="561" y="757.5" width="3" height="1" fill="#b8b8b8"/><rect x="567" y="751.2" width="1" height="6.8" fill="#b8b8b8"/><rect x="567" y="757.5" width="3" height="1" fill="#b8b8b8"/><rect x="571" y="751.0" width="1" height="7.0" fill="#b8b8b8"/><rect x="575" y="750.8" width="1" height="7.2" fill="#b8b8b8"/><rect x="573" y="757.5" width="3" height="1" fill="#b8b8b8"/><rect x="579" y="750.6" width="1" height="7.4" fill="#b8b8b8"/><rect x="579" y="757.5" width="3" height="1" fill="#b8b8b8"/><rect x="583" y="750.4" width="1" height="7.6" fill="#b8b8b8"/><rect x="587" y="750.1" width="1" height="7.9" fill="#b8b8b8"/><rect x="585" y="757.5" width="3" height="1" fill="#b8b8b8"/><rect x="591" y="749.9" width="1" height="8.1" fill="#b8b8b8"/><rect x="591" y="757.5" width="3" height="1" fill="#b8b8b8"/><rect x="595" y="749.6" width="1" height="8.4" fill="#b8b8b8"/><rect x="599" y="749.3" width="1" height="8.7" fill="#b8b8b8"/><rect x="597" y="757.5" width="3" height="1" fill="#b8b8b8"/><rect x="603" y="749.0" width="1" height="9.0" fill="#b8b8b8"/><rect x="603" y="757.5" width="3" height="1" fill="#b8b8b8"/><rect x="607" y="748.7" width="1" height="9.3" fill="#b8b8b8"/><rect x="611" y="749.2" width="1" height="8.8" fill="#b8b8b8"/><rect x="609" y="757.5" width="3" height="1" fill="#b8b8b8"/><rect x="615" y="750.9" width="1" height="7.1" fill="#b8b8b8"/><rect x="615" y="757.5" width="3" height="1" fill="#b8b8b8"/><rect x="619" y="752.7" width="1" height="5.3" fill="#b8b8b8"/><rect x="623" y="754.5" width="1" height="3.5" fill="#b8b8b8"/><rect x="621" y="757.5" width="3" height="1" fill="#b8b8b8"/><rect x="627" y="756.1" width="1" height="1.9" fill="#b8b8b8"/><rect x="627" y="757.5" width="3" height="1" fill="#b8b8b8"/><rect x="631" y="757.7" width="1" height="0.5" fill="#b8b8b8"/><rect x="635" y="758.0" width="1" height="1.3" fill="#b8b8b8"/><rect x="633" y="757.5" width="3" height="1" fill="#b8b8b8"/><rect x="639" y="758.0" width="1" height="2.4" fill="#b8b8b8"/><rect x="639" y="757.5" width="3" height="1" fill="#b8b8b8"/><rect x="643" y="758.0" width="1" height="3.4" fill="#b8b8b8"/><rect x="647" y="758.0" width="1" height="4.4" fill="#b8b8b8"/><rect x="645" y="757.5" width="3" height="1" fill="#b8b8b8"/><rect x="651" y="758.0" width="1" height="5.4" fill="#b8b8b8"/><rect x="651" y="757.5" width="3" height="1" fill="#b8b8b8"/><rect x="655" y="758.0" width="1" height="6.4" fill="#b8b8b8"/><rect x="659" y="758.0" width="1" height="7.4" fill="#b8b8b8"/><rect x="657" y="757.5" width="3" height="1" fill="#b8b8b8"/><rect x="663" y="758.0" width="1" height="8.1" fill="#b8b8b8"/><rect x="663" y="757.5" width="3" height="1" fill="#b8b8b8"/><rect x="667" y="758.0" width="1" height="7.9" fill="#b8b8b8"/><rect x="671" y="758.0" width="1" height="7.7" fill="#b8b8b8"/><rect x="669" y="757.5" width="3" height="1" fill="#b8b8b8"/><rect x="675" y="758.0" width="1" height="7.5" fill="#b8b8b8"/><rect x="675" y="757.5" width="3" height="1" fill="#b8b8b8"/><rect x="679" y="758.0" width="1" height="7.3" fill="#b8b8b8"/><rect x="683" y="758.0" width="1" height="7.1" fill="#b8b8b8"/><rect x="681" y="757.5" width="3" height="1" fill="#b8b8b8"/><rect x="687" y="758.0" width="1" height="6.9" fill="#b8b8b8"/><rect x="687" y="757.5" width="3" height="1" fill="#b8b8b8"/><rect x="691" y="758.0" width="1" height="6.8" fill="#b8b8b8"/><rect x="695" y="758.0" width="1" height="6.8" fill="#b8b8b8"/><rect x="693" y="757.5" width="3" height="1" fill="#b8b8b8"/><rect x="699" y="758.0" width="1" height="6.8" fill="#b8b8b8"/><rect x="699" y="757.5" width="3" height="1" fill="#b8b8b8"/><rect x="703" y="758.0" width="1" height="6.4" fill="#b8b8b8"/><rect x="707" y="758.0" width="1" height="5.9" fill="#b8b8b8"/><rect x="705" y="757.5" width="3" height="1" fill="#b8b8b8"/><rect x="711" y="758.0" width="1" height="5.4" fill="#b8b8b8"/><rect x="711" y="757.5" width="3" height="1" fill="#b8b8b8"/><rect x="715" y="758.0" width="1" height="4.5" fill="#b8b8b8"/><rect x="719" y="758.0" width="1" height="3.7" fill="#b8b8b8"/><rect x="717" y="757.5" width="3" height="1" fill="#b8b8b8"/><rect x="723" y="758.0" width="1" height="2.8" fill="#b8b8b8"/><rect x="723" y="757.5" width="3" height="1" fill="#b8b8b8"/><rect x="727" y="758.0" width="1" height="2.0" fill="#b8b8b8"/><rect x="731" y="758.0" width="1" height="1.5" fill="#b8b8b8"/><rect x="729" y="757.5" width="3" height="1" fill="#b8b8b8"/><rect x="735" y="758.0" width="1" height="1.0" fill="#b8b8b8"/><rect x="735" y="757.5" width="3" height="1" fill="#b8b8b8"/><rect x="739" y="758.0" width="1" height="0.6" fill="#b8b8b8"/><rect x="743" y="758.0" width="1" height="0.5" fill="#b8b8b8"/><rect x="741" y="757.5" width="3" height="1" fill="#b8b8b8"/><rect x="747" y="757.6" width="1" height="0.5" fill="#b8b8b8"/><rect x="747" y="757.5" width="3" height="1" fill="#b8b8b8"/><rect x="751" y="757.1" width="1" height="0.9" fill="#b8b8b8"/><rect x="755" y="757.2" width="1" height="0.8" fill="#b8b8b8"/><rect x="753" y="757.5" width="3" height="1" fill="#b8b8b8"/><rect x="759" y="757.5" width="1" height="0.5" fill="#b8b8b8"/><rect x="759" y="757.5" width="3" height="1" fill="#b8b8b8"/><rect x="763" y="757.8" width="1" height="0.5" fill="#b8b8b8"/><rect x="767" y="758.0" width="1" height="0.5" fill="#b8b8b8"/><rect x="765" y="757.5" width="3" height="1" fill="#b8b8b8"/><rect x="771" y="758.0" width="1" height="0.5" fill="#b8b8b8"/><rect x="771" y="757.5" width="3" height="1" fill="#b8b8b8"/><rect x="775" y="758.0" width="1" height="0.8" fill="#b8b8b8"/><rect x="779" y="758.0" width="1" height="1.2" fill="#b8b8b8"/><rect x="777" y="757.5" width="3" height="1" fill="#b8b8b8"/><rect x="783" y="758.0" width="1" height="3.5" fill="#b8b8b8"/><rect x="783" y="757.5" width="3" height="1" fill="#b8b8b8"/><rect x="787" y="758.0" width="1" height="5.5" fill="#b8b8b8"/><rect x="791" y="758.0" width="1" height="5.9" fill="#b8b8b8"/><rect x="789" y="757.5" width="3" height="1" fill="#b8b8b8"/><rect x="795" y="758.0" width="1" height="6.3" fill="#b8b8b8"/><rect x="795" y="757.5" width="3" height="1" fill="#b8b8b8"/><rect x="799" y="758.0" width="1" height="6.7" fill="#b8b8b8"/><rect x="803" y="758.0" width="1" height="5.5" fill="#b8b8b8"/><rect x="801" y="757.5" width="3" height="1" fill="#b8b8b8"/><rect x="807" y="758.0" width="1" height="4.0" fill="#b8b8b8"/><rect x="807" y="757.5" width="3" height="1" fill="#b8b8b8"/><rect x="811" y="758.0" width="1" height="2.6" fill="#b8b8b8"/><rect x="815" y="758.0" width="1" height="1.5" fill="#b8b8b8"/><rect x="813" y="757.5" width="3" height="1" fill="#b8b8b8"/><rect x="819" y="758.0" width="1" height="0.5" fill="#b8b8b8"/><rect x="819" y="757.5" width="3" height="1" fill="#b8b8b8"/><rect x="823" y="757.2" width="1" height="0.8" fill="#b8b8b8"/><rect x="827" y="756.5" width="1" height="1.5" fill="#b8b8b8"/><rect x="825" y="757.5" width="3" height="1" fill="#b8b8b8"/><rect x="831" y="756.7" width="1" height="1.3" fill="#b8b8b8"/><rect x="831" y="757.5" width="3" height="1" fill="#b8b8b8"/><rect x="835" y="756.9" width="1" height="1.1" fill="#b8b8b8"/><rect x="839" y="757.1" width="1" height="0.9" fill="#b8b8b8"/><rect x="837" y="757.5" width="3" height="1" fill="#b8b8b8"/><rect x="843" y="757.3" width="1" height="0.7" fill="#b8b8b8"/><rect x="843" y="757.5" width="3" height="1" fill="#b8b8b8"/><rect x="847" y="757.5" width="1" height="0.5" fill="#b8b8b8"/><rect x="851" y="758.0" width="1" height="0.5" fill="#b8b8b8"/><rect x="849" y="757.5" width="3" height="1" fill="#b8b8b8"/><rect x="855" y="758.0" width="1" height="0.8" fill="#b8b8b8"/><rect x="855" y="757.5" width="3" height="1" fill="#b8b8b8"/><rect x="859" y="758.0" width="1" height="1.5" fill="#b8b8b8"/><rect x="863" y="758.0" width="1" height="2.1" fill="#b8b8b8"/><rect x="861" y="757.5" width="3" height="1" fill="#b8b8b8"/><rect x="867" y="758.0" width="1" height="2.1" fill="#b8b8b8"/><rect x="867" y="757.5" width="3" height="1" fill="#b8b8b8"/><rect x="871" y="758.0" width="1" height="2.1" fill="#b8b8b8"/><rect x="875" y="758.0" width="1" height="2.1" fill="#b8b8b8"/><rect x="873" y="757.5" width="3" height="1" fill="#b8b8b8"/><rect x="879" y="758.0" width="1" height="2.1" fill="#b8b8b8"/><rect x="879" y="757.5" width="3" height="1" fill="#b8b8b8"/><rect x="883" y="758.0" width="1" height="2.1" fill="#b8b8b8"/><rect x="887" y="758.0" width="1" height="2.1" fill="#b8b8b8"/><rect x="885" y="757.5" width="3" height="1" fill="#b8b8b8"/><rect x="891" y="758.0" width="1" height="2.1" fill="#b8b8b8"/><rect x="891" y="757.5" width="3" height="1" fill="#b8b8b8"/><rect x="895" y="758.0" width="1" height="2.1" fill="#b8b8b8"/><rect x="899" y="758.0" width="1" height="2.1" fill="#b8b8b8"/><rect x="897" y="757.5" width="3" height="1" fill="#b8b8b8"/><rect x="903" y="758.0" width="1" height="2.1" fill="#b8b8b8"/><rect x="903" y="757.5" width="3" height="1" fill="#b8b8b8"/><polyline points="316.0,730.7 326.5,741.2 339.6,756.9 352.7,775.3 368.4,793.6 386.7,797.6 405.1,801.5 420.8,801.5 439.2,798.9 457.5,791.0 478.5,781.8 504.7,771.4 525.7,760.9 541.4,751.7 557.1,750.4 583.4,750.4 609.6,749.1 625.3,751.7 646.3,758.3 662.0,762.2 688.2,764.8 700.0,764.8 710.5,763.5 752.4,760.1 778.6,759.0 804.9,759.6 831.1,758.3 857.3,759.6 899.2,760.1" fill="none" stroke="#e8283c" stroke-width="1" stroke-dasharray="4,3" stroke-linejoin="round"/></g>
<g clip-path="url(#csh1)"><polyline points="314.7,900.6 326.5,905.8 336.9,906.4 347.4,910.3 357.9,909.0 365.8,899.8 372.3,867.0 381.5,901.6 389.4,895.9 399.9,902.4 413.0,903.7 426.1,852.6 441.8,880.1 452.3,881.5 462.8,871.0 474.6,829.0 481.1,840.8 489.0,844.8 498.2,860.5 507.3,825.1 515.2,826.4 525.7,827.2 536.2,848.7 549.3,902.4 557.1,898.5 570.2,847.4 575.5,864.4 586.0,838.2 599.1,851.3 605.6,852.6 617.4,895.9 625.3,897.2 638.4,903.7 654.1,881.5 667.2,895.9 680.3,880.1 690.8,846.1 700.0,847.4 710.5,886.7 726.2,846.1 739.3,826.4 752.4,889.3 761.6,861.8 778.6,844.8 789.1,899.8 807.5,830.3 823.2,853.9 837.6,894.6 846.8,893.3 859.9,872.3 867.8,874.9 878.3,894.6 880.9,881.5 894.0,895.9 901.9,843.5" fill="none" stroke="#3cc0b4" stroke-width="1" stroke-linejoin="round"/><polyline points="314.7,899.8 336.9,906.4 357.9,910.3 373.6,885.4 384.1,895.9 399.9,901.1 413.0,903.7 428.7,861.8 447.0,874.9 462.8,874.9 475.9,838.2 489.0,843.4 502.1,850.0 512.6,827.7 530.9,830.3 546.7,877.5 559.8,895.9 570.2,859.2 586.0,840.8 599.1,846.1 617.4,882.8 630.5,898.5 641.0,901.1 662.0,885.4 680.3,885.4 696.1,848.7 700.0,853.9 700.0,861.8 715.7,874.9 731.5,838.2 741.9,830.3 755.1,882.8 770.8,851.3 783.9,867.1 794.4,888.0 812.7,838.2 825.8,851.3 841.6,893.3 857.3,880.2 870.4,885.4 883.5,888.0 901.9,872.3" fill="none" stroke="#e8283c" stroke-width="1" stroke-dasharray="4,3" stroke-linejoin="round"/></g>
<text x="316" y="734.5" font-size="9.5" fill="#ffffff" textLength="153.6" lengthAdjust="spacingAndGlyphs" stroke="#ffffff" stroke-width="0.28">MACD(12,26,9) -0.000052 -0.000153</text>
<text x="316" y="828.5" font-size="9.5" fill="#ffffff" textLength="101.7" lengthAdjust="spacingAndGlyphs" stroke="#ffffff" stroke-width="0.28">Stoch(8,3,3) 71.77 45.25</text>
<rect x="313.5" y="531.5" width="734" height="189" fill="none" stroke="#ffffff" stroke-width="1"/>
<rect x="313.5" y="722.5" width="734" height="92" fill="none" stroke="#ffffff" stroke-width="1"/>
<rect x="313.5" y="816.5" width="734" height="97" fill="none" stroke="#ffffff" stroke-width="1"/>
<line x1="1048" y1="560.5" x2="1052" y2="560.5" stroke="#ffffff" stroke-width="1"/>
<text x="1053" y="564" font-size="9.5" fill="#ffffff" textLength="32.6" lengthAdjust="spacingAndGlyphs" stroke="#ffffff" stroke-width="0.28">1.27645</text>
<line x1="1048" y1="592.5" x2="1052" y2="592.5" stroke="#ffffff" stroke-width="1"/>
<text x="1053" y="596" font-size="9.5" fill="#ffffff" textLength="32.6" lengthAdjust="spacingAndGlyphs" stroke="#ffffff" stroke-width="0.28">1.27250</text>
<line x1="1048" y1="624.5" x2="1052" y2="624.5" stroke="#ffffff" stroke-width="1"/>
<text x="1053" y="628" font-size="9.5" fill="#ffffff" textLength="32.6" lengthAdjust="spacingAndGlyphs" stroke="#ffffff" stroke-width="0.28">1.26855</text>
<line x1="1048" y1="656.5" x2="1052" y2="656.5" stroke="#ffffff" stroke-width="1"/>
<text x="1053" y="660" font-size="9.5" fill="#ffffff" textLength="32.6" lengthAdjust="spacingAndGlyphs" stroke="#ffffff" stroke-width="0.28">1.26460</text>
<line x1="1048" y1="688.5" x2="1052" y2="688.5" stroke="#ffffff" stroke-width="1"/>
<text x="1053" y="692" font-size="9.5" fill="#ffffff" textLength="32.6" lengthAdjust="spacingAndGlyphs" stroke="#ffffff" stroke-width="0.28">1.26065</text>
<rect x="1050" y="661.5" width="39" height="11" fill="#8c9aa6"/>
<text x="1053" y="671" font-size="9.5" fill="#ffffff" textLength="32.1" lengthAdjust="spacingAndGlyphs" stroke="#ffffff" stroke-width="0.28">1.26329</text>
<line x1="1048" y1="723.5" x2="1052" y2="723.5" stroke="#ffffff" stroke-width="1"/>
<text x="1053" y="731" font-size="9.5" fill="#ffffff" textLength="37.6" lengthAdjust="spacingAndGlyphs" stroke="#ffffff" stroke-width="0.28">0.002503</text>
<line x1="1048" y1="758.5" x2="1052" y2="758.5" stroke="#ffffff" stroke-width="1"/>
<text x="1053" y="762" font-size="9.5" fill="#ffffff" textLength="37.6" lengthAdjust="spacingAndGlyphs" stroke="#ffffff" stroke-width="0.28">0.000000</text>
<line x1="1048" y1="813.5" x2="1052" y2="813.5" stroke="#ffffff" stroke-width="1"/>
<text x="1053" y="812" font-size="9.5" fill="#ffffff" textLength="40.6" lengthAdjust="spacingAndGlyphs" stroke="#ffffff" stroke-width="0.28">-0.003968</text>
<line x1="1048" y1="817.5" x2="1052" y2="817.5" stroke="#ffffff" stroke-width="1"/>
<text x="1053" y="825" font-size="9.5" fill="#ffffff" textLength="27.6" lengthAdjust="spacingAndGlyphs" stroke="#ffffff" stroke-width="0.28">100.00</text>
<line x1="1048" y1="835.5" x2="1052" y2="835.5" stroke="#ffffff" stroke-width="1"/>
<text x="1053" y="839" font-size="9.5" fill="#ffffff" textLength="22.6" lengthAdjust="spacingAndGlyphs" stroke="#ffffff" stroke-width="0.28">80.00</text>
<line x1="1048" y1="894.5" x2="1052" y2="894.5" stroke="#ffffff" stroke-width="1"/>
<text x="1053" y="898" font-size="9.5" fill="#ffffff" textLength="22.6" lengthAdjust="spacingAndGlyphs" stroke="#ffffff" stroke-width="0.28">20.00</text>
<line x1="1048" y1="912.5" x2="1052" y2="912.5" stroke="#ffffff" stroke-width="1"/>
<text x="1053" y="911" font-size="9.5" fill="#ffffff" textLength="17.6" lengthAdjust="spacingAndGlyphs" stroke="#ffffff" stroke-width="0.28">0.00</text>
<line x1="313.5" y1="913" x2="313.5" y2="918" stroke="#ffffff" stroke-width="1"/>
<text x="313" y="926" font-size="9.5" fill="#ffffff" textLength="51.2" lengthAdjust="spacingAndGlyphs" stroke="#ffffff" stroke-width="0.28">21 Mar 2024</text>
<line x1="377.5" y1="913" x2="377.5" y2="918" stroke="#ffffff" stroke-width="1"/>
<text x="377" y="926" font-size="9.5" fill="#ffffff" textLength="53.7" lengthAdjust="spacingAndGlyphs" stroke="#ffffff" stroke-width="0.28">22 Mar 02:00</text>
<line x1="441.5" y1="913" x2="441.5" y2="918" stroke="#ffffff" stroke-width="1"/>
<text x="441" y="926" font-size="9.5" fill="#ffffff" textLength="53.7" lengthAdjust="spacingAndGlyphs" stroke="#ffffff" stroke-width="0.28">22 Mar 18:00</text>
<line x1="505.5" y1="913" x2="505.5" y2="918" stroke="#ffffff" stroke-width="1"/>
<text x="505" y="926" font-size="9.5" fill="#ffffff" textLength="53.7" lengthAdjust="spacingAndGlyphs" stroke="#ffffff" stroke-width="0.28">25 Mar 10:00</text>
<line x1="569.5" y1="913" x2="569.5" y2="918" stroke="#ffffff" stroke-width="1"/>
<text x="569" y="926" font-size="9.5" fill="#ffffff" textLength="53.7" lengthAdjust="spacingAndGlyphs" stroke="#ffffff" stroke-width="0.28">26 Mar 02:00</text>
<line x1="633.5" y1="913" x2="633.5" y2="918" stroke="#ffffff" stroke-width="1"/>
<text x="633" y="926" font-size="9.5" fill="#ffffff" textLength="53.7" lengthAdjust="spacingAndGlyphs" stroke="#ffffff" stroke-width="0.28">26 Mar 18:00</text>
<line x1="697.5" y1="913" x2="697.5" y2="918" stroke="#ffffff" stroke-width="1"/>
<text x="697" y="926" font-size="9.5" fill="#ffffff" textLength="53.7" lengthAdjust="spacingAndGlyphs" stroke="#ffffff" stroke-width="0.28">27 Mar 10:00</text>
<line x1="761.5" y1="913" x2="761.5" y2="918" stroke="#ffffff" stroke-width="1"/>
<text x="761" y="926" font-size="9.5" fill="#ffffff" textLength="53.7" lengthAdjust="spacingAndGlyphs" stroke="#ffffff" stroke-width="0.28">28 Mar 02:00</text>
<line x1="825.5" y1="913" x2="825.5" y2="918" stroke="#ffffff" stroke-width="1"/>
<text x="825" y="926" font-size="9.5" fill="#ffffff" textLength="53.7" lengthAdjust="spacingAndGlyphs" stroke="#ffffff" stroke-width="0.28">28 Mar 18:00</text>
<line x1="889.5" y1="913" x2="889.5" y2="918" stroke="#ffffff" stroke-width="1"/>
<text x="889" y="926" font-size="9.5" fill="#ffffff" textLength="53.7" lengthAdjust="spacingAndGlyphs" stroke="#ffffff" stroke-width="0.28">29 Mar 10:00</text>
<path d="M897,532 L905,532 L901,536 Z" fill="#9aa0a6"/>
<rect x="1109" y="498" width="803" height="443" fill="#f0f0f0"/>
<path d="M1122.5,507 L1122.5,518.5 M1128.5,505 L1128.5,519.5" stroke="#1ca31c" stroke-width="1.3"/>
<rect x="1120.7" y="509.5" width="3.6" height="6" fill="#b5f5b5" stroke="#1ca31c" stroke-width="1.4"/>
<rect x="1126.7" y="508.5" width="3.6" height="8" fill="#b5f5b5" stroke="#1ca31c" stroke-width="1.4"/>
<text x="1137.7" y="516.7" font-size="12" fill="#6e6e6e" textLength="65" lengthAdjust="spacingAndGlyphs">GBPUSD,M30</text>
<line x1="1811" y1="518.5" x2="1820" y2="518.5" stroke="#9a9a9a" stroke-width="1.3"/>
<rect x="1847.5" y="510.5" width="8" height="8" fill="none" stroke="#9a9a9a" stroke-width="1.2"/>
<path d="M1883,510 L1892,519 M1892,510 L1883,519" stroke="#9a9a9a" stroke-width="1.1"/>
<rect x="1114" y="527" width="791" height="1" fill="#a0a0a0"/>
<rect x="1114" y="527" width="1" height="407" fill="#a0a0a0"/>
<rect x="1115" y="528" width="790" height="1" fill="#696969"/>
<rect x="1115" y="528" width="1" height="406" fill="#696969"/>
<rect x="1114" y="934" width="792" height="1" fill="#e3e3e3"/>
<rect x="1905" y="527" width="1" height="408" fill="#e3e3e3"/>
<rect x="1116" y="529" width="789" height="405" fill="#ffffff"/>
<defs><clipPath id="cmm30"><rect x="1118.5" y="531.5" width="733" height="188"/></clipPath><clipPath id="cam30"><rect x="1118.5" y="722.5" width="733" height="91"/></clipPath><clipPath id="csm30"><rect x="1118.5" y="816.5" width="733" height="96"/></clipPath></defs>
<line x1="1150.5" y1="532" x2="1150.5" y2="720" stroke="#c4c4c4" stroke-width="1" stroke-dasharray="3,3"/>
<line x1="1182.5" y1="532" x2="1182.5" y2="720" stroke="#c4c4c4" stroke-width="1" stroke-dasharray="3,3"/>
<line x1="1214.5" y1="532" x2="1214.5" y2="720" stroke="#c4c4c4" stroke-width="1" stroke-dasharray="3,3"/>
<line x1="1246.5" y1="532" x2="1246.5" y2="720" stroke="#c4c4c4" stroke-width="1" stroke-dasharray="3,3"/>
<line x1="1278.5" y1="532" x2="1278.5" y2="720" stroke="#c4c4c4" stroke-width="1" stroke-dasharray="3,3"/>
<line x1="1310.5" y1="532" x2="1310.5" y2="720" stroke="#c4c4c4" stroke-width="1" stroke-dasharray="3,3"/>
<line x1="1342.5" y1="532" x2="1342.5" y2="720" stroke="#c4c4c4" stroke-width="1" stroke-dasharray="3,3"/>
<line x1="1374.5" y1="532" x2="1374.5" y2="720" stroke="#c4c4c4" stroke-width="1" stroke-dasharray="3,3"/>
<line x1="1406.5" y1="532" x2="1406.5" y2="720" stroke="#c4c4c4" stroke-width="1" stroke-dasharray="3,3"/>
<line x1="1438.5" y1="532" x2="1438.5" y2="720" stroke="#c4c4c4" stroke-width="1" stroke-dasharray="3,3"/>
<line x1="1470.5" y1="532" x2="1470.5" y2="720" stroke="#c4c4c4" stroke-width="1" stroke-dasharray="3,3"/>
<line x1="1502.5" y1="532" x2="1502.5" y2="720" stroke="#c4c4c4" stroke-width="1" stroke-dasharray="3,3"/>
<line x1="1534.5" y1="532" x2="1534.5" y2="720" stroke="#c4c4c4" stroke-width="1" stroke-dasharray="3,3"/>
<line x1="1566.5" y1="532" x2="1566.5" y2="720" stroke="#c4c4c4" stroke-width="1" stroke-dasharray="3,3"/>
<line x1="1598.5" y1="532" x2="1598.5" y2="720" stroke="#c4c4c4" stroke-width="1" stroke-dasharray="3,3"/>
<line x1="1630.5" y1="532" x2="1630.5" y2="720" stroke="#c4c4c4" stroke-width="1" stroke-dasharray="3,3"/>
<line x1="1662.5" y1="532" x2="1662.5" y2="720" stroke="#c4c4c4" stroke-width="1" stroke-dasharray="3,3"/>
<line x1="1694.5" y1="532" x2="1694.5" y2="720" stroke="#c4c4c4" stroke-width="1" stroke-dasharray="3,3"/>
<line x1="1726.5" y1="532" x2="1726.5" y2="720" stroke="#c4c4c4" stroke-width="1" stroke-dasharray="3,3"/>
<line x1="1758.5" y1="532" x2="1758.5" y2="720" stroke="#c4c4c4" stroke-width="1" stroke-dasharray="3,3"/>
<line x1="1790.5" y1="532" x2="1790.5" y2="720" stroke="#c4c4c4" stroke-width="1" stroke-dasharray="3,3"/>
<line x1="1822.5" y1="532" x2="1822.5" y2="720" stroke="#c4c4c4" stroke-width="1" stroke-dasharray="3,3"/>
<line x1="1150.5" y1="723" x2="1150.5" y2="814" stroke="#c4c4c4" stroke-width="1" stroke-dasharray="3,3"/>
<line x1="1182.5" y1="723" x2="1182.5" y2="814" stroke="#c4c4c4" stroke-width="1" stroke-dasharray="3,3"/>
<line x1="1214.5" y1="723" x2="1214.5" y2="814" stroke="#c4c4c4" stroke-width="1" stroke-dasharray="3,3"/>
<line x1="1246.5" y1="723" x2="1246.5" y2="814" stroke="#c4c4c4" stroke-width="1" stroke-dasharray="3,3"/>
<line x1="1278.5" y1="723" x2="1278.5" y2="814" stroke="#c4c4c4" stroke-width="1" stroke-dasharray="3,3"/>
<line x1="1310.5" y1="723" x2="1310.5" y2="814" stroke="#c4c4c4" stroke-width="1" stroke-dasharray="3,3"/>
<line x1="1342.5" y1="723" x2="1342.5" y2="814" stroke="#c4c4c4" stroke-width="1" stroke-dasharray="3,3"/>
<line x1="1374.5" y1="723" x2="1374.5" y2="814" stroke="#c4c4c4" stroke-width="1" stroke-dasharray="3,3"/>
<line x1="1406.5" y1="723" x2="1406.5" y2="814" stroke="#c4c4c4" stroke-width="1" stroke-dasharray="3,3"/>
<line x1="1438.5" y1="723" x2="1438.5" y2="814" stroke="#c4c4c4" stroke-width="1" stroke-dasharray="3,3"/>
<line x1="1470.5" y1="723" x2="1470.5" y2="814" stroke="#c4c4c4" stroke-width="1" stroke-dasharray="3,3"/>
<line x1="1502.5" y1="723" x2="1502.5" y2="814" stroke="#c4c4c4" stroke-width="1" stroke-dasharray="3,3"/>
<line x1="1534.5" y1="723" x2="1534.5" y2="814" stroke="#c4c4c4" stroke-width="1" stroke-dasharray="3,3"/>
<line x1="1566.5" y1="723" x2="1566.5" y2="814" stroke="#c4c4c4" stroke-width="1" stroke-dasharray="3,3"/>
<line x1="1598.5" y1="723" x2="1598.5" y2="814" stroke="#c4c4c4" stroke-width="1" stroke-dasharray="3,3"/>
<line x1="1630.5" y1="723" x2="1630.5" y2="814" stroke="#c4c4c4" stroke-width="1" stroke-dasharray="3,3"/>
<line x1="1662.5" y1="723" x2="1662.5" y2="814" stroke="#c4c4c4" stroke-width="1" stroke-dasharray="3,3"/>
<line x1="1694.5" y1="723" x2="1694.5" y2="814" stroke="#c4c4c4" stroke-width="1" stroke-dasharray="3,3"/>
<line x1="1726.5" y1="723" x2="1726.5" y2="814" stroke="#c4c4c4" stroke-width="1" stroke-dasharray="3,3"/>
<line x1="1758.5" y1="723" x2="1758.5" y2="814" stroke="#c4c4c4" stroke-width="1" stroke-dasharray="3,3"/>
<line x1="1790.5" y1="723" x2="1790.5" y2="814" stroke="#c4c4c4" stroke-width="1" stroke-dasharray="3,3"/>
<line x1="1822.5" y1="723" x2="1822.5" y2="814" stroke="#c4c4c4" stroke-width="1" stroke-dasharray="3,3"/>
<line x1="1150.5" y1="817" x2="1150.5" y2="913" stroke="#c4c4c4" stroke-width="1" stroke-dasharray="3,3"/>
<line x1="1182.5" y1="817" x2="1182.5" y2="913" stroke="#c4c4c4" stroke-width="1" stroke-dasharray="3,3"/>
<line x1="1214.5" y1="817" x2="1214.5" y2="913" stroke="#c4c4c4" stroke-width="1" stroke-dasharray="3,3"/>
<line x1="1246.5" y1="817" x2="1246.5" y2="913" stroke="#c4c4c4" stroke-width="1" stroke-dasharray="3,3"/>
<line x1="1278.5" y1="817" x2="1278.5" y2="913" stroke="#c4c4c4" stroke-width="1" stroke-dasharray="3,3"/>
<line x1="1310.5" y1="817" x2="1310.5" y2="913" stroke="#c4c4c4" stroke-width="1" stroke-dasharray="3,3"/>
<line x1="1342.5" y1="817" x2="1342.5" y2="913" stroke="#c4c4c4" stroke-width="1" stroke-dasharray="3,3"/>
<line x1="1374.5" y1="817" x2="1374.5" y2="913" stroke="#c4c4c4" stroke-width="1" stroke-dasharray="3,3"/>
<line x1="1406.5" y1="817" x2="1406.5" y2="913" stroke="#c4c4c4" stroke-width="1" stroke-dasharray="3,3"/>
<line x1="1438.5" y1="817" x2="1438.5" y2="913" stroke="#c4c4c4" stroke-width="1" stroke-dasharray="3,3"/>
<line x1="1470.5" y1="817" x2="1470.5" y2="913" stroke="#c4c4c4" stroke-width="1" stroke-dasharray="3,3"/>
<line x1="1502.5" y1="817" x2="1502.5" y2="913" stroke="#c4c4c4" stroke-width="1" stroke-dasharray="3,3"/>
<line x1="1534.5" y1="817" x2="1534.5" y2="913" stroke="#c4c4c4" stroke-width="1" stroke-dasharray="3,3"/>
<line x1="1566.5" y1="817" x2="1566.5" y2="913" stroke="#c4c4c4" stroke-width="1" stroke-dasharray="3,3"/>
<line x1="1598.5" y1="817" x2="1598.5" y2="913" stroke="#c4c4c4" stroke-width="1" stroke-dasharray="3,3"/>
<line x1="1630.5" y1="817" x2="1630.5" y2="913" stroke="#c4c4c4" stroke-width="1" stroke-dasharray="3,3"/>
<line x1="1662.5" y1="817" x2="1662.5" y2="913" stroke="#c4c4c4" stroke-width="1" stroke-dasharray="3,3"/>
<line x1="1694.5" y1="817" x2="1694.5" y2="913" stroke="#c4c4c4" stroke-width="1" stroke-dasharray="3,3"/>
<line x1="1726.5" y1="817" x2="1726.5" y2="913" stroke="#c4c4c4" stroke-width="1" stroke-dasharray="3,3"/>
<line x1="1758.5" y1="817" x2="1758.5" y2="913" stroke="#c4c4c4" stroke-width="1" stroke-dasharray="3,3"/>
<line x1="1790.5" y1="817" x2="1790.5" y2="913" stroke="#c4c4c4" stroke-width="1" stroke-dasharray="3,3"/>
<line x1="1822.5" y1="817" x2="1822.5" y2="913" stroke="#c4c4c4" stroke-width="1" stroke-dasharray="3,3"/>
<line x1="1119" y1="558.5" x2="1852" y2="558.5" stroke="#c4c4c4" stroke-width="1" stroke-dasharray="3,3"/>
<line x1="1119" y1="591.5" x2="1852" y2="591.5" stroke="#c4c4c4" stroke-width="1" stroke-dasharray="3,3"/>
<line x1="1119" y1="623.5" x2="1852" y2="623.5" stroke="#c4c4c4" stroke-width="1" stroke-dasharray="3,3"/>
<line x1="1119" y1="655.5" x2="1852" y2="655.5" stroke="#c4c4c4" stroke-width="1" stroke-dasharray="3,3"/>
<line x1="1119" y1="688.5" x2="1852" y2="688.5" stroke="#c4c4c4" stroke-width="1" stroke-dasharray="3,3"/>
<line x1="1119" y1="759.5" x2="1852" y2="759.5" stroke="#c4c4c4" stroke-width="1" stroke-dasharray="3,3"/>
<line x1="1119" y1="835.5" x2="1852" y2="835.5" stroke="#c4c4c4" stroke-width="1" stroke-dasharray="3,3"/>
<line x1="1119" y1="894.5" x2="1852" y2="894.5" stroke="#c4c4c4" stroke-width="1" stroke-dasharray="3,3"/>
<rect x="1123.5" y="537.5" width="15" height="11" fill="#fde2dc" stroke="#c83c3c" stroke-width="1"/>
<rect x="1131" y="537.5" width="7.5" height="11" fill="#bfe6fb" stroke="#2c6fa6" stroke-width="1"/>
<line x1="1125.5" y1="540" x2="1130" y2="540" stroke="#d84a3a" stroke-width="1.2"/>
<line x1="1132.5" y1="540" x2="1137" y2="540" stroke="#1f6fb0" stroke-width="1.2"/>
<line x1="1125.5" y1="543" x2="1130" y2="543" stroke="#d84a3a" stroke-width="1.2"/>
<line x1="1132.5" y1="543" x2="1137" y2="543" stroke="#1f6fb0" stroke-width="1.2"/>
<line x1="1125.5" y1="546" x2="1130" y2="546" stroke="#d84a3a" stroke-width="1.2"/>
<line x1="1132.5" y1="546" x2="1137" y2="546" stroke="#1f6fb0" stroke-width="1.2"/>
<text x="1144" y="545.6" font-size="9.5" fill="#000000" textLength="209" lengthAdjust="spacingAndGlyphs" stroke="#000000" stroke-width="0.28">GBPUSD, M30:  Great Britain Pound vs US Dollar</text>
<line x1="1119" y1="596.5" x2="1852" y2="596.5" stroke="#c0c0c0" stroke-width="1"/>
<g clip-path="url(#cmm30)"><rect x="1120" y="611.4" width="1" height="23.0" fill="#000"/><rect x="1118.5" y="615.5" width="4" height="16.0" fill="#fff" stroke="#000" stroke-width="1"/><rect x="1127" y="612.6" width="1" height="15.8" fill="#000"/><rect x="1125.5" y="614.3" width="4" height="0.5" fill="#fff" stroke="#000" stroke-width="1"/><rect x="1135" y="611.4" width="1" height="15.8" fill="#000"/><rect x="1133.5" y="614.3" width="4" height="0.5" fill="#fff" stroke="#000" stroke-width="1"/><rect x="1143" y="594.4" width="1" height="21.8" fill="#000"/><rect x="1141.5" y="597.4" width="4" height="17.2" fill="#fff" stroke="#000" stroke-width="1"/><rect x="1150" y="592.0" width="1" height="14.6" fill="#000"/><rect x="1148" y="596.4" width="5" height="9.0" fill="#000"/><rect x="1158" y="595.6" width="1" height="12.9" fill="#000"/><rect x="1156.5" y="598.6" width="4" height="6.3" fill="#fff" stroke="#000" stroke-width="1"/><rect x="1166" y="594.4" width="1" height="18.2" fill="#000"/><rect x="1164" y="596.9" width="5" height="14.1" fill="#000"/><rect x="1174" y="599.3" width="1" height="13.3" fill="#000"/><rect x="1172.5" y="604.1" width="4" height="5.5" fill="#fff" stroke="#000" stroke-width="1"/><rect x="1182" y="600.5" width="1" height="6.1" fill="#000"/><rect x="1180.5" y="602.2" width="4" height="1.4" fill="#fff" stroke="#000" stroke-width="1"/><rect x="1190" y="589.1" width="1" height="16.2" fill="#000"/><rect x="1188.5" y="592.5" width="4" height="8.7" fill="#fff" stroke="#000" stroke-width="1"/><rect x="1198" y="585.9" width="1" height="15.8" fill="#000"/><rect x="1196" y="592.0" width="5" height="9.2" fill="#000"/><rect x="1206" y="600.5" width="1" height="9.7" fill="#000"/><rect x="1204" y="600.5" width="5" height="6.1" fill="#000"/><rect x="1215" y="605.3" width="1" height="15.8" fill="#000"/><rect x="1213.5" y="606.6" width="4" height="0.5" fill="#fff" stroke="#000" stroke-width="1"/><rect x="1223" y="606.6" width="1" height="43.7" fill="#000"/><rect x="1221" y="607.0" width="5" height="39.5" fill="#000"/><rect x="1230" y="632.7" width="1" height="14.6" fill="#000"/><rect x="1228.5" y="638.6" width="4" height="7.5" fill="#fff" stroke="#000" stroke-width="1"/><rect x="1238" y="636.9" width="1" height="26.7" fill="#000"/><rect x="1236" y="636.9" width="5" height="20.1" fill="#000"/><rect x="1246" y="653.8" width="1" height="17.7" fill="#000"/><rect x="1244" y="658.2" width="5" height="5.3" fill="#000"/><rect x="1255" y="660.4" width="1" height="54.1" fill="#000"/><rect x="1253" y="661.8" width="5" height="41.2" fill="#000"/><rect x="1263" y="692.6" width="1" height="10.9" fill="#000"/><rect x="1261.5" y="696.3" width="4" height="6.3" fill="#fff" stroke="#000" stroke-width="1"/><rect x="1271" y="650.2" width="1" height="49.7" fill="#000"/><rect x="1269.5" y="653.6" width="4" height="41.7" fill="#fff" stroke="#000" stroke-width="1"/><rect x="1278" y="626.0" width="1" height="27.9" fill="#000"/><rect x="1276.5" y="642.2" width="4" height="10.4" fill="#fff" stroke="#000" stroke-width="1"/><rect x="1286" y="613.8" width="1" height="31.5" fill="#000"/><rect x="1284.5" y="621.6" width="4" height="19.6" fill="#fff" stroke="#000" stroke-width="1"/><rect x="1295" y="616.3" width="1" height="35.2" fill="#000"/><rect x="1293" y="622.3" width="5" height="25.9" fill="#000"/><rect x="1303" y="621.1" width="1" height="30.3" fill="#000"/><rect x="1301.5" y="623.5" width="4" height="24.2" fill="#fff" stroke="#000" stroke-width="1"/><rect x="1310" y="572.1" width="1" height="62.3" fill="#000"/><rect x="1308.5" y="579.2" width="4" height="44.3" fill="#fff" stroke="#000" stroke-width="1"/><rect x="1318" y="549.6" width="1" height="52.6" fill="#000"/><rect x="1316" y="578.7" width="5" height="15.3" fill="#000"/><rect x="1326" y="558.5" width="1" height="39.5" fill="#000"/><rect x="1324.5" y="564.6" width="4" height="28.8" fill="#fff" stroke="#000" stroke-width="1"/><rect x="1334" y="544.7" width="1" height="51.7" fill="#000"/><rect x="1332" y="562.4" width="5" height="25.9" fill="#000"/><rect x="1343" y="570.2" width="1" height="29.1" fill="#000"/><rect x="1341" y="587.2" width="5" height="2.9" fill="#000"/><rect x="1350" y="582.3" width="1" height="37.6" fill="#000"/><rect x="1348.5" y="587.7" width="4" height="2.6" fill="#fff" stroke="#000" stroke-width="1"/><rect x="1358" y="584.2" width="1" height="41.2" fill="#000"/><rect x="1356" y="587.2" width="5" height="13.3" fill="#000"/><rect x="1366" y="573.8" width="1" height="38.8" fill="#000"/><rect x="1364.5" y="578.0" width="4" height="21.3" fill="#fff" stroke="#000" stroke-width="1"/><rect x="1374" y="566.5" width="1" height="29.1" fill="#000"/><rect x="1372" y="577.5" width="5" height="15.8" fill="#000"/><rect x="1382" y="585.2" width="1" height="31.0" fill="#000"/><rect x="1380" y="593.2" width="5" height="17.0" fill="#000"/><rect x="1390" y="607.8" width="1" height="12.9" fill="#000"/><rect x="1388" y="610.2" width="5" height="6.1" fill="#000"/><rect x="1398" y="607.0" width="1" height="21.3" fill="#000"/><rect x="1396" y="616.3" width="5" height="9.2" fill="#000"/><rect x="1406" y="621.1" width="1" height="19.4" fill="#000"/><rect x="1404.5" y="622.8" width="4" height="1.4" fill="#fff" stroke="#000" stroke-width="1"/><rect x="1414" y="619.4" width="1" height="10.2" fill="#000"/><rect x="1412.5" y="621.6" width="4" height="1.9" fill="#fff" stroke="#000" stroke-width="1"/><rect x="1422" y="619.9" width="1" height="9.0" fill="#000"/><rect x="1420" y="621.6" width="5" height="6.3" fill="#000"/><rect x="1430" y="623.5" width="1" height="10.9" fill="#000"/><rect x="1428.5" y="626.5" width="4" height="0.5" fill="#fff" stroke="#000" stroke-width="1"/><rect x="1438" y="617.5" width="1" height="9.7" fill="#000"/><rect x="1436.5" y="619.7" width="4" height="5.8" fill="#fff" stroke="#000" stroke-width="1"/><rect x="1446" y="618.7" width="1" height="10.9" fill="#000"/><rect x="1444" y="619.2" width="5" height="3.2" fill="#000"/><rect x="1454" y="620.6" width="1" height="12.6" fill="#000"/><rect x="1452" y="621.1" width="5" height="8.5" fill="#000"/><rect x="1462" y="612.6" width="1" height="13.8" fill="#000"/><rect x="1460.5" y="621.1" width="4" height="3.9" fill="#fff" stroke="#000" stroke-width="1"/><rect x="1470" y="617.5" width="1" height="3.2" fill="#000"/><rect x="1468.5" y="618.7" width="4" height="0.7" fill="#fff" stroke="#000" stroke-width="1"/><rect x="1478" y="612.6" width="1" height="6.1" fill="#000"/><rect x="1476.5" y="614.3" width="4" height="2.6" fill="#fff" stroke="#000" stroke-width="1"/><rect x="1486" y="611.4" width="1" height="13.3" fill="#000"/><rect x="1484" y="612.6" width="5" height="10.9" fill="#000"/><rect x="1494" y="620.6" width="1" height="5.3" fill="#000"/><rect x="1492.5" y="622.8" width="4" height="1.4" fill="#fff" stroke="#000" stroke-width="1"/><rect x="1502" y="607.8" width="1" height="23.5" fill="#000"/><rect x="1500.5" y="615.5" width="4" height="6.3" fill="#fff" stroke="#000" stroke-width="1"/><rect x="1510" y="601.7" width="1" height="15.8" fill="#000"/><rect x="1508.5" y="611.4" width="4" height="3.9" fill="#fff" stroke="#000" stroke-width="1"/><rect x="1518" y="610.2" width="1" height="9.0" fill="#000"/><rect x="1516" y="610.2" width="5" height="8.5" fill="#000"/><rect x="1526" y="617.5" width="1" height="21.1" fill="#000"/><rect x="1524" y="618.2" width="5" height="6.5" fill="#000"/><rect x="1534" y="624.8" width="1" height="13.8" fill="#000"/><rect x="1532" y="624.8" width="5" height="5.6" fill="#000"/><rect x="1542" y="618.7" width="1" height="12.6" fill="#000"/><rect x="1540.5" y="620.4" width="4" height="9.9" fill="#fff" stroke="#000" stroke-width="1"/><rect x="1550" y="618.2" width="1" height="4.9" fill="#000"/><rect x="1548" y="619.9" width="5" height="2.4" fill="#000"/><rect x="1558" y="617.5" width="1" height="7.3" fill="#000"/><rect x="1556.5" y="619.9" width="4" height="1.9" fill="#fff" stroke="#000" stroke-width="1"/><rect x="1566" y="619.2" width="1" height="4.4" fill="#000"/><rect x="1564" y="619.4" width="5" height="3.6" fill="#000"/><rect x="1574" y="621.1" width="1" height="14.6" fill="#000"/><rect x="1572" y="623.1" width="5" height="5.3" fill="#000"/><rect x="1582" y="627.2" width="1" height="4.1" fill="#000"/><rect x="1580" y="628.4" width="5" height="1.9" fill="#000"/><rect x="1590" y="622.3" width="1" height="10.9" fill="#000"/><rect x="1588.5" y="626.0" width="4" height="4.3" fill="#fff" stroke="#000" stroke-width="1"/><rect x="1598" y="622.3" width="1" height="10.9" fill="#000"/><rect x="1596" y="625.5" width="5" height="6.5" fill="#000"/><rect x="1606" y="619.9" width="1" height="12.1" fill="#000"/><rect x="1604.5" y="621.6" width="4" height="9.4" fill="#fff" stroke="#000" stroke-width="1"/><rect x="1614" y="613.4" width="1" height="22.3" fill="#000"/><rect x="1612" y="621.1" width="5" height="13.3" fill="#000"/><rect x="1622" y="622.3" width="1" height="12.1" fill="#000"/><rect x="1620.5" y="623.6" width="4" height="9.7" fill="#fff" stroke="#000" stroke-width="1"/><rect x="1630" y="613.4" width="1" height="11.4" fill="#000"/><rect x="1628.5" y="614.8" width="4" height="8.2" fill="#fff" stroke="#000" stroke-width="1"/><rect x="1638" y="612.6" width="1" height="9.7" fill="#000"/><rect x="1636" y="613.8" width="5" height="7.8" fill="#000"/><rect x="1646" y="621.1" width="1" height="28.6" fill="#000"/><rect x="1644" y="621.1" width="5" height="26.7" fill="#000"/><rect x="1654" y="634.5" width="1" height="19.4" fill="#000"/><rect x="1652.5" y="641.0" width="4" height="4.3" fill="#fff" stroke="#000" stroke-width="1"/><rect x="1662" y="634.5" width="1" height="20.6" fill="#000"/><rect x="1660" y="640.5" width="5" height="7.8" fill="#000"/><rect x="1670" y="627.9" width="1" height="34.0" fill="#000"/><rect x="1668" y="648.3" width="5" height="3.2" fill="#000"/><rect x="1678" y="645.4" width="1" height="17.0" fill="#000"/><rect x="1676.5" y="649.5" width="4" height="1.4" fill="#fff" stroke="#000" stroke-width="1"/><rect x="1686" y="633.3" width="1" height="25.5" fill="#000"/><rect x="1684.5" y="649.5" width="4" height="0.5" fill="#fff" stroke="#000" stroke-width="1"/><rect x="1694" y="599.3" width="1" height="49.7" fill="#000"/><rect x="1692.5" y="609.0" width="4" height="38.8" fill="#fff" stroke="#000" stroke-width="1"/><rect x="1702" y="590.1" width="1" height="18.9" fill="#000"/><rect x="1700.5" y="596.9" width="4" height="11.1" fill="#fff" stroke="#000" stroke-width="1"/></g>
<g clip-path="url(#cam30)"><rect x="1120" y="756.9" width="1" height="2.1" fill="#c0c0c0"/><rect x="1128" y="759.0" width="1" height="0.7" fill="#c0c0c0"/><rect x="1136" y="759.0" width="1" height="0.5" fill="#c0c0c0"/><rect x="1144" y="756.6" width="1" height="2.4" fill="#c0c0c0"/><rect x="1152" y="755.2" width="1" height="3.8" fill="#c0c0c0"/><rect x="1160" y="754.6" width="1" height="4.4" fill="#c0c0c0"/><rect x="1168" y="755.6" width="1" height="3.4" fill="#c0c0c0"/><rect x="1176" y="757.0" width="1" height="2.0" fill="#c0c0c0"/><rect x="1184" y="758.0" width="1" height="1.0" fill="#c0c0c0"/><rect x="1192" y="751.6" width="1" height="7.4" fill="#c0c0c0"/><rect x="1200" y="750.5" width="1" height="8.5" fill="#c0c0c0"/><rect x="1208" y="751.5" width="1" height="7.5" fill="#c0c0c0"/><rect x="1216" y="754.8" width="1" height="4.2" fill="#c0c0c0"/><rect x="1224" y="759.0" width="1" height="0.5" fill="#c0c0c0"/><rect x="1232" y="759.0" width="1" height="9.6" fill="#c0c0c0"/><rect x="1240" y="759.0" width="1" height="18.0" fill="#c0c0c0"/><rect x="1248" y="759.0" width="1" height="28.9" fill="#c0c0c0"/><rect x="1256" y="759.0" width="1" height="40.4" fill="#c0c0c0"/><rect x="1264" y="759.0" width="1" height="47.2" fill="#c0c0c0"/><rect x="1272" y="759.0" width="1" height="43.3" fill="#c0c0c0"/><rect x="1280" y="759.0" width="1" height="35.6" fill="#c0c0c0"/><rect x="1288" y="759.0" width="1" height="30.0" fill="#c0c0c0"/><rect x="1296" y="759.0" width="1" height="26.6" fill="#c0c0c0"/><rect x="1304" y="759.0" width="1" height="18.4" fill="#c0c0c0"/><rect x="1312" y="759.0" width="1" height="5.9" fill="#c0c0c0"/><rect x="1320" y="754.2" width="1" height="4.8" fill="#c0c0c0"/><rect x="1328" y="742.6" width="1" height="16.4" fill="#c0c0c0"/><rect x="1336" y="739.4" width="1" height="19.6" fill="#c0c0c0"/><rect x="1344" y="736.4" width="1" height="22.6" fill="#c0c0c0"/><rect x="1352" y="733.3" width="1" height="25.7" fill="#c0c0c0"/><rect x="1360" y="732.7" width="1" height="26.3" fill="#c0c0c0"/><rect x="1368" y="730.1" width="1" height="28.9" fill="#c0c0c0"/><rect x="1376" y="730.2" width="1" height="28.8" fill="#c0c0c0"/><rect x="1384" y="736.5" width="1" height="22.5" fill="#c0c0c0"/><rect x="1392" y="741.0" width="1" height="18.0" fill="#c0c0c0"/><rect x="1400" y="747.2" width="1" height="11.8" fill="#c0c0c0"/><rect x="1408" y="751.2" width="1" height="7.8" fill="#c0c0c0"/><rect x="1416" y="755.2" width="1" height="3.8" fill="#c0c0c0"/><rect x="1424" y="758.4" width="1" height="0.6" fill="#c0c0c0"/><rect x="1432" y="758.8" width="1" height="0.5" fill="#c0c0c0"/><rect x="1440" y="759.0" width="1" height="0.5" fill="#c0c0c0"/><rect x="1448" y="759.0" width="1" height="1.7" fill="#c0c0c0"/><rect x="1456" y="759.0" width="1" height="5.7" fill="#c0c0c0"/><rect x="1464" y="759.0" width="1" height="4.5" fill="#c0c0c0"/><rect x="1472" y="759.0" width="1" height="3.2" fill="#c0c0c0"/><rect x="1480" y="759.0" width="1" height="2.9" fill="#c0c0c0"/><rect x="1488" y="759.0" width="1" height="2.6" fill="#c0c0c0"/><rect x="1496" y="759.0" width="1" height="2.4" fill="#c0c0c0"/><rect x="1504" y="759.0" width="1" height="2.1" fill="#c0c0c0"/><rect x="1512" y="759.0" width="1" height="2.0" fill="#c0c0c0"/><rect x="1520" y="759.0" width="1" height="2.1" fill="#c0c0c0"/><rect x="1528" y="759.0" width="1" height="2.2" fill="#c0c0c0"/><rect x="1536" y="759.0" width="1" height="2.4" fill="#c0c0c0"/><rect x="1544" y="759.0" width="1" height="2.5" fill="#c0c0c0"/><rect x="1552" y="759.0" width="1" height="2.6" fill="#c0c0c0"/><rect x="1560" y="759.0" width="1" height="2.8" fill="#c0c0c0"/><rect x="1568" y="759.0" width="1" height="2.9" fill="#c0c0c0"/><rect x="1576" y="759.0" width="1" height="3.0" fill="#c0c0c0"/><rect x="1584" y="759.0" width="1" height="3.2" fill="#c0c0c0"/><rect x="1592" y="759.0" width="1" height="3.6" fill="#c0c0c0"/><rect x="1600" y="759.0" width="1" height="4.0" fill="#c0c0c0"/><rect x="1608" y="759.0" width="1" height="4.4" fill="#c0c0c0"/><rect x="1616" y="759.0" width="1" height="4.8" fill="#c0c0c0"/><rect x="1624" y="759.0" width="1" height="5.2" fill="#c0c0c0"/><rect x="1632" y="759.0" width="1" height="5.6" fill="#c0c0c0"/><rect x="1640" y="759.0" width="1" height="6.2" fill="#c0c0c0"/><rect x="1648" y="759.0" width="1" height="7.0" fill="#c0c0c0"/><rect x="1656" y="759.0" width="1" height="7.8" fill="#c0c0c0"/><rect x="1664" y="759.0" width="1" height="10.0" fill="#c0c0c0"/><rect x="1672" y="759.0" width="1" height="17.0" fill="#c0c0c0"/><rect x="1680" y="759.0" width="1" height="18.8" fill="#c0c0c0"/><rect x="1688" y="759.0" width="1" height="20.1" fill="#c0c0c0"/><rect x="1696" y="759.0" width="1" height="13.4" fill="#c0c0c0"/><rect x="1704" y="759.0" width="1" height="8.4" fill="#c0c0c0"/><polyline points="1118.1,750.4 1131.2,758.3 1149.6,762.2 1167.9,761.7 1183.6,758.3 1199.4,755.6 1215.1,753.8 1228.2,754.3 1241.3,758.3 1257.0,770.0 1270.1,779.2 1283.3,785.8 1301.6,791.0 1320.0,787.1 1335.7,775.3 1351.4,760.9 1367.1,749.1 1382.9,739.9 1390.7,736.5 1406.5,736.0 1419.6,739.9 1437.9,749.1 1458.9,758.3 1477.2,760.9 1510.0,762.7 1505.0,763.5 1557.4,762.2 1609.8,764.8 1662.2,766.6 1688.5,770.0 1701.6,770.6" fill="none" stroke="#c0392b" stroke-width="1" stroke-dasharray="4,3" stroke-linejoin="round"/></g>
<g clip-path="url(#csm30)"><polyline points="1119.4,884.1 1126.0,872.3 1136.5,859.2 1144.3,848.7 1154.8,834.3 1162.7,834.3 1170.5,836.9 1182.3,843.4 1191.5,836.9 1199.4,840.8 1209.9,856.6 1223.0,895.9 1230.8,895.9 1238.7,902.4 1246.6,902.4 1255.7,905.0 1262.3,902.4 1272.8,880.1 1285.9,844.8 1293.7,842.1 1301.6,834.3 1310.8,830.3 1322.6,830.3 1327.8,831.7 1333.1,839.5 1340.9,843.4 1351.4,856.6 1359.3,859.2 1367.1,859.2 1380.2,872.3 1388.1,885.4 1398.6,901.1 1409.1,899.8 1422.2,893.3 1437.9,890.1 1448.4,880.1 1464.1,863.1 1472.0,858.7 1477.2,838.2 1490.3,848.7 1502.1,857.9 1510.0,850.0 1510.2,850.0 1518.1,852.6 1526.0,861.8 1533.8,878.8 1549.6,876.2 1557.4,867.0 1567.9,869.6 1583.6,875.4 1591.5,871.7 1598.0,873.6 1605.9,860.5 1615.1,880.6 1628.2,865.7 1638.7,847.3 1651.8,874.9 1662.2,894.5 1672.7,891.1 1685.8,890.1 1701.6,844.7" fill="none" stroke="#2bb0a8" stroke-width="1" stroke-linejoin="round"/><polyline points="1119.4,893.3 1131.2,880.1 1144.3,861.8 1157.4,843.4 1167.9,835.1 1178.4,836.9 1194.1,839.5 1204.6,843.4 1215.1,860.5 1225.6,882.8 1238.7,898.5 1251.8,902.4 1262.3,902.4 1272.8,893.3 1285.9,869.7 1299.0,848.7 1309.5,835.6 1322.6,830.3 1333.1,834.3 1346.2,847.4 1359.3,856.6 1372.4,861.8 1385.5,871.0 1398.6,889.3 1409.1,897.2 1422.2,894.6 1437.9,891.2 1453.6,882.8 1472.0,865.7 1485.1,847.4 1495.6,846.1 1510.0,853.9 1526.0,855.2 1536.4,867.0 1549.6,877.5 1562.7,870.9 1578.4,872.2 1596.7,870.9 1615.1,870.9 1630.8,870.9 1643.9,860.5 1654.4,868.3 1667.5,889.3 1678.0,893.2 1688.5,888.0 1701.6,868.3" fill="none" stroke="#d63a3a" stroke-width="1" stroke-dasharray="4,3" stroke-linejoin="round"/></g>
<text x="1121" y="734.5" font-size="9.5" fill="#000000" textLength="153.6" lengthAdjust="spacingAndGlyphs" stroke="#000000" stroke-width="0.28">MACD(12,26,9) -0.000043 -0.000176</text>
<text x="1121" y="828.5" font-size="9.5" fill="#000000" textLength="102.2" lengthAdjust="spacingAndGlyphs" stroke="#000000" stroke-width="0.28">Stoch(8,3,3) 71.51 47.88</text>
<rect x="1118.5" y="531.5" width="734" height="189" fill="none" stroke="#000000" stroke-width="1"/>
<rect x="1118.5" y="722.5" width="734" height="92" fill="none" stroke="#000000" stroke-width="1"/>
<rect x="1118.5" y="816.5" width="734" height="97" fill="none" stroke="#000000" stroke-width="1"/>
<line x1="1853" y1="558.5" x2="1857" y2="558.5" stroke="#000000" stroke-width="1"/>
<text x="1858" y="562" font-size="9.5" fill="#000000" textLength="32.6" lengthAdjust="spacingAndGlyphs" stroke="#000000" stroke-width="0.28">1.26480</text>
<line x1="1853" y1="591.5" x2="1857" y2="591.5" stroke="#000000" stroke-width="1"/>
<text x="1858" y="595" font-size="9.5" fill="#000000" textLength="32.6" lengthAdjust="spacingAndGlyphs" stroke="#000000" stroke-width="0.28">1.26350</text>
<line x1="1853" y1="623.5" x2="1857" y2="623.5" stroke="#000000" stroke-width="1"/>
<text x="1858" y="627" font-size="9.5" fill="#000000" textLength="32.6" lengthAdjust="spacingAndGlyphs" stroke="#000000" stroke-width="0.28">1.26220</text>
<line x1="1853" y1="655.5" x2="1857" y2="655.5" stroke="#000000" stroke-width="1"/>
<text x="1858" y="659" font-size="9.5" fill="#000000" textLength="32.6" lengthAdjust="spacingAndGlyphs" stroke="#000000" stroke-width="0.28">1.26090</text>
<line x1="1853" y1="688.5" x2="1857" y2="688.5" stroke="#000000" stroke-width="1"/>
<text x="1858" y="692" font-size="9.5" fill="#000000" textLength="32.6" lengthAdjust="spacingAndGlyphs" stroke="#000000" stroke-width="0.28">1.25960</text>
<rect x="1855" y="590.5" width="39" height="11" fill="#c4c4c4"/>
<text x="1858" y="600" font-size="9.5" fill="#ffffff" textLength="32.1" lengthAdjust="spacingAndGlyphs" stroke="#ffffff" stroke-width="0.28">1.26329</text>
<line x1="1853" y1="723.5" x2="1857" y2="723.5" stroke="#000000" stroke-width="1"/>
<text x="1858" y="731" font-size="9.5" fill="#000000" textLength="37.6" lengthAdjust="spacingAndGlyphs" stroke="#000000" stroke-width="0.28">0.000545</text>
<line x1="1853" y1="759.5" x2="1857" y2="759.5" stroke="#000000" stroke-width="1"/>
<text x="1858" y="763" font-size="9.5" fill="#000000" textLength="37.6" lengthAdjust="spacingAndGlyphs" stroke="#000000" stroke-width="0.28">0.000000</text>
<line x1="1853" y1="813.5" x2="1857" y2="813.5" stroke="#000000" stroke-width="1"/>
<text x="1858" y="812" font-size="9.5" fill="#000000" textLength="40.6" lengthAdjust="spacingAndGlyphs" stroke="#000000" stroke-width="0.28">-0.000824</text>
<line x1="1853" y1="817.5" x2="1857" y2="817.5" stroke="#000000" stroke-width="1"/>
<text x="1858" y="825" font-size="9.5" fill="#000000" textLength="27.6" lengthAdjust="spacingAndGlyphs" stroke="#000000" stroke-width="0.28">100.00</text>
<line x1="1853" y1="835.5" x2="1857" y2="835.5" stroke="#000000" stroke-width="1"/>
<text x="1858" y="839" font-size="9.5" fill="#000000" textLength="22.6" lengthAdjust="spacingAndGlyphs" stroke="#000000" stroke-width="0.28">80.00</text>
<line x1="1853" y1="894.5" x2="1857" y2="894.5" stroke="#000000" stroke-width="1"/>
<text x="1858" y="898" font-size="9.5" fill="#000000" textLength="22.6" lengthAdjust="spacingAndGlyphs" stroke="#000000" stroke-width="0.28">20.00</text>
<line x1="1853" y1="912.5" x2="1857" y2="912.5" stroke="#000000" stroke-width="1"/>
<text x="1858" y="911" font-size="9.5" fill="#000000" textLength="17.6" lengthAdjust="spacingAndGlyphs" stroke="#000000" stroke-width="0.28">0.00</text>
<line x1="1118.5" y1="913" x2="1118.5" y2="918" stroke="#000000" stroke-width="1"/>
<text x="1118" y="926" font-size="9.5" fill="#000000" textLength="51.2" lengthAdjust="spacingAndGlyphs" stroke="#000000" stroke-width="0.28">28 Mar 2024</text>
<line x1="1182.5" y1="913" x2="1182.5" y2="918" stroke="#000000" stroke-width="1"/>
<text x="1182" y="926" font-size="9.5" fill="#000000" textLength="53.7" lengthAdjust="spacingAndGlyphs" stroke="#000000" stroke-width="0.28">28 Mar 04:30</text>
<line x1="1246.5" y1="913" x2="1246.5" y2="918" stroke="#000000" stroke-width="1"/>
<text x="1246" y="926" font-size="9.5" fill="#000000" textLength="53.7" lengthAdjust="spacingAndGlyphs" stroke="#000000" stroke-width="0.28">28 Mar 08:30</text>
<line x1="1310.5" y1="913" x2="1310.5" y2="918" stroke="#000000" stroke-width="1"/>
<text x="1310" y="926" font-size="9.5" fill="#000000" textLength="53.7" lengthAdjust="spacingAndGlyphs" stroke="#000000" stroke-width="0.28">28 Mar 12:30</text>
<line x1="1374.5" y1="913" x2="1374.5" y2="918" stroke="#000000" stroke-width="1"/>
<text x="1374" y="926" font-size="9.5" fill="#000000" textLength="53.7" lengthAdjust="spacingAndGlyphs" stroke="#000000" stroke-width="0.28">28 Mar 16:30</text>
<line x1="1438.5" y1="913" x2="1438.5" y2="918" stroke="#000000" stroke-width="1"/>
<text x="1438" y="926" font-size="9.5" fill="#000000" textLength="53.7" lengthAdjust="spacingAndGlyphs" stroke="#000000" stroke-width="0.28">28 Mar 20:30</text>
<line x1="1502.5" y1="913" x2="1502.5" y2="918" stroke="#000000" stroke-width="1"/>
<text x="1502" y="926" font-size="9.5" fill="#000000" textLength="53.7" lengthAdjust="spacingAndGlyphs" stroke="#000000" stroke-width="0.28">29 Mar 00:30</text>
<line x1="1566.5" y1="913" x2="1566.5" y2="918" stroke="#000000" stroke-width="1"/>
<text x="1566" y="926" font-size="9.5" fill="#000000" textLength="53.7" lengthAdjust="spacingAndGlyphs" stroke="#000000" stroke-width="0.28">29 Mar 04:30</text>
<line x1="1630.5" y1="913" x2="1630.5" y2="918" stroke="#000000" stroke-width="1"/>
<text x="1630" y="926" font-size="9.5" fill="#000000" textLength="53.7" lengthAdjust="spacingAndGlyphs" stroke="#000000" stroke-width="0.28">29 Mar 08:30</text>
<line x1="1694.5" y1="913" x2="1694.5" y2="918" stroke="#000000" stroke-width="1"/>
<text x="1694" y="926" font-size="9.5" fill="#000000" textLength="53.7" lengthAdjust="spacingAndGlyphs" stroke="#000000" stroke-width="0.28">29 Mar 12:30</text>
<path d="M1698,532 L1706,532 L1702,536 Z" fill="#9aa0a6"/>
<rect x="302" y="54" width="1610" height="1" fill="#62676b"/>
<rect x="302" y="498" width="1610" height="1" fill="#62676b"/>
<rect x="302" y="942" width="1610" height="27" fill="#f0f0f0"/>
<line x1="302" y1="945.5" x2="1912" y2="945.5" stroke="#111" stroke-width="1"/>
<path d="M305.5,945.5 L305.5,963.5 L400.5,963.5 L400.5,945.5" fill="#fff" stroke="#111" stroke-width="1.2"/>
<rect x="306" y="946" width="94" height="17" fill="#fff"/>
<text x="316" y="959.3" font-size="12" fill="#111" textLength="73" lengthAdjust="spacingAndGlyphs">GBPUSD,Daily</text>
<text x="413" y="959.3" font-size="12" fill="#7a7a7a" textLength="62" lengthAdjust="spacingAndGlyphs">GBPUSD,H1</text>
<line x1="486.5" y1="949" x2="486.5" y2="962" stroke="#888" stroke-width="1"/>
<text x="498" y="959.3" font-size="12" fill="#7a7a7a" textLength="62" lengthAdjust="spacingAndGlyphs">GBPUSD,H4</text>
<line x1="571.5" y1="949" x2="571.5" y2="962" stroke="#888" stroke-width="1"/>
<text x="583" y="959.3" font-size="12" fill="#7a7a7a" textLength="70" lengthAdjust="spacingAndGlyphs">GBPUSD,M30</text>
<path d="M1880,951.5 L1876,955 L1880,958.5 Z" fill="#b8b8b8"/>
<path d="M1897,951.5 L1901,955 L1897,958.5 Z" fill="#b8b8b8"/>
<rect x="302" y="964" width="1610" height="1" fill="#dcdcdc"/>
</svg>
</body></html>
